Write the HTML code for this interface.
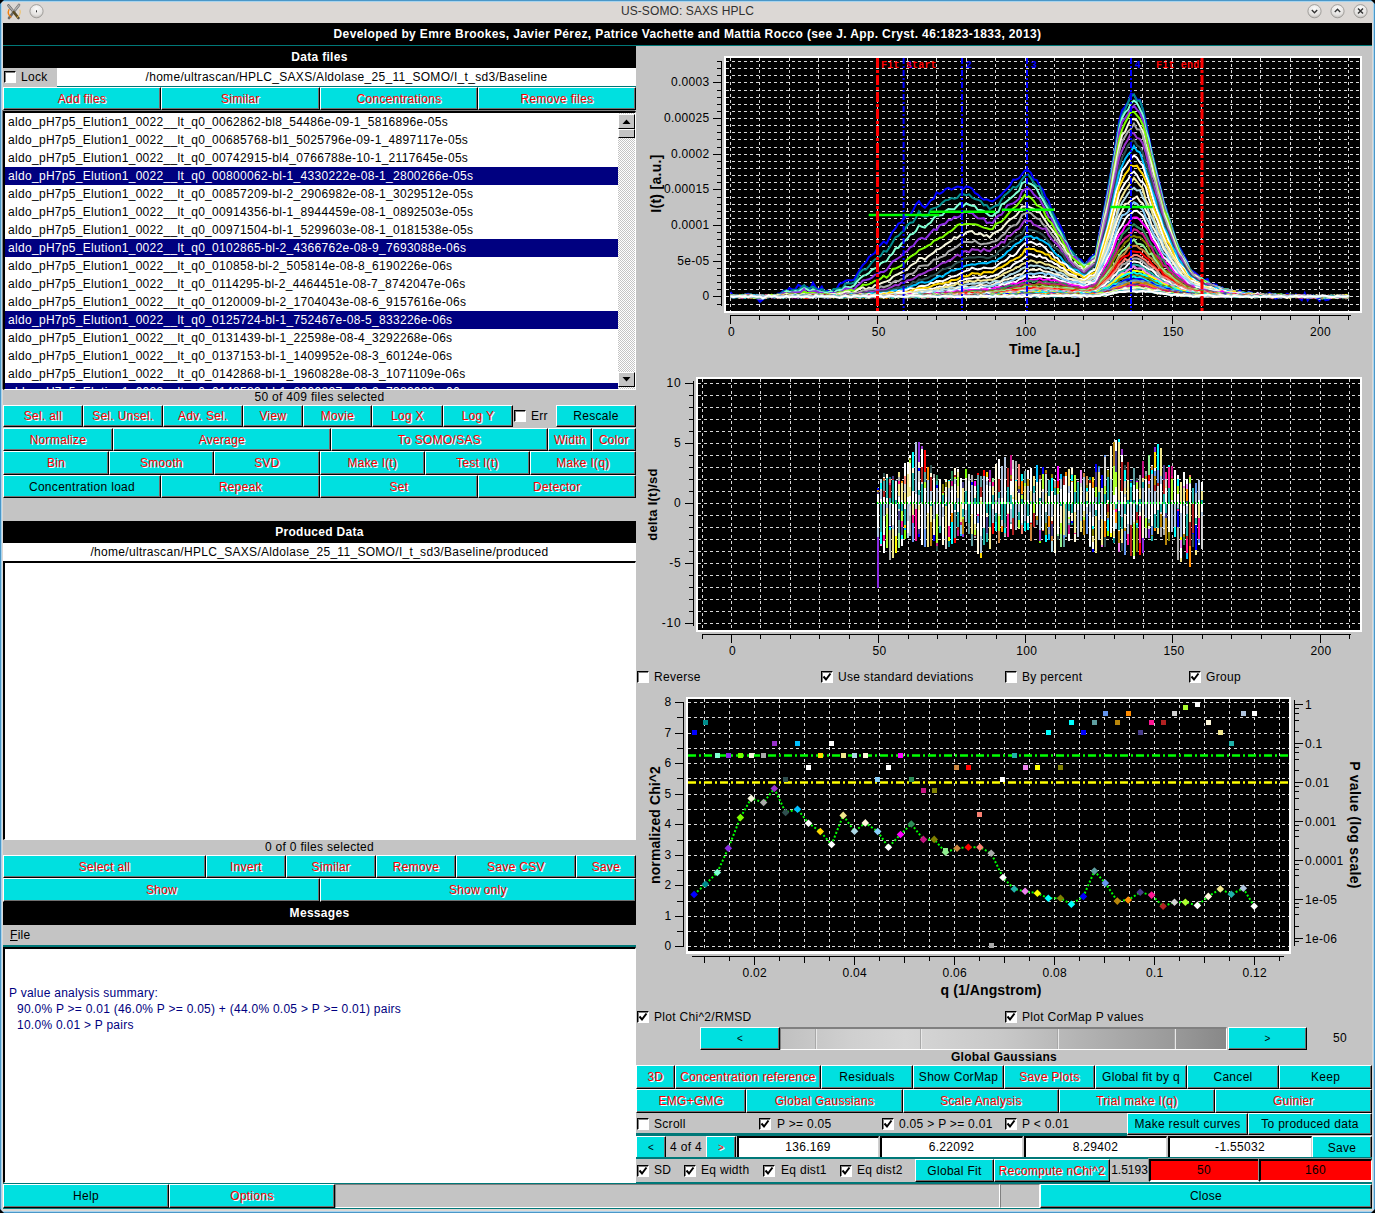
<!DOCTYPE html><html><head><meta charset="utf-8"><style>
html,body{margin:0;padding:0;width:1375px;height:1213px;overflow:hidden;background:#c4c4c4;font-family:"Liberation Sans", sans-serif;}
div{position:absolute;box-sizing:border-box;}
.t{white-space:nowrap;overflow:visible;}
.b{background:#00e0e0;border-top:1px solid #fff;border-left:1px solid #fff;border-right:1px solid #000;border-bottom:1px solid #000;box-shadow:inset -1px -1px 0 #707070;text-align:center;font-size:12px;letter-spacing:0.3px;color:#000;white-space:nowrap;overflow:hidden;}
.r{color:#f00;text-shadow:1px 1px 0 #fff;}
.cb{width:12px;height:12px;background:#fff;border-top:1px solid #000;border-left:1px solid #000;border-right:1px solid #fff;border-bottom:1px solid #fff;box-shadow:inset 1px 1px 0 #808080;}

</style></head><body>
<div style="left:0px;top:0px;width:1375px;height:1213px;background:#4a97c8;"></div>
<div style="left:1px;top:1px;width:1373px;height:1211px;background:#a8d4ee;"></div>
<div style="left:2px;top:2px;width:1371px;height:1209px;background:#dcd8d5;"></div>
<svg width="1375" height="1213" style="position:absolute;left:0;top:0"><path d="M0 0H4L0 4Z M1375 0H1371L1375 4Z M0 1213H4L0 1209Z M1375 1213H1371L1375 1209Z" fill="#000"/></svg>
<div style="left:3px;top:23px;width:1369px;height:1186px;background:#c4c4c4;"></div>
<div class="t" style="left:0px;top:1px;width:1375px;height:21px;line-height:21px;text-align:center;color:#303030;font-size:12px;font-weight:normal;letter-spacing:0.1px;">US-SOMO: SAXS HPLC</div>
<svg width="1375" height="23" style="position:absolute;left:0;top:0">
<defs><radialGradient id="gb" cx="50%" cy="30%" r="70%"><stop offset="0" stop-color="#fbfbfb"/><stop offset="0.7" stop-color="#e4e2e0"/><stop offset="1" stop-color="#bdbab7"/></radialGradient></defs>
<g stroke-linecap="round">
<path d="M8.5 5.5 L18.5 18" stroke="#555" stroke-width="2.6"/><path d="M19 5 L9 18" stroke="#6a6a6a" stroke-width="2.6"/>
<path d="M8.5 5.5 L13 11" stroke="#a8a8a8" stroke-width="1.6"/><path d="M19 5 L15 10" stroke="#b0b0b0" stroke-width="1.6"/>
<path d="M13.5 12 L18 17.5" stroke="#5a4a20" stroke-width="2.2"/>
<path d="M9 9.5 A6 6 0 0 0 11 17" stroke="#f08010" stroke-width="1.3" fill="none"/>
<path d="M20 10 A6 6 0 0 1 17 17.5" stroke="#f0c060" stroke-width="1" fill="none"/>
</g>
<circle cx="36.5" cy="11.2" r="6.6" fill="url(#gb)" stroke="#9a9794" stroke-width="0.9"/><rect x="36" y="10.3" width="1" height="2" fill="#333"/>
<circle cx="1314.5" cy="11.2" r="6.6" fill="url(#gb)" stroke="#9a9794" stroke-width="0.9"/><path d="M1311.8 10 L1314.5 12.7 L1317.2 10" stroke="#333" stroke-width="1.4" fill="none"/>
<circle cx="1337.5" cy="11.2" r="6.6" fill="url(#gb)" stroke="#9a9794" stroke-width="0.9"/><path d="M1334.8 12 L1337.5 9.3 L1340.2 12" stroke="#333" stroke-width="1.4" fill="none"/>
<circle cx="1360.5" cy="11.2" r="6.6" fill="url(#gb)" stroke="#9a9794" stroke-width="0.9"/><path d="M1358 8.4 L1363 13.6 M1363 8.4 L1358 13.6" stroke="#333" stroke-width="1.4" fill="none"/>
</svg>
<div style="left:3px;top:23px;width:1369px;height:22px;background:#000;"></div>
<div class="t" style="left:3px;top:23px;width:1369px;height:22px;line-height:22px;text-align:center;color:#fff;font-size:12px;font-weight:bold;letter-spacing:0.38px;">Developed by Emre Brookes, Javier Pérez, Patrice Vachette and Mattia Rocco (see J. App. Cryst. 46:1823-1833, 2013)</div>
<div style="left:3px;top:45px;width:1369px;height:1px;background:#007878;"></div>
<div style="left:3px;top:46px;width:633px;height:22px;background:#000;"></div>
<div class="t" style="left:3px;top:46px;width:633px;height:22px;line-height:22px;text-align:center;color:#fff;font-size:12px;font-weight:bold;letter-spacing:0.3px;">Data files</div>
<div style="left:57px;top:68px;width:579px;height:18px;background:#fff;"></div>
<div style="left:57px;top:86px;width:579px;height:1px;background:#007878;"></div>
<div class="cb" style="left:4px;top:71px"></div>
<div class="t" style="left:21px;top:68px;width:40px;height:18px;line-height:18px;text-align:left;color:#000;font-size:12px;font-weight:normal;letter-spacing:0.3px;">Lock</div>
<div class="t" style="left:57px;top:68px;width:579px;height:18px;line-height:18px;text-align:center;color:#000;font-size:12px;font-weight:normal;letter-spacing:0.3px;">/home/ultrascan/HPLC_SAXS/Aldolase_25_11_SOMO/I_t_sd3/Baseline</div>
<div class="b r" style="left:3px;top:87px;width:158px;height:23px;line-height:22px;">Add files</div>
<div class="b r" style="left:161px;top:87px;width:159px;height:23px;line-height:22px;">Similar</div>
<div class="b r" style="left:320px;top:87px;width:158px;height:23px;line-height:22px;">Concentrations</div>
<div class="b r" style="left:478px;top:87px;width:158px;height:23px;line-height:22px;">Remove files</div>
<div style="left:3px;top:111px;width:633px;height:279px;background:#fff;border-top:2px solid #000;border-left:2px solid #000;border-right:1px solid #fff;border-bottom:1px solid #fff;box-shadow:-1px -1px 0 #808080;overflow:hidden"></div>
<div style="left:5px;top:113px;width:613px;height:276px;overflow:hidden">
<div class="t" style="left:3px;top:0px;height:18px;line-height:18px;font-size:12px;letter-spacing:0.31px;color:#000">aldo_pH7p5_Elution1_0022__lt_q0_0062862-bl8_54486e-09-1_5816896e-05s</div>
<div class="t" style="left:3px;top:18px;height:18px;line-height:18px;font-size:12px;letter-spacing:0.31px;color:#000">aldo_pH7p5_Elution1_0022__lt_q0_00685768-bl1_5025796e-09-1_4897117e-05s</div>
<div class="t" style="left:3px;top:36px;height:18px;line-height:18px;font-size:12px;letter-spacing:0.31px;color:#000">aldo_pH7p5_Elution1_0022__lt_q0_00742915-bl4_0766788e-10-1_2117645e-05s</div>
<div style="left:0;top:54px;width:613px;height:18px;background:#000080"></div>
<div class="t" style="left:3px;top:54px;height:18px;line-height:18px;font-size:12px;letter-spacing:0.31px;color:#fff">aldo_pH7p5_Elution1_0022__lt_q0_00800062-bl-1_4330222e-08-1_2800266e-05s</div>
<div class="t" style="left:3px;top:72px;height:18px;line-height:18px;font-size:12px;letter-spacing:0.31px;color:#000">aldo_pH7p5_Elution1_0022__lt_q0_00857209-bl-2_2906982e-08-1_3029512e-05s</div>
<div class="t" style="left:3px;top:90px;height:18px;line-height:18px;font-size:12px;letter-spacing:0.31px;color:#000">aldo_pH7p5_Elution1_0022__lt_q0_00914356-bl-1_8944459e-08-1_0892503e-05s</div>
<div class="t" style="left:3px;top:108px;height:18px;line-height:18px;font-size:12px;letter-spacing:0.31px;color:#000">aldo_pH7p5_Elution1_0022__lt_q0_00971504-bl-1_5299603e-08-1_0181538e-05s</div>
<div style="left:0;top:126px;width:613px;height:18px;background:#000080"></div>
<div class="t" style="left:3px;top:126px;height:18px;line-height:18px;font-size:12px;letter-spacing:0.31px;color:#fff">aldo_pH7p5_Elution1_0022__lt_q0_0102865-bl-2_4366762e-08-9_7693088e-06s</div>
<div class="t" style="left:3px;top:144px;height:18px;line-height:18px;font-size:12px;letter-spacing:0.31px;color:#000">aldo_pH7p5_Elution1_0022__lt_q0_010858-bl-2_505814e-08-8_6190226e-06s</div>
<div class="t" style="left:3px;top:162px;height:18px;line-height:18px;font-size:12px;letter-spacing:0.31px;color:#000">aldo_pH7p5_Elution1_0022__lt_q0_0114295-bl-2_4464451e-08-7_8742047e-06s</div>
<div class="t" style="left:3px;top:180px;height:18px;line-height:18px;font-size:12px;letter-spacing:0.31px;color:#000">aldo_pH7p5_Elution1_0022__lt_q0_0120009-bl-2_1704043e-08-6_9157616e-06s</div>
<div style="left:0;top:198px;width:613px;height:18px;background:#000080"></div>
<div class="t" style="left:3px;top:198px;height:18px;line-height:18px;font-size:12px;letter-spacing:0.31px;color:#fff">aldo_pH7p5_Elution1_0022__lt_q0_0125724-bl-1_752467e-08-5_833226e-06s</div>
<div class="t" style="left:3px;top:216px;height:18px;line-height:18px;font-size:12px;letter-spacing:0.31px;color:#000">aldo_pH7p5_Elution1_0022__lt_q0_0131439-bl-1_22598e-08-4_3292268e-06s</div>
<div class="t" style="left:3px;top:234px;height:18px;line-height:18px;font-size:12px;letter-spacing:0.31px;color:#000">aldo_pH7p5_Elution1_0022__lt_q0_0137153-bl-1_1409952e-08-3_60124e-06s</div>
<div class="t" style="left:3px;top:252px;height:18px;line-height:18px;font-size:12px;letter-spacing:0.31px;color:#000">aldo_pH7p5_Elution1_0022__lt_q0_0142868-bl-1_1960828e-08-3_1071109e-06s</div>
<div style="left:0;top:270px;width:613px;height:18px;background:#000080"></div>
<div class="t" style="left:3px;top:270px;height:18px;line-height:18px;font-size:12px;letter-spacing:0.31px;color:#fff">aldo_pH7p5_Elution1_0022__lt_q0_0148582-bl-1_2000227e-08-2_7382088e-06s</div>
</div>
<div style="left:618px;top:113px;width:17px;height:276px;background:repeating-conic-gradient(#c4c4c4 0 25%, #fff 0 50%) 0 0/2px 2px;"></div>
<div style="left:618px;top:114px;width:17px;height:15px;background:#c4c4c4;border-top:1px solid #fff;border-left:1px solid #fff;border-right:1px solid #000;border-bottom:1px solid #000"><svg width="15" height="13" style="position:absolute;left:0;top:0"><path d="M3.5 9 L11.5 9 L7.5 4.5 Z" fill="#000"/></svg></div>
<div style="left:618px;top:129px;width:17px;height:9px;background:#c4c4c4;border-top:1px solid #fff;border-left:1px solid #fff;border-right:1px solid #000;border-bottom:1px solid #000"></div>
<div style="left:618px;top:372px;width:17px;height:15px;background:#c4c4c4;border-top:1px solid #fff;border-left:1px solid #fff;border-right:1px solid #000;border-bottom:1px solid #000"><svg width="15" height="13" style="position:absolute;left:0;top:0"><path d="M3.5 4 L11.5 4 L7.5 8.5 Z" fill="#000"/></svg></div>
<div class="t" style="left:3px;top:390px;width:633px;height:15px;line-height:15px;text-align:center;color:#000;font-size:12px;font-weight:normal;letter-spacing:0.3px;">50 of 409 files selected</div>
<div class="b r" style="left:3px;top:405px;width:80px;height:22px;line-height:21px;">Sel. all</div>
<div class="b r" style="left:83px;top:405px;width:80px;height:22px;line-height:21px;">Sel. Unsel.</div>
<div class="b r" style="left:163px;top:405px;width:80px;height:22px;line-height:21px;">Adv. Sel.</div>
<div class="b r" style="left:243px;top:405px;width:60px;height:22px;line-height:21px;">View</div>
<div class="b r" style="left:303px;top:405px;width:69px;height:22px;line-height:21px;">Movie</div>
<div class="b r" style="left:372px;top:405px;width:71px;height:22px;line-height:21px;">Log X</div>
<div class="b r" style="left:443px;top:405px;width:70px;height:22px;line-height:21px;">Log Y</div>
<div class="b" style="left:556px;top:405px;width:80px;height:22px;line-height:21px;">Rescale</div>
<div class="cb" style="left:514px;top:410px"></div>
<div class="t" style="left:531px;top:405px;width:25px;height:22px;line-height:22px;text-align:left;color:#000;font-size:12px;font-weight:normal;letter-spacing:0.3px;">Err</div>
<div class="b r" style="left:3px;top:428px;width:110px;height:23px;line-height:22px;">Normalize</div>
<div class="b r" style="left:113px;top:428px;width:218px;height:23px;line-height:22px;">Average</div>
<div class="b r" style="left:331px;top:428px;width:217px;height:23px;line-height:22px;">To SOMO/SAS</div>
<div class="b r" style="left:548px;top:428px;width:44px;height:23px;line-height:22px;">Width</div>
<div class="b r" style="left:592px;top:428px;width:44px;height:23px;line-height:22px;">Color</div>
<div class="b r" style="left:3px;top:451px;width:106px;height:24px;line-height:23px;">Bin</div>
<div class="b r" style="left:109px;top:451px;width:105px;height:24px;line-height:23px;">Smooth</div>
<div class="b r" style="left:214px;top:451px;width:106px;height:24px;line-height:23px;">SVD</div>
<div class="b r" style="left:320px;top:451px;width:105px;height:24px;line-height:23px;">Make I(t)</div>
<div class="b r" style="left:425px;top:451px;width:105px;height:24px;line-height:23px;">Test I(t)</div>
<div class="b r" style="left:530px;top:451px;width:106px;height:24px;line-height:23px;">Make I(q)</div>
<div class="b" style="left:3px;top:475px;width:158px;height:23px;line-height:22px;">Concentration load</div>
<div class="b r" style="left:161px;top:475px;width:159px;height:23px;line-height:22px;">Repeak</div>
<div class="b r" style="left:320px;top:475px;width:158px;height:23px;line-height:22px;">Set</div>
<div class="b r" style="left:478px;top:475px;width:158px;height:23px;line-height:22px;">Detector</div>
<div style="left:3px;top:521px;width:633px;height:22px;background:#000;"></div>
<div class="t" style="left:3px;top:521px;width:633px;height:22px;line-height:22px;text-align:center;color:#fff;font-size:12px;font-weight:bold;letter-spacing:0.3px;">Produced Data</div>
<div style="left:3px;top:543px;width:633px;height:18px;background:#fff;"></div>
<div class="t" style="left:3px;top:543px;width:633px;height:18px;line-height:18px;text-align:center;color:#000;font-size:12px;font-weight:normal;letter-spacing:0.3px;">/home/ultrascan/HPLC_SAXS/Aldolase_25_11_SOMO/I_t_sd3/Baseline/produced</div>
<div style="left:3px;top:561px;width:633px;height:279px;background:#fff;border-top:2px solid #000;border-left:2px solid #000;border-right:1px solid #fff;border-bottom:1px solid #fff"></div>
<div class="t" style="left:3px;top:840px;width:633px;height:15px;line-height:15px;text-align:center;color:#000;font-size:12px;font-weight:normal;letter-spacing:0.3px;">0 of 0 files selected</div>
<div class="b r" style="left:3px;top:855px;width:203px;height:23px;line-height:22px;">Select all</div>
<div class="b r" style="left:206px;top:855px;width:80px;height:23px;line-height:22px;">Invert</div>
<div class="b r" style="left:286px;top:855px;width:90px;height:23px;line-height:22px;">Similar</div>
<div class="b r" style="left:376px;top:855px;width:80px;height:23px;line-height:22px;">Remove</div>
<div class="b r" style="left:456px;top:855px;width:120px;height:23px;line-height:22px;">Save CSV</div>
<div class="b r" style="left:576px;top:855px;width:60px;height:23px;line-height:22px;">Save</div>
<div class="b r" style="left:3px;top:878px;width:317px;height:24px;line-height:23px;">Show</div>
<div class="b r" style="left:320px;top:878px;width:316px;height:24px;line-height:23px;">Show only</div>
<div style="left:3px;top:902px;width:633px;height:23px;background:#000;"></div>
<div class="t" style="left:3px;top:902px;width:633px;height:23px;line-height:23px;text-align:center;color:#fff;font-size:12px;font-weight:bold;letter-spacing:0.3px;">Messages</div>
<div class="t" style="left:10px;top:925px;width:40px;height:21px;line-height:21px;text-align:left;color:#000;font-size:12px;font-weight:normal;letter-spacing:0.3px;"><u>F</u>ile</div>
<div style="left:3px;top:945px;width:633px;height:2px;background:#007878;"></div>
<div style="left:3px;top:947px;width:633px;height:236px;background:#fff;border-top:2px solid #000;border-left:2px solid #000;border-right:1px solid #fff;border-bottom:1px solid #fff"></div>
<div class="t" style="left:9px;top:985px;width:400px;height:16px;line-height:16px;text-align:left;color:#000080;font-size:12px;font-weight:normal;letter-spacing:0.26px;">P value analysis summary:</div>
<div class="t" style="left:17px;top:1001px;width:600px;height:16px;line-height:16px;text-align:left;color:#000080;font-size:12px;font-weight:normal;letter-spacing:0.26px;">90.0% P &gt;= 0.01 (46.0% P &gt;= 0.05) + (44.0% 0.05 &gt; P &gt;= 0.01) pairs</div>
<div class="t" style="left:17px;top:1017px;width:600px;height:16px;line-height:16px;text-align:left;color:#000080;font-size:12px;font-weight:normal;letter-spacing:0.26px;">10.0% 0.01 &gt; P pairs</div>
<svg width="1375" height="1213" style="position:absolute;left:0;top:0" font-family="Liberation Sans, sans-serif"><rect x="724" y="56" width="638" height="257" fill="#fff"/>
<rect x="726" y="58" width="634" height="253" fill="#000"/>
<svg x="726" y="58" width="634" height="253" overflow="hidden"><g transform="translate(-726,-58)">
<path d="M726 304.5H1360M726 296.5H1360M726 289.5H1360M726 282.5H1360M726 275.5H1360M726 268.5H1360M726 261.5H1360M726 254.5H1360M726 246.5H1360M726 239.5H1360M726 232.5H1360M726 225.5H1360M726 218.5H1360M726 211.5H1360M726 204.5H1360M726 197.5H1360M726 189.5H1360M726 182.5H1360M726 175.5H1360M726 168.5H1360M726 161.5H1360M726 154.5H1360M726 147.5H1360M726 139.5H1360M726 132.5H1360M726 125.5H1360M726 118.5H1360M726 111.5H1360M726 104.5H1360M726 97.5H1360M726 90.5H1360M726 82.5H1360M726 75.5H1360M726 68.5H1360M726 61.5H1360" stroke="#d8d8d8" stroke-width="1" stroke-dasharray="3 3" fill="none" shape-rendering="crispEdges"/>
<path d="M730.5 58V311M759.5 58V311M789.5 58V311M818.5 58V311M848.5 58V311M877.5 58V311M907.5 58V311M936.5 58V311M966.5 58V311M995.5 58V311M1025.5 58V311M1054.5 58V311M1083.5 58V311M1113.5 58V311M1142.5 58V311M1172.5 58V311M1201.5 58V311M1231.5 58V311M1260.5 58V311M1290.5 58V311M1319.5 58V311M1348.5 58V311" stroke="#d8d8d8" stroke-width="1" stroke-dasharray="3 3" fill="none" shape-rendering="crispEdges"/>
<g transform="translate(730.5 296.4) scale(2.945 0.1)" fill="none" stroke-width="2" style="vector-effect:non-scaling-stroke">
<path d="M0 -44l1 40 1 -6 1 -4 1 14 1 -21 1 -4 1 28 1 -14 1 25 1 40 1 -22 1 -27 1 3 1 -11 1 16 1 -41 1 -3 1 -28 1 8 1 -33 1 14 1 -2 1 -43 1 15 1 -2 1 8 1 25 1 -68 1 51 1 21 1 -33 1 63 1 -24 1 31 1 -40 1 -5 1 -53 1 -10 1 -18 1 -10 1 5 1 -9 1 -53 1 -51 1 -45 1 -25 1 -52 1 -20 1 -20 1 -57 1 -26 1 -31 1 19 1 -57 1 -60 1 -33 1 -49 1 -12 1 -49 1 -16 1 -12 1 -45 1 -58 1 -33 1 44 1 21 1 -32 1 -41 1 -16 1 -64 1 15 1 -17 1 -30 1 -12 1 17 1 -16 1 -15 1 5 1 22 1 -28 1 5 1 15 1 46 1 15 1 32 1 21 1 -6 1 15 1 7 1 -21 1 -23 1 -25 1 -33 1 -26 1 -35 1 -55 1 1 1 -17 1 -40 1 -36 1 -2 1 26 1 65 1 7 1 62 1 30 1 79 1 37 1 92 1 57 1 54 1 51 1 69 1 89 1 41 1 56 1 37 1 33 1 8 1 52 1 -22 1 -42 1 -22 1 -25 1 -166 1 -149 1 -151 1 -163 1 -155 1 -172 1 -189 1 -183 1 -105 1 -37 1 -45 1 -85 1 12 1 46 1 2 1 93 1 119 1 152 1 146 1 130 1 113 1 121 1 133 1 86 1 114 1 71 1 122 1 56 1 47 1 57 1 55 1 87 1 14 1 21 1 25 1 34 1 10 1 -11 1 74 1 -21 1 4 1 43 1 -16 1 37 1 2 1 8 1 -13 1 10 1 -13 1 39 1 -10 1 -17 1 9 1 36 1 -33 1 23 1 -13 1 3 1 -14 1 22 1 36 1 -8 1 -37 1 18 1 -24 1 16 1 20 1 -30 1 36 1 24 1 -71 1 73 1 -44 1 -3 1 17 1 34 1 -49 1 42 1 -3 1 -19 1 -22 1 7 1 -10 1 21 1 -7 1 16" stroke="#0000ff" vector-effect="non-scaling-stroke"/>
<path d="M0 -10l1 -3 1 7 1 -3 1 1 1 -6 1 -7 1 -1 1 24 1 17 1 6 1 -1 1 -11 1 -4 1 -15 1 -8 1 4 1 -13 1 -25 1 -15 1 22 1 -20 1 -3 1 -2 1 -23 1 -23 1 32 1 -6 1 -12 1 23 1 23 1 -20 1 20 1 7 1 -1 1 -27 1 -1 1 -7 1 5 1 -53 1 0 1 0 1 -9 1 -46 1 -56 1 -28 1 0 1 -33 1 -39 1 -29 1 -17 1 -19 1 -48 1 5 1 -42 1 -49 1 -53 1 -12 1 -33 1 -21 1 -54 1 -24 1 -5 1 -47 1 -64 1 45 1 10 1 -8 1 -66 1 -12 1 -7 1 -17 1 -31 1 -24 1 -3 1 -18 1 7 1 -9 1 -37 1 0 1 10 1 -9 1 32 1 16 1 6 1 13 1 44 1 -4 1 41 1 -17 1 -17 1 -6 1 -55 1 -42 1 -21 1 -27 1 -37 1 9 1 -32 1 -52 1 -35 1 -15 1 37 1 47 1 32 1 3 1 96 1 59 1 44 1 53 1 62 1 72 1 62 1 41 1 66 1 76 1 24 1 34 1 40 1 31 1 27 1 -19 1 -21 1 -41 1 -11 1 -167 1 -130 1 -165 1 -150 1 -185 1 -150 1 -178 1 -190 1 -89 1 -61 1 -68 1 -60 1 -20 1 64 1 -3 1 83 1 160 1 158 1 109 1 124 1 149 1 96 1 125 1 99 1 77 1 89 1 109 1 72 1 67 1 59 1 50 1 55 1 38 1 36 1 2 1 39 1 9 1 3 1 27 1 22 1 16 1 -7 1 15 1 4 1 4 1 13 1 7 1 9 1 18 1 -4 1 -4 1 2 1 -1 1 6 1 0 1 -1 1 12 1 -1 1 10 1 -13 1 6 1 -2 1 -6 1 4 1 7 1 -5 1 15 1 -8 1 4 1 12 1 -15 1 14 1 -6 1 8 1 -6 1 1 1 10 1 3 1 -9 1 -7 1 5 1 0 1 -8 1 18 1 -14 1 3" stroke="#008b8b" vector-effect="non-scaling-stroke"/>
<path d="M0 -11l1 8 1 3 1 -2 1 1 1 -12 1 1 1 -4 1 25 1 2 1 17 1 -13 1 -9 1 1 1 -15 1 -2 1 -3 1 -3 1 -15 1 -23 1 6 1 10 1 -15 1 6 1 -21 1 -16 1 13 1 19 1 -19 1 18 1 4 1 4 1 8 1 1 1 -17 1 20 1 -25 1 -7 1 -1 1 -33 1 7 1 -3 1 -15 1 -40 1 -31 1 -24 1 -10 1 -18 1 -32 1 -15 1 -10 1 -41 1 -14 1 -7 1 -49 1 -25 1 -54 1 -6 1 -40 1 -26 1 -23 1 -45 1 -5 1 -29 1 -56 1 14 1 9 1 -33 1 -19 1 -45 1 -28 1 3 1 -4 1 -40 1 -20 1 2 1 -1 1 -32 1 -29 1 31 1 -27 1 12 1 10 1 4 1 39 1 1 1 8 1 25 1 24 1 2 1 -28 1 -15 1 -73 1 -12 1 -25 1 -23 1 -23 1 -30 1 -24 1 -75 1 -14 1 13 1 9 1 18 1 33 1 60 1 44 1 54 1 49 1 57 1 67 1 60 1 40 1 71 1 31 1 70 1 59 1 22 1 31 1 26 1 21 1 -6 1 -22 1 -45 1 -21 1 -150 1 -150 1 -139 1 -158 1 -140 1 -189 1 -168 1 -175 1 -112 1 -55 1 -26 1 -65 1 -27 1 26 1 55 1 69 1 145 1 87 1 155 1 118 1 122 1 116 1 124 1 101 1 79 1 98 1 79 1 97 1 55 1 46 1 52 1 67 1 36 1 18 1 25 1 6 1 28 1 12 1 20 1 20 1 3 1 7 1 14 1 11 1 0 1 15 1 -1 1 14 1 6 1 -4 1 6 1 -7 1 15 1 0 1 9 1 7 1 1 1 -10 1 11 1 -11 1 -1 1 11 1 -11 1 9 1 -5 1 8 1 -4 1 13 1 -7 1 8 1 0 1 -2 1 5 1 3 1 -3 1 2 1 11 1 -12 1 -2 1 7 1 -8 1 8 1 -17 1 8 1 -2 1 -9" stroke="#7fffd4" vector-effect="non-scaling-stroke"/>
<path d="M0 -6l1 -3 1 11 1 -2 1 1 1 -10 1 -9 1 3 1 13 1 20 1 7 1 -9 1 -13 1 -3 1 -3 1 -6 1 1 1 -6 1 -19 1 -1 1 7 1 -15 1 4 1 -3 1 -3 1 -29 1 39 1 -11 1 -5 1 -4 1 15 1 3 1 13 1 -3 1 -5 1 -3 1 -2 1 -5 1 -10 1 -27 1 2 1 1 1 8 1 -40 1 -21 1 -31 1 -5 1 -7 1 -16 1 -29 1 -7 1 -20 1 -2 1 -18 1 -42 1 -43 1 -18 1 -18 1 -20 1 -36 1 -13 1 -39 1 -12 1 -41 1 -31 1 -9 1 12 1 -29 1 -35 1 -34 1 7 1 -47 1 -11 1 -7 1 -35 1 -2 1 -29 1 6 1 -14 1 -35 1 -15 1 19 1 -2 1 31 1 24 1 3 1 -4 1 48 1 -6 1 7 1 -46 1 -30 1 -8 1 -42 1 -53 1 -10 1 -8 1 -21 1 -26 1 -73 1 -23 1 -11 1 21 1 45 1 26 1 21 1 56 1 47 1 71 1 21 1 70 1 67 1 34 1 43 1 37 1 78 1 55 1 -3 1 45 1 32 1 35 1 -26 1 -46 1 -10 1 -23 1 -142 1 -164 1 -118 1 -157 1 -151 1 -172 1 -161 1 -192 1 -101 1 -36 1 -45 1 -51 1 -29 1 40 1 32 1 71 1 145 1 102 1 135 1 123 1 113 1 108 1 126 1 99 1 66 1 106 1 91 1 83 1 41 1 64 1 51 1 47 1 32 1 15 1 28 1 27 1 20 1 14 1 6 1 18 1 16 1 3 1 11 1 10 1 13 1 -5 1 6 1 6 1 8 1 7 1 1 1 -1 1 5 1 2 1 4 1 -3 1 3 1 8 1 -7 1 2 1 1 1 6 1 1 1 6 1 -11 1 18 1 -8 1 1 1 -5 1 7 1 8 1 4 1 -1 1 -3 1 2 1 3 1 2 1 -4 1 -8 1 10 1 -8 1 -10 1 5 1 4 1 -7 1 6" stroke="#8a2be2" vector-effect="non-scaling-stroke"/>
<path d="M0 -5l1 -8 1 -1 1 21 1 -16 1 -10 1 14 1 -6 1 5 1 17 1 1 1 -2 1 6 1 -17 1 0 1 -9 1 -8 1 4 1 -2 1 -14 1 10 1 -9 1 11 1 -2 1 -2 1 -26 1 13 1 1 1 -2 1 7 1 8 1 -4 1 6 1 -6 1 1 1 1 1 -6 1 -12 1 2 1 -18 1 -2 1 -6 1 16 1 -24 1 -14 1 -31 1 4 1 -9 1 -13 1 -20 1 -3 1 -18 1 -30 1 20 1 -28 1 -60 1 -3 1 -15 1 -15 1 -26 1 -35 1 -26 1 -17 1 -19 1 -33 1 -11 1 -12 1 -20 1 -13 1 -35 1 -11 1 -20 1 -5 1 -27 1 -22 1 -14 1 -27 1 -31 1 -12 1 4 1 -3 1 -1 1 3 1 -1 1 8 1 14 1 12 1 7 1 10 1 -3 1 -50 1 -14 1 -9 1 -31 1 -36 1 -33 1 -35 1 -19 1 -35 1 -40 1 -40 1 12 1 18 1 31 1 43 1 13 1 22 1 71 1 46 1 26 1 57 1 54 1 28 1 59 1 49 1 63 1 34 1 26 1 24 1 24 1 27 1 -17 1 -28 1 -9 1 -40 1 -138 1 -126 1 -133 1 -146 1 -137 1 -185 1 -168 1 -155 1 -100 1 -66 1 -54 1 -55 1 1 1 35 1 34 1 59 1 104 1 135 1 122 1 119 1 147 1 96 1 116 1 66 1 81 1 112 1 79 1 68 1 63 1 55 1 54 1 41 1 42 1 6 1 29 1 17 1 14 1 28 1 14 1 6 1 22 1 8 1 3 1 4 1 15 1 2 1 -1 1 0 1 24 1 -14 1 6 1 14 1 4 1 -9 1 7 1 -1 1 -2 1 9 1 -1 1 1 1 -2 1 -5 1 1 1 9 1 3 1 -14 1 12 1 3 1 11 1 -9 1 11 1 0 1 7 1 -3 1 -1 1 10 1 -4 1 -6 1 5 1 -1 1 -4 1 2 1 -13 1 8 1 -11 1 -2" stroke="#7cfc00" vector-effect="non-scaling-stroke"/>
<path d="M0 3l1 -6 1 3 1 5 1 -7 1 -2 1 -6 1 -3 1 21 1 0 1 -1 1 -7 1 17 1 -23 1 5 1 -11 1 10 1 0 1 -11 1 -13 1 13 1 10 1 -20 1 13 1 -9 1 -5 1 10 1 -5 1 -4 1 4 1 0 1 2 1 10 1 -4 1 -10 1 -4 1 1 1 -4 1 -3 1 -16 1 -2 1 12 1 -2 1 -25 1 -15 1 -12 1 23 1 -21 1 10 1 -33 1 -2 1 -16 1 -11 1 -9 1 -11 1 -33 1 -18 1 -12 1 -15 1 -16 1 -13 1 -37 1 -17 1 -16 1 -45 1 -1 1 17 1 -31 1 -20 1 -19 1 -33 1 -5 1 -21 1 -24 1 -18 1 -18 1 -37 1 9 1 -27 1 0 1 -29 1 -10 1 -3 1 28 1 4 1 -8 1 24 1 -8 1 25 1 -36 1 -18 1 -15 1 -16 1 -37 1 -34 1 -26 1 -18 1 -20 1 -38 1 -52 1 -1 1 -2 1 15 1 10 1 33 1 2 1 44 1 44 1 45 1 31 1 41 1 43 1 56 1 31 1 67 1 22 1 78 1 2 1 30 1 9 1 43 1 -49 1 3 1 -53 1 -11 1 -127 1 -136 1 -152 1 -118 1 -109 1 -201 1 -152 1 -143 1 -113 1 -31 1 -70 1 -55 1 -3 1 17 1 51 1 54 1 128 1 116 1 96 1 132 1 123 1 98 1 116 1 74 1 81 1 84 1 83 1 76 1 43 1 47 1 66 1 47 1 26 1 12 1 22 1 34 1 13 1 23 1 9 1 7 1 9 1 7 1 14 1 13 1 -5 1 10 1 1 1 6 1 2 1 5 1 2 1 10 1 -6 1 10 1 -1 1 -8 1 11 1 10 1 -13 1 5 1 0 1 6 1 -1 1 4 1 3 1 -12 1 13 1 2 1 2 1 -11 1 7 1 9 1 0 1 -1 1 0 1 16 1 -16 1 5 1 2 1 -3 1 -8 1 -7 1 8 1 -4 1 7 1 -9" stroke="#f5f5dc" vector-effect="non-scaling-stroke"/>
<path d="M0 -7l1 13 1 -5 1 -7 1 14 1 -10 1 -6 1 13 1 -2 1 1 1 -2 1 10 1 -16 1 3 1 -7 1 -1 1 4 1 -3 1 9 1 -7 1 2 1 -6 1 -9 1 16 1 -12 1 1 1 6 1 -19 1 6 1 -5 1 6 1 12 1 8 1 -21 1 12 1 2 1 -13 1 2 1 4 1 -11 1 -3 1 0 1 -5 1 -4 1 -10 1 -14 1 1 1 -10 1 1 1 -6 1 2 1 -28 1 9 1 -10 1 -10 1 -26 1 -19 1 6 1 -22 1 -4 1 -41 1 -5 1 -6 1 -27 1 -47 1 -3 1 -2 1 -1 1 -25 1 -36 1 1 1 -19 1 -10 1 -15 1 -39 1 -12 1 -16 1 -20 1 -24 1 -22 1 3 1 -1 1 3 1 -16 1 21 1 16 1 -7 1 -1 1 -6 1 -13 1 -4 1 -19 1 -33 1 -19 1 -41 1 -30 1 -17 1 -3 1 -37 1 -65 1 -12 1 -17 1 11 1 28 1 25 1 10 1 47 1 26 1 33 1 45 1 32 1 41 1 49 1 31 1 47 1 53 1 24 1 21 1 26 1 35 1 2 1 -22 1 -23 1 -20 1 -9 1 -137 1 -114 1 -161 1 -97 1 -152 1 -130 1 -161 1 -166 1 -98 1 -51 1 -50 1 -29 1 -49 1 55 1 2 1 62 1 127 1 113 1 141 1 64 1 132 1 95 1 126 1 71 1 92 1 69 1 77 1 65 1 40 1 58 1 52 1 52 1 11 1 39 1 7 1 42 1 11 1 3 1 16 1 -8 1 15 1 35 1 4 1 0 1 -6 1 10 1 9 1 15 1 1 1 16 1 -3 1 -10 1 0 1 14 1 -6 1 -7 1 10 1 5 1 -4 1 3 1 3 1 4 1 0 1 -3 1 5 1 -11 1 5 1 0 1 -3 1 4 1 3 1 8 1 5 1 -13 1 19 1 2 1 0 1 -8 1 -2 1 -5 1 6 1 8 1 -13 1 -5 1 4 1 0" stroke="#a9a9a9" vector-effect="non-scaling-stroke"/>
<path d="M0 -5l1 -5 1 9 1 8 1 -6 1 -3 1 9 1 -15 1 13 1 -5 1 4 1 1 1 -13 1 12 1 -1 1 -6 1 -4 1 3 1 3 1 -13 1 4 1 -10 1 12 1 -3 1 2 1 2 1 -6 1 -5 1 10 1 1 1 4 1 -14 1 13 1 -5 1 6 1 -7 1 2 1 9 1 -14 1 -10 1 16 1 -11 1 0 1 -3 1 -12 1 4 1 -14 1 -9 1 10 1 -11 1 -12 1 -1 1 -3 1 2 1 -19 1 -11 1 -18 1 6 1 -27 1 -1 1 -22 1 -5 1 -9 1 -21 1 -23 1 -7 1 -12 1 -19 1 -10 1 -12 1 -17 1 -23 1 -19 1 -3 1 -18 1 -11 1 -25 1 -25 1 16 1 -46 1 -6 1 12 1 -30 1 6 1 -1 1 20 1 -30 1 19 1 5 1 -30 1 -12 1 -20 1 -30 1 6 1 -66 1 -2 1 -28 1 -28 1 -13 1 -47 1 -41 1 10 1 1 1 37 1 9 1 20 1 12 1 -6 1 69 1 37 1 32 1 25 1 39 1 55 1 19 1 49 1 26 1 43 1 18 1 5 1 40 1 -38 1 -21 1 -20 1 -24 1 -118 1 -121 1 -112 1 -125 1 -167 1 -128 1 -144 1 -149 1 -69 1 -63 1 -46 1 -67 1 6 1 46 1 9 1 48 1 90 1 127 1 133 1 94 1 109 1 91 1 109 1 84 1 53 1 79 1 80 1 60 1 33 1 65 1 51 1 39 1 43 1 1 1 30 1 19 1 12 1 1 1 28 1 0 1 16 1 20 1 -9 1 17 1 9 1 2 1 4 1 -4 1 12 1 -9 1 11 1 8 1 2 1 -4 1 15 1 3 1 -6 1 -7 1 4 1 3 1 2 1 12 1 -10 1 9 1 -15 1 5 1 2 1 -1 1 3 1 2 1 1 1 7 1 6 1 -8 1 -4 1 4 1 6 1 -6 1 5 1 -6 1 4 1 -5 1 -12 1 6 1 -5 1 11" stroke="#9932cc" vector-effect="non-scaling-stroke"/>
<path d="M0 3l1 -4 1 -3 1 5 1 -8 1 8 1 -11 1 2 1 15 1 -8 1 6 1 -8 1 7 1 -5 1 -3 1 19 1 -6 1 -12 1 -1 1 -9 1 7 1 7 1 -10 1 6 1 -4 1 -1 1 -3 1 10 1 -3 1 9 1 -24 1 18 1 0 1 3 1 -4 1 -2 1 -8 1 2 1 -1 1 0 1 -3 1 -7 1 7 1 -8 1 9 1 -19 1 1 1 -9 1 20 1 -19 1 -1 1 -8 1 0 1 -6 1 -12 1 -6 1 -7 1 -7 1 -6 1 -12 1 -6 1 -3 1 -33 1 8 1 -32 1 5 1 -11 1 -8 1 -20 1 -9 1 -11 1 -25 1 -21 1 -6 1 -13 1 -5 1 -24 1 -21 1 -9 1 -30 1 -5 1 -9 1 2 1 1 1 -5 1 0 1 2 1 10 1 -4 1 -17 1 -2 1 -45 1 -17 1 -22 1 -19 1 -37 1 -9 1 -43 1 -14 1 -13 1 -59 1 13 1 5 1 7 1 10 1 12 1 20 1 30 1 39 1 34 1 23 1 20 1 28 1 25 1 62 1 24 1 33 1 18 1 16 1 23 1 21 1 -17 1 -29 1 -26 1 -26 1 -93 1 -107 1 -122 1 -109 1 -147 1 -121 1 -153 1 -129 1 -90 1 -57 1 -66 1 -27 1 -29 1 57 1 18 1 55 1 101 1 95 1 103 1 124 1 71 1 114 1 62 1 90 1 74 1 76 1 72 1 61 1 51 1 34 1 49 1 42 1 30 1 13 1 28 1 -11 1 45 1 10 1 2 1 9 1 24 1 14 1 4 1 3 1 4 1 2 1 -4 1 4 1 14 1 -2 1 1 1 -1 1 11 1 5 1 -7 1 -3 1 14 1 -13 1 3 1 14 1 8 1 -5 1 -1 1 -5 1 13 1 -23 1 2 1 19 1 8 1 -8 1 -1 1 -4 1 5 1 7 1 12 1 -13 1 -3 1 6 1 -4 1 -1 1 1 1 4 1 -9 1 9 1 -17 1 12" stroke="#2f4f4f" vector-effect="non-scaling-stroke"/>
<path d="M0 -3l1 7 1 -6 1 3 1 -5 1 8 1 4 1 -8 1 3 1 8 1 -4 1 5 1 -11 1 2 1 -3 1 -15 1 13 1 -2 1 -3 1 3 1 4 1 -9 1 -2 1 23 1 -17 1 -1 1 3 1 -11 1 10 1 -7 1 9 1 0 1 -6 1 9 1 -4 1 5 1 -3 1 -9 1 0 1 7 1 0 1 -22 1 18 1 -2 1 -12 1 4 1 -2 1 -10 1 -3 1 5 1 -11 1 4 1 -3 1 -2 1 -5 1 -12 1 -6 1 2 1 -12 1 -2 1 -8 1 -12 1 -16 1 -6 1 -22 1 -6 1 8 1 -7 1 -10 1 -20 1 -16 1 -16 1 10 1 -29 1 -13 1 -24 1 3 1 -14 1 -4 1 -22 1 -10 1 -7 1 -6 1 5 1 -12 1 -4 1 -3 1 5 1 -12 1 -12 1 5 1 -27 1 -13 1 -25 1 -35 1 -17 1 -35 1 -25 1 -12 1 -25 1 -33 1 -4 1 -4 1 22 1 -6 1 22 1 8 1 20 1 19 1 42 1 37 1 30 1 15 1 39 1 33 1 21 1 32 1 2 1 9 1 35 1 15 1 -5 1 -33 1 -12 1 -17 1 -97 1 -138 1 -75 1 -113 1 -133 1 -138 1 -136 1 -136 1 -65 1 -68 1 -43 1 -32 1 -53 1 49 1 12 1 84 1 97 1 92 1 102 1 74 1 120 1 71 1 104 1 52 1 72 1 77 1 43 1 79 1 34 1 63 1 33 1 42 1 22 1 21 1 20 1 32 1 -1 1 13 1 6 1 4 1 2 1 18 1 3 1 7 1 5 1 6 1 9 1 4 1 0 1 -5 1 10 1 -4 1 19 1 -7 1 1 1 1 1 12 1 5 1 3 1 -8 1 -16 1 13 1 9 1 -9 1 4 1 -2 1 5 1 6 1 -2 1 -6 1 4 1 -4 1 15 1 -11 1 7 1 1 1 -7 1 7 1 -3 1 -3 1 -2 1 -2 1 -3 1 3 1 4 1 -17" stroke="#00bfff" vector-effect="non-scaling-stroke"/>
<path d="M0 -1l1 -2 1 7 1 8 1 -8 1 -6 1 -2 1 2 1 -2 1 -1 1 1 1 5 1 -1 1 1 1 3 1 -13 1 15 1 -7 1 -3 1 12 1 -15 1 5 1 -3 1 3 1 6 1 -12 1 2 1 -5 1 2 1 14 1 -15 1 1 1 1 1 3 1 6 1 -8 1 4 1 -19 1 18 1 2 1 -4 1 -10 1 11 1 8 1 -26 1 4 1 5 1 -9 1 8 1 0 1 -14 1 5 1 -9 1 3 1 -10 1 -1 1 7 1 -20 1 3 1 -14 1 -2 1 -15 1 4 1 3 1 -24 1 -8 1 3 1 -8 1 -22 1 1 1 -18 1 -3 1 2 1 -14 1 -15 1 -16 1 -4 1 -9 1 -18 1 -17 1 -10 1 -8 1 -25 1 12 1 7 1 -7 1 -13 1 4 1 3 1 0 1 -13 1 -26 1 -22 1 -8 1 -23 1 -31 1 2 1 -23 1 -41 1 -35 1 -28 1 -10 1 -5 1 12 1 18 1 -13 1 22 1 25 1 36 1 9 1 44 1 8 1 43 1 8 1 15 1 37 1 12 1 26 1 16 1 20 1 11 1 -14 1 -28 1 -21 1 -10 1 -85 1 -115 1 -110 1 -96 1 -109 1 -134 1 -133 1 -87 1 -120 1 -39 1 -46 1 -37 1 -28 1 21 1 50 1 27 1 102 1 79 1 103 1 98 1 84 1 79 1 91 1 61 1 78 1 70 1 59 1 63 1 35 1 31 1 56 1 38 1 7 1 25 1 13 1 24 1 14 1 5 1 -2 1 17 1 24 1 -6 1 2 1 6 1 17 1 -2 1 -10 1 22 1 -4 1 10 1 6 1 -3 1 -7 1 1 1 13 1 0 1 4 1 8 1 -14 1 -4 1 1 1 12 1 -10 1 2 1 8 1 -1 1 3 1 -2 1 -7 1 17 1 3 1 -10 1 6 1 12 1 -3 1 0 1 -2 1 -6 1 -5 1 5 1 -2 1 4 1 -11 1 -3 1 8 1 2" stroke="#ffffff" vector-effect="non-scaling-stroke"/>
<path d="M0 -13l1 7 1 10 1 5 1 -8 1 -9 1 10 1 -2 1 3 1 -6 1 -4 1 15 1 -6 1 -1 1 2 1 3 1 -12 1 4 1 -5 1 -5 1 12 1 -6 1 5 1 -2 1 -3 1 2 1 8 1 -17 1 7 1 9 1 6 1 -12 1 -4 1 -1 1 -1 1 8 1 -7 1 13 1 -10 1 -7 1 9 1 -3 1 -1 1 -3 1 -10 1 13 1 -14 1 14 1 -5 1 -1 1 -5 1 0 1 -8 1 3 1 -17 1 6 1 -1 1 -6 1 -5 1 1 1 0 1 -7 1 -11 1 -11 1 -8 1 1 1 -6 1 0 1 -12 1 -16 1 -6 1 -9 1 4 1 -13 1 -1 1 -23 1 -1 1 -5 1 -19 1 -17 1 6 1 -11 1 -23 1 5 1 0 1 10 1 -25 1 1 1 -1 1 4 1 -27 1 -18 1 -7 1 -19 1 -17 1 -27 1 -9 1 -17 1 -13 1 -24 1 -53 1 -10 1 6 1 -1 1 22 1 3 1 11 1 20 1 -1 1 44 1 11 1 19 1 24 1 10 1 46 1 1 1 23 1 16 1 7 1 9 1 31 1 -21 1 -14 1 -19 1 -10 1 -89 1 -104 1 -84 1 -112 1 -105 1 -105 1 -131 1 -121 1 -67 1 -61 1 -35 1 -51 1 6 1 -5 1 47 1 38 1 66 1 87 1 114 1 93 1 62 1 90 1 73 1 79 1 36 1 58 1 89 1 46 1 38 1 27 1 59 1 22 1 23 1 19 1 6 1 33 1 10 1 5 1 0 1 16 1 13 1 -1 1 10 1 6 1 2 1 1 1 -10 1 26 1 -5 1 6 1 3 1 -8 1 5 1 2 1 9 1 3 1 -5 1 5 1 3 1 -6 1 12 1 -3 1 -8 1 5 1 -4 1 10 1 -8 1 9 1 -10 1 5 1 3 1 -5 1 8 1 7 1 -11 1 8 1 -5 1 5 1 -7 1 11 1 1 1 0 1 -13 1 14 1 -2 1 -3" stroke="#ffd700" vector-effect="non-scaling-stroke"/>
<path d="M0 -3l1 -1 1 8 1 -10 1 3 1 -5 1 1 1 9 1 -4 1 3 1 -3 1 1 1 0 1 -4 1 4 1 -4 1 3 1 1 1 -7 1 -1 1 -1 1 3 1 5 1 -2 1 -1 1 10 1 -2 1 -16 1 9 1 17 1 -16 1 -1 1 8 1 -19 1 6 1 1 1 5 1 -4 1 -2 1 1 1 6 1 -5 1 0 1 -2 1 6 1 -9 1 1 1 -2 1 -1 1 9 1 -15 1 -1 1 10 1 -7 1 1 1 -6 1 -12 1 1 1 -12 1 8 1 3 1 -11 1 11 1 -31 1 2 1 -3 1 0 1 0 1 -10 1 -2 1 -9 1 -11 1 4 1 -26 1 10 1 -20 1 1 1 -6 1 -22 1 -9 1 -8 1 -5 1 -1 1 -9 1 5 1 -6 1 -9 1 14 1 -9 1 -8 1 -11 1 -8 1 -24 1 -20 1 -15 1 -4 1 -33 1 -17 1 -15 1 -16 1 -26 1 -30 1 0 1 14 1 14 1 -13 1 21 1 -1 1 33 1 5 1 21 1 9 1 30 1 7 1 31 1 25 1 8 1 12 1 31 1 -1 1 13 1 -16 1 -30 1 3 1 -21 1 -71 1 -87 1 -95 1 -95 1 -98 1 -121 1 -116 1 -119 1 -54 1 -52 1 -32 1 -59 1 -21 1 34 1 53 1 18 1 46 1 114 1 90 1 70 1 64 1 85 1 81 1 69 1 47 1 66 1 44 1 40 1 40 1 49 1 39 1 38 1 6 1 14 1 13 1 17 1 23 1 14 1 -11 1 22 1 -8 1 31 1 -2 1 3 1 -3 1 2 1 11 1 -4 1 15 1 -2 1 7 1 -2 1 1 1 -4 1 -16 1 29 1 -5 1 -4 1 5 1 -7 1 15 1 -10 1 9 1 -9 1 4 1 0 1 6 1 9 1 -3 1 -9 1 7 1 -5 1 13 1 -9 1 -1 1 19 1 -15 1 -10 1 15 1 -11 1 4 1 -5 1 6 1 1 1 -3 1 -1" stroke="#ffffff" vector-effect="non-scaling-stroke"/>
<path d="M0 3l1 2 1 -11 1 9 1 4 1 -2 1 -8 1 15 1 -15 1 0 1 -3 1 9 1 2 1 -6 1 0 1 -7 1 7 1 3 1 4 1 -7 1 -1 1 -6 1 6 1 -7 1 0 1 11 1 2 1 -3 1 -2 1 4 1 -9 1 0 1 -2 1 5 1 4 1 -5 1 7 1 -6 1 5 1 -12 1 22 1 -20 1 -1 1 4 1 -3 1 -1 1 -6 1 -3 1 9 1 -11 1 13 1 -8 1 -1 1 9 1 -12 1 3 1 -11 1 8 1 3 1 -5 1 -12 1 -5 1 -3 1 2 1 -16 1 7 1 -3 1 -12 1 2 1 5 1 -21 1 0 1 -3 1 -17 1 6 1 -15 1 -4 1 -24 1 20 1 -23 1 -10 1 -9 1 7 1 -1 1 -16 1 11 1 -6 1 -1 1 -7 1 5 1 -17 1 -14 1 -15 1 -22 1 -11 1 -15 1 -9 1 -24 1 -5 1 -26 1 -11 1 -9 1 -18 1 8 1 16 1 -11 1 11 1 17 1 -1 1 16 1 11 1 7 1 27 1 4 1 28 1 19 1 5 1 15 1 17 1 11 1 10 1 -3 1 -29 1 -11 1 -6 1 -80 1 -95 1 -62 1 -117 1 -60 1 -118 1 -75 1 -138 1 -58 1 -55 1 -41 1 -39 1 -48 1 36 1 39 1 31 1 115 1 52 1 57 1 94 1 63 1 85 1 50 1 61 1 55 1 46 1 48 1 53 1 54 1 17 1 35 1 44 1 20 1 6 1 12 1 12 1 17 1 2 1 8 1 12 1 4 1 12 1 10 1 -5 1 -2 1 -6 1 31 1 -6 1 5 1 -4 1 10 1 -5 1 -4 1 12 1 -3 1 -8 1 5 1 16 1 -20 1 17 1 -5 1 4 1 1 1 2 1 -8 1 9 1 4 1 -3 1 -2 1 13 1 -15 1 10 1 -7 1 -3 1 7 1 0 1 5 1 1 1 6 1 -11 1 1 1 10 1 -16 1 -8 1 6 1 -5" stroke="#f0e68c" vector-effect="non-scaling-stroke"/>
<path d="M0 2l1 4 1 -6 1 2 1 4 1 -12 1 5 1 4 1 -4 1 3 1 -5 1 -5 1 12 1 3 1 -15 1 -6 1 17 1 2 1 1 1 -7 1 0 1 2 1 -7 1 9 1 -1 1 3 1 -15 1 2 1 -1 1 12 1 -12 1 6 1 -2 1 1 1 5 1 -1 1 7 1 -5 1 -2 1 4 1 -7 1 -7 1 10 1 2 1 -2 1 -7 1 -9 1 9 1 0 1 7 1 -10 1 -3 1 5 1 -3 1 2 1 -11 1 -5 1 4 1 -3 1 1 1 1 1 -2 1 -5 1 -7 1 -4 1 -8 1 1 1 -8 1 0 1 2 1 -7 1 7 1 -25 1 10 1 -7 1 -19 1 12 1 -10 1 -11 1 -4 1 -12 1 -5 1 -6 1 3 1 -7 1 5 1 -8 1 -6 1 16 1 -17 1 -12 1 5 1 -4 1 -36 1 -7 1 -23 1 -6 1 -13 1 -15 1 -23 1 -13 1 -8 1 -13 1 8 1 -6 1 7 1 10 1 13 1 -6 1 23 1 0 1 27 1 -1 1 13 1 23 1 24 1 3 1 5 1 15 1 12 1 1 1 -6 1 -12 1 -23 1 -8 1 -67 1 -86 1 -65 1 -90 1 -70 1 -107 1 -111 1 -93 1 -61 1 -41 1 -47 1 -35 1 -24 1 27 1 -4 1 72 1 54 1 93 1 55 1 60 1 92 1 37 1 93 1 49 1 39 1 63 1 33 1 47 1 56 1 21 1 26 1 24 1 26 1 10 1 4 1 23 1 3 1 18 1 -7 1 5 1 24 1 13 1 -1 1 -11 1 12 1 -5 1 16 1 1 1 -2 1 -4 1 10 1 6 1 -7 1 3 1 -2 1 6 1 3 1 -2 1 15 1 -14 1 -5 1 4 1 9 1 3 1 -15 1 10 1 0 1 -2 1 6 1 -2 1 -7 1 12 1 -12 1 9 1 2 1 -3 1 0 1 -2 1 2 1 6 1 -13 1 9 1 3 1 -10 1 0 1 3" stroke="#add8e6" vector-effect="non-scaling-stroke"/>
<path d="M0 0l1 -3 1 -8 1 11 1 7 1 -4 1 -6 1 4 1 3 1 -8 1 1 1 5 1 -3 1 5 1 -1 1 -1 1 6 1 -10 1 2 1 2 1 -3 1 0 1 4 1 -1 1 1 1 -12 1 17 1 -9 1 -5 1 11 1 0 1 0 1 5 1 -17 1 8 1 5 1 -3 1 -5 1 3 1 3 1 -8 1 8 1 -3 1 -4 1 4 1 -5 1 4 1 -19 1 17 1 -7 1 9 1 0 1 -7 1 1 1 -1 1 -4 1 -7 1 -7 1 -2 1 9 1 -13 1 -1 1 11 1 -4 1 -6 1 -14 1 12 1 -3 1 -13 1 6 1 -3 1 -8 1 -1 1 12 1 -12 1 -16 1 8 1 -23 1 2 1 -8 1 -7 1 11 1 -10 1 0 1 -10 1 -10 1 10 1 -4 1 10 1 -16 1 -9 1 -9 1 -15 1 -17 1 -2 1 -14 1 3 1 -27 1 -11 1 -4 1 -34 1 2 1 -15 1 3 1 2 1 -10 1 20 1 7 1 4 1 7 1 16 1 -1 1 12 1 19 1 20 1 -6 1 12 1 8 1 9 1 5 1 20 1 -22 1 0 1 -8 1 -20 1 -63 1 -74 1 -81 1 -60 1 -86 1 -102 1 -91 1 -76 1 -48 1 -71 1 -5 1 -33 1 -18 1 -18 1 48 1 24 1 66 1 52 1 98 1 47 1 58 1 51 1 77 1 42 1 52 1 35 1 48 1 50 1 23 1 44 1 18 1 35 1 12 1 2 1 5 1 24 1 13 1 8 1 1 1 13 1 0 1 2 1 9 1 9 1 -3 1 12 1 9 1 -14 1 -2 1 6 1 12 1 19 1 -15 1 -6 1 7 1 -10 1 14 1 -6 1 3 1 1 1 9 1 -7 1 -2 1 5 1 5 1 -4 1 3 1 -6 1 -3 1 5 1 1 1 4 1 -1 1 13 1 -10 1 -4 1 8 1 -8 1 12 1 -10 1 1 1 -4 1 1 1 -13 1 30 1 -10" stroke="#fff8dc" vector-effect="non-scaling-stroke"/>
<path d="M0 4l1 -4 1 4 1 0 1 5 1 -1 1 -3 1 -14 1 14 1 -20 1 10 1 7 1 -6 1 -1 1 12 1 3 1 -18 1 14 1 -11 1 1 1 13 1 -13 1 0 1 -4 1 8 1 -4 1 1 1 4 1 -11 1 4 1 -3 1 7 1 -5 1 12 1 -2 1 -9 1 7 1 1 1 -4 1 10 1 -10 1 -2 1 5 1 4 1 -18 1 8 1 8 1 -3 1 6 1 0 1 1 1 -7 1 -8 1 -2 1 3 1 -8 1 1 1 9 1 -3 1 -8 1 -4 1 -5 1 13 1 1 1 -28 1 13 1 -9 1 4 1 5 1 -19 1 2 1 -9 1 2 1 7 1 -10 1 -10 1 6 1 -10 1 -11 1 9 1 -11 1 -6 1 -7 1 5 1 3 1 -10 1 6 1 -9 1 -2 1 -1 1 -14 1 -10 1 8 1 -22 1 -5 1 -9 1 -12 1 -18 1 -4 1 -14 1 -10 1 -13 1 -4 1 6 1 -6 1 -5 1 -2 1 17 1 -11 1 13 1 8 1 10 1 13 1 15 1 7 1 11 1 10 1 -5 1 5 1 19 1 6 1 0 1 -3 1 -25 1 -15 1 -68 1 -71 1 -47 1 -75 1 -73 1 -74 1 -93 1 -84 1 -67 1 -8 1 -24 1 -68 1 -29 1 15 1 35 1 23 1 76 1 47 1 79 1 62 1 35 1 79 1 58 1 23 1 49 1 63 1 15 1 56 1 21 1 24 1 13 1 41 1 8 1 17 1 7 1 23 1 1 1 10 1 9 1 -1 1 2 1 9 1 8 1 -3 1 14 1 -5 1 1 1 6 1 3 1 1 1 6 1 -1 1 -5 1 17 1 -18 1 6 1 2 1 8 1 -2 1 2 1 -7 1 1 1 -3 1 7 1 12 1 -6 1 -2 1 -3 1 11 1 -6 1 -1 1 5 1 -2 1 -13 1 14 1 -10 1 9 1 5 1 -8 1 5 1 -3 1 12 1 -15 1 4 1 -10 1 5" stroke="#87cefa" vector-effect="non-scaling-stroke"/>
<path d="M0 2l1 4 1 -6 1 2 1 2 1 -15 1 12 1 -6 1 -3 1 6 1 -1 1 0 1 -2 1 2 1 0 1 2 1 4 1 -1 1 1 1 -5 1 -6 1 13 1 -2 1 2 1 -5 1 -7 1 8 1 -4 1 15 1 -12 1 -3 1 6 1 6 1 -12 1 3 1 -11 1 14 1 -3 1 1 1 -3 1 11 1 -18 1 4 1 5 1 0 1 -5 1 0 1 5 1 -2 1 -3 1 4 1 -1 1 0 1 -1 1 4 1 -3 1 -9 1 -3 1 4 1 19 1 -14 1 -13 1 -9 1 1 1 5 1 0 1 -1 1 -14 1 6 1 4 1 -13 1 -2 1 14 1 -11 1 -13 1 -2 1 9 1 -12 1 -10 1 -1 1 4 1 -7 1 -8 1 0 1 8 1 -22 1 12 1 9 1 -10 1 11 1 -19 1 -10 1 -24 1 7 1 -10 1 -12 1 -4 1 -4 1 -25 1 -8 1 -21 1 -1 1 11 1 -5 1 -2 1 1 1 -3 1 8 1 9 1 -11 1 6 1 16 1 15 1 5 1 11 1 11 1 9 1 -4 1 7 1 7 1 16 1 -18 1 -22 1 1 1 -7 1 -77 1 -39 1 -51 1 -74 1 -53 1 -79 1 -94 1 -65 1 -40 1 -60 1 -38 1 -14 1 -31 1 -1 1 25 1 26 1 68 1 64 1 56 1 52 1 47 1 79 1 45 1 23 1 34 1 51 1 34 1 42 1 27 1 14 1 27 1 28 1 18 1 1 1 11 1 11 1 8 1 8 1 1 1 6 1 -2 1 7 1 12 1 10 1 -8 1 10 1 -10 1 20 1 -4 1 -9 1 10 1 -3 1 2 1 7 1 -6 1 10 1 -2 1 -13 1 14 1 -2 1 9 1 -14 1 13 1 -1 1 0 1 2 1 4 1 -6 1 2 1 -1 1 6 1 0 1 -2 1 -1 1 6 1 -4 1 1 1 -8 1 2 1 0 1 -4 1 9 1 -12 1 6 1 3 1 -5" stroke="#ffffff" vector-effect="non-scaling-stroke"/>
<path d="M0 6l1 -16 1 8 1 10 1 -2 1 -3 1 0 1 -6 1 -2 1 -1 1 3 1 8 1 -11 1 -1 1 18 1 -8 1 -1 1 2 1 -10 1 3 1 2 1 7 1 5 1 -6 1 -1 1 0 1 7 1 -3 1 -6 1 -4 1 5 1 -2 1 -1 1 0 1 -7 1 11 1 -6 1 9 1 -14 1 2 1 -1 1 5 1 1 1 6 1 -9 1 -6 1 23 1 -26 1 14 1 -7 1 7 1 -4 1 -6 1 5 1 -12 1 9 1 -4 1 6 1 -1 1 -2 1 -7 1 -8 1 8 1 6 1 -7 1 4 1 -12 1 1 1 5 1 -7 1 -10 1 1 1 4 1 -10 1 -1 1 3 1 -8 1 -13 1 14 1 -17 1 3 1 -7 1 0 1 0 1 1 1 -2 1 -5 1 0 1 10 1 -16 1 -11 1 -2 1 -2 1 5 1 -23 1 -7 1 -13 1 8 1 -15 1 -10 1 -14 1 6 1 -12 1 -1 1 -2 1 -13 1 17 1 2 1 -7 1 15 1 -7 1 10 1 14 1 7 1 2 1 11 1 6 1 7 1 -1 1 15 1 6 1 -11 1 -3 1 -16 1 -11 1 -41 1 -48 1 -76 1 -44 1 -62 1 -66 1 -95 1 -58 1 -29 1 -59 1 -18 1 -52 1 -13 1 -2 1 23 1 40 1 33 1 40 1 87 1 34 1 55 1 48 1 63 1 34 1 17 1 47 1 42 1 14 1 28 1 26 1 35 1 16 1 3 1 31 1 6 1 4 1 -2 1 10 1 4 1 8 1 6 1 -2 1 -12 1 22 1 -3 1 13 1 -9 1 10 1 2 1 6 1 3 1 0 1 3 1 3 1 -17 1 9 1 -3 1 4 1 12 1 -7 1 5 1 0 1 -4 1 -1 1 0 1 0 1 4 1 -1 1 -6 1 -5 1 7 1 8 1 -2 1 -3 1 1 1 0 1 -1 1 4 1 3 1 7 1 -15 1 2 1 7 1 -5 1 2 1 -1" stroke="#ff00ff" vector-effect="non-scaling-stroke"/>
<path d="M0 -10l1 12 1 -16 1 15 1 3 1 -5 1 -13 1 15 1 -4 1 16 1 -16 1 11 1 -7 1 -9 1 9 1 -5 1 5 1 1 1 -4 1 -4 1 5 1 1 1 5 1 4 1 -10 1 2 1 -3 1 -4 1 1 1 10 1 -7 1 0 1 3 1 12 1 -9 1 -4 1 -5 1 6 1 7 1 -16 1 8 1 2 1 -6 1 -1 1 4 1 3 1 0 1 -8 1 5 1 -4 1 14 1 -8 1 -1 1 0 1 8 1 -10 1 -12 1 7 1 4 1 0 1 3 1 -11 1 5 1 -4 1 -10 1 -1 1 1 1 12 1 -8 1 -12 1 12 1 -16 1 5 1 -8 1 6 1 2 1 -4 1 -18 1 8 1 2 1 -16 1 13 1 -10 1 -4 1 -1 1 -2 1 3 1 13 1 -18 1 -2 1 -4 1 -8 1 -8 1 -2 1 -15 1 -11 1 6 1 -3 1 -2 1 -23 1 5 1 -28 1 3 1 9 1 -10 1 11 1 3 1 -10 1 14 1 -5 1 6 1 -7 1 14 1 -3 1 12 1 18 1 9 1 8 1 -8 1 24 1 -6 1 1 1 -20 1 -18 1 1 1 -47 1 -47 1 -54 1 -36 1 -69 1 -63 1 -58 1 -69 1 -66 1 -27 1 -30 1 -20 1 -25 1 24 1 19 1 12 1 50 1 55 1 48 1 30 1 52 1 54 1 13 1 66 1 17 1 43 1 21 1 34 1 14 1 29 1 25 1 7 1 21 1 9 1 8 1 12 1 1 1 -3 1 7 1 12 1 3 1 3 1 11 1 -10 1 10 1 15 1 -13 1 11 1 -5 1 0 1 7 1 -3 1 -5 1 17 1 3 1 -9 1 2 1 -13 1 7 1 4 1 3 1 11 1 -3 1 -6 1 -2 1 3 1 -2 1 -3 1 9 1 -1 1 4 1 -11 1 19 1 -14 1 -1 1 17 1 -9 1 -10 1 11 1 -2 1 -4 1 -8 1 4 1 7 1 3 1 0" stroke="#2e8b57" vector-effect="non-scaling-stroke"/>
<path d="M0 -1l1 14 1 -9 1 -7 1 10 1 -5 1 -1 1 -5 1 12 1 -8 1 1 1 -1 1 10 1 -12 1 7 1 -4 1 4 1 -15 1 10 1 -12 1 16 1 -2 1 -10 1 11 1 -5 1 -4 1 8 1 2 1 -2 1 -7 1 3 1 -5 1 9 1 1 1 4 1 -5 1 2 1 -3 1 5 1 -2 1 -2 1 -7 1 7 1 1 1 -9 1 -2 1 9 1 0 1 9 1 -2 1 -8 1 -9 1 -3 1 6 1 7 1 -7 1 11 1 -8 1 5 1 -7 1 -9 1 -6 1 11 1 -3 1 10 1 -6 1 -14 1 1 1 1 1 0 1 -9 1 10 1 -2 1 -20 1 20 1 -10 1 2 1 -14 1 8 1 -3 1 -3 1 -8 1 10 1 2 1 -9 1 0 1 -6 1 4 1 0 1 -8 1 -5 1 -7 1 1 1 6 1 -17 1 -5 1 -5 1 -10 1 -3 1 -18 1 0 1 -15 1 15 1 7 1 -11 1 -26 1 23 1 0 1 0 1 7 1 -2 1 5 1 -8 1 10 1 12 1 4 1 6 1 12 1 -9 1 17 1 -4 1 -4 1 -13 1 -11 1 -4 1 -33 1 -43 1 -51 1 -38 1 -51 1 -61 1 -60 1 -72 1 -30 1 -36 1 -22 1 -21 1 -46 1 10 1 28 1 11 1 50 1 59 1 22 1 72 1 22 1 34 1 56 1 9 1 48 1 17 1 42 1 20 1 24 1 3 1 33 1 15 1 12 1 11 1 11 1 3 1 4 1 5 1 7 1 9 1 -1 1 14 1 -3 1 14 1 -6 1 -1 1 9 1 1 1 -11 1 4 1 -2 1 1 1 4 1 -1 1 4 1 -5 1 17 1 -7 1 -6 1 2 1 4 1 3 1 -7 1 6 1 6 1 -13 1 9 1 -2 1 11 1 6 1 -17 1 -6 1 23 1 -9 1 -5 1 2 1 1 1 0 1 5 1 -13 1 1 1 3 1 14 1 -23 1 10 1 -4" stroke="#c71585" vector-effect="non-scaling-stroke"/>
<path d="M0 -11l1 3 1 8 1 -6 1 2 1 7 1 -4 1 11 1 -1 1 -10 1 -7 1 14 1 -13 1 6 1 -9 1 12 1 -19 1 14 1 4 1 -3 1 12 1 -12 1 3 1 -4 1 4 1 14 1 0 1 -12 1 4 1 -12 1 11 1 -9 1 4 1 -10 1 8 1 0 1 7 1 -8 1 -2 1 4 1 -4 1 10 1 -5 1 -4 1 4 1 -9 1 4 1 7 1 1 1 -5 1 4 1 -2 1 4 1 -11 1 3 1 -1 1 -4 1 18 1 -14 1 1 1 -6 1 0 1 -1 1 -5 1 16 1 -5 1 -14 1 -2 1 11 1 -12 1 0 1 11 1 -6 1 -7 1 1 1 -13 1 5 1 -5 1 7 1 1 1 -7 1 -13 1 -4 1 15 1 -4 1 13 1 -23 1 14 1 -14 1 -5 1 12 1 -6 1 -14 1 -9 1 7 1 -1 1 -14 1 -11 1 9 1 -10 1 -22 1 4 1 4 1 -6 1 -5 1 -4 1 7 1 3 1 13 1 -13 1 3 1 5 1 5 1 3 1 0 1 14 1 10 1 -12 1 12 1 4 1 0 1 -2 1 -9 1 0 1 -24 1 -19 1 -56 1 -22 1 -45 1 -49 1 -65 1 -50 1 -53 1 -29 1 -50 1 -19 1 -35 1 -11 1 14 1 -1 1 27 1 32 1 50 1 56 1 19 1 43 1 39 1 61 1 10 1 20 1 34 1 22 1 21 1 22 1 24 1 9 1 18 1 13 1 17 1 3 1 -5 1 12 1 14 1 -5 1 3 1 1 1 4 1 2 1 9 1 8 1 -4 1 -10 1 18 1 -12 1 15 1 0 1 -7 1 6 1 -3 1 6 1 -7 1 -3 1 14 1 -11 1 2 1 -2 1 17 1 -18 1 12 1 -5 1 2 1 4 1 -1 1 0 1 -4 1 -3 1 7 1 -6 1 4 1 -5 1 15 1 -9 1 1 1 -2 1 -1 1 -3 1 3 1 -2 1 4 1 -1 1 2" stroke="#808000" vector-effect="non-scaling-stroke"/>
<path d="M0 -6l1 2 1 -3 1 10 1 -2 1 -15 1 8 1 14 1 -12 1 2 1 4 1 0 1 3 1 -2 1 2 1 2 1 -5 1 3 1 -9 1 -2 1 7 1 1 1 -5 1 4 1 -12 1 26 1 -2 1 -7 1 -9 1 -1 1 7 1 -3 1 2 1 -5 1 -8 1 24 1 -26 1 7 1 8 1 -5 1 3 1 -3 1 0 1 -2 1 11 1 -10 1 7 1 -2 1 -6 1 7 1 -4 1 -1 1 2 1 7 1 -10 1 1 1 -12 1 19 1 -13 1 8 1 -1 1 -12 1 10 1 -7 1 3 1 5 1 -4 1 0 1 -2 1 -14 1 7 1 12 1 -23 1 7 1 -4 1 -6 1 12 1 -9 1 1 1 -2 1 -2 1 -4 1 -7 1 1 1 3 1 -7 1 21 1 -15 1 -3 1 -2 1 -10 1 5 1 -11 1 5 1 -10 1 0 1 -2 1 -10 1 -6 1 3 1 -20 1 5 1 -4 1 17 1 -18 1 12 1 -17 1 12 1 -1 1 0 1 9 1 -6 1 11 1 -3 1 -2 1 2 1 3 1 11 1 9 1 -5 1 -3 1 9 1 -20 1 2 1 9 1 -50 1 -47 1 -28 1 -41 1 -38 1 -32 1 -44 1 -65 1 -40 1 -20 1 -29 1 -44 1 -24 1 42 1 4 1 11 1 38 1 57 1 -11 1 55 1 37 1 53 1 16 1 37 1 13 1 27 1 28 1 19 1 23 1 11 1 33 1 -4 1 14 1 -11 1 22 1 21 1 -17 1 17 1 7 1 -3 1 -4 1 -1 1 16 1 -2 1 2 1 7 1 1 1 -1 1 1 1 -5 1 19 1 -14 1 2 1 -6 1 11 1 1 1 -2 1 4 1 1 1 1 1 0 1 2 1 -2 1 1 1 0 1 4 1 -13 1 5 1 2 1 7 1 -10 1 6 1 0 1 -1 1 2 1 -6 1 10 1 -1 1 -5 1 2 1 -5 1 -3 1 -3 1 2 1 7 1 -1" stroke="#90ee90" vector-effect="non-scaling-stroke"/>
<path d="M0 2l1 -9 1 8 1 4 1 1 1 -10 1 9 1 10 1 -19 1 2 1 -2 1 -2 1 3 1 1 1 2 1 4 1 8 1 -1 1 -13 1 -3 1 5 1 4 1 -8 1 4 1 0 1 2 1 5 1 -1 1 -8 1 -7 1 -1 1 11 1 -4 1 3 1 -1 1 -2 1 -2 1 11 1 -16 1 10 1 5 1 -18 1 18 1 -5 1 4 1 -11 1 22 1 -17 1 11 1 -18 1 -4 1 7 1 10 1 -11 1 -7 1 11 1 4 1 -11 1 15 1 -6 1 -2 1 -1 1 -6 1 6 1 4 1 2 1 -8 1 -5 1 -3 1 1 1 10 1 -12 1 6 1 -13 1 8 1 -2 1 0 1 -11 1 4 1 -19 1 7 1 13 1 -8 1 -7 1 1 1 1 1 1 1 10 1 -1 1 -16 1 6 1 -7 1 -7 1 12 1 -4 1 -18 1 3 1 -5 1 -15 1 3 1 -8 1 -4 1 11 1 -23 1 7 1 6 1 -10 1 14 1 0 1 5 1 -5 1 6 1 -4 1 9 1 -2 1 3 1 3 1 1 1 5 1 9 1 11 1 -20 1 5 1 -17 1 -4 1 -29 1 -32 1 -36 1 -23 1 -49 1 -50 1 -45 1 -52 1 -19 1 -26 1 -44 1 -13 1 -14 1 2 1 27 1 12 1 28 1 39 1 20 1 41 1 28 1 44 1 25 1 23 1 20 1 23 1 27 1 16 1 5 1 29 1 19 1 3 1 5 1 14 1 1 1 25 1 -10 1 7 1 -10 1 15 1 -6 1 15 1 2 1 3 1 6 1 -2 1 -8 1 16 1 -8 1 -4 1 6 1 -1 1 1 1 0 1 14 1 -19 1 7 1 6 1 -1 1 0 1 -5 1 11 1 1 1 0 1 -12 1 10 1 -5 1 8 1 -6 1 3 1 2 1 -10 1 6 1 7 1 -19 1 20 1 1 1 2 1 -19 1 8 1 -1 1 -5 1 5 1 -4 1 -5 1 7" stroke="#cd853f" vector-effect="non-scaling-stroke"/>
<path d="M0 -5l1 4 1 0 1 -7 1 4 1 2 1 12 1 -5 1 -1 1 -4 1 -2 1 1 1 2 1 -3 1 0 1 -3 1 15 1 -16 1 -5 1 4 1 9 1 3 1 -5 1 -8 1 6 1 13 1 7 1 -19 1 -13 1 23 1 -6 1 -3 1 -2 1 -3 1 14 1 -10 1 5 1 -9 1 3 1 -4 1 13 1 -1 1 -2 1 -1 1 1 1 3 1 -4 1 6 1 -15 1 9 1 4 1 -8 1 10 1 -12 1 4 1 -12 1 7 1 7 1 -9 1 4 1 -4 1 21 1 -15 1 -1 1 -11 1 13 1 -8 1 2 1 6 1 -5 1 -8 1 4 1 -2 1 -1 1 -3 1 -2 1 0 1 7 1 -9 1 -4 1 -11 1 14 1 -16 1 12 1 -13 1 21 1 -11 1 11 1 -6 1 -8 1 -8 1 6 1 -9 1 3 1 -18 1 10 1 -19 1 -3 1 12 1 -14 1 1 1 -15 1 6 1 -10 1 11 1 1 1 4 1 -5 1 -1 1 4 1 0 1 -1 1 7 1 6 1 6 1 0 1 2 1 -8 1 4 1 13 1 -5 1 4 1 -16 1 10 1 -22 1 -20 1 -30 1 -27 1 -25 1 -43 1 -39 1 -49 1 -44 1 -34 1 -17 1 -8 1 -42 1 3 1 4 1 1 1 25 1 27 1 19 1 45 1 31 1 31 1 -4 1 53 1 18 1 21 1 14 1 33 1 20 1 10 1 16 1 17 1 16 1 -5 1 8 1 -5 1 16 1 4 1 -6 1 21 1 -12 1 13 1 4 1 -7 1 3 1 9 1 -6 1 -7 1 6 1 5 1 5 1 -1 1 -3 1 4 1 -3 1 -2 1 14 1 -9 1 -1 1 5 1 2 1 -12 1 9 1 1 1 2 1 -1 1 0 1 0 1 8 1 1 1 -5 1 -1 1 2 1 -7 1 5 1 -4 1 3 1 14 1 -16 1 -6 1 7 1 1 1 6 1 -8 1 7 1 3 1 -11" stroke="#ff0000" vector-effect="non-scaling-stroke"/>
<path d="M0 -5l1 7 1 -1 1 3 1 -13 1 7 1 4 1 0 1 -3 1 -5 1 9 1 2 1 -7 1 3 1 7 1 -7 1 1 1 0 1 -3 1 0 1 -8 1 6 1 -2 1 8 1 -3 1 4 1 0 1 -9 1 -7 1 8 1 2 1 -1 1 -1 1 5 1 -1 1 -3 1 -6 1 9 1 10 1 -14 1 3 1 6 1 0 1 13 1 -14 1 -3 1 -4 1 3 1 6 1 -4 1 -2 1 -3 1 1 1 -3 1 16 1 -13 1 0 1 7 1 -7 1 4 1 3 1 1 1 -11 1 -1 1 -4 1 2 1 1 1 8 1 -5 1 -1 1 -14 1 16 1 2 1 -3 1 -13 1 8 1 -9 1 6 1 -11 1 13 1 -8 1 -7 1 4 1 4 1 -15 1 16 1 -3 1 -13 1 -4 1 8 1 6 1 -2 1 -5 1 -8 1 -11 1 -1 1 -3 1 6 1 -12 1 -5 1 -6 1 4 1 1 1 -10 1 -4 1 11 1 -3 1 -4 1 -2 1 0 1 12 1 -6 1 17 1 9 1 -9 1 -1 1 14 1 -8 1 1 1 4 1 1 1 -10 1 3 1 -3 1 -12 1 -27 1 -16 1 -38 1 -24 1 -24 1 -39 1 -33 1 -52 1 -22 1 -36 1 17 1 -34 1 -21 1 -2 1 16 1 18 1 19 1 35 1 23 1 21 1 25 1 44 1 20 1 11 1 23 1 24 1 10 1 20 1 10 1 9 1 20 1 4 1 11 1 4 1 1 1 20 1 5 1 0 1 -9 1 7 1 7 1 5 1 6 1 -10 1 3 1 -1 1 -2 1 5 1 -5 1 11 1 -10 1 7 1 5 1 -3 1 -11 1 20 1 -3 1 -1 1 -3 1 1 1 -10 1 12 1 -5 1 7 1 4 1 -6 1 1 1 -4 1 -3 1 10 1 -8 1 12 1 -15 1 18 1 -5 1 -3 1 3 1 4 1 -11 1 9 1 -11 1 13 1 -14 1 1 1 1 1 -3" stroke="#fa8072" vector-effect="non-scaling-stroke"/>
<path d="M0 1l1 -1 1 -6 1 12 1 -4 1 -1 1 0 1 1 1 12 1 -14 1 -1 1 -6 1 3 1 7 1 -1 1 3 1 -3 1 2 1 -10 1 4 1 -1 1 5 1 -1 1 -4 1 8 1 -8 1 -2 1 8 1 -3 1 5 1 -14 1 7 1 -4 1 7 1 4 1 -4 1 -9 1 -1 1 5 1 4 1 -2 1 -4 1 12 1 -11 1 9 1 -6 1 -2 1 2 1 1 1 -6 1 9 1 0 1 3 1 -6 1 -4 1 5 1 10 1 -13 1 -1 1 8 1 -4 1 -2 1 4 1 -6 1 1 1 6 1 9 1 -11 1 -13 1 0 1 8 1 4 1 -15 1 3 1 -4 1 -5 1 7 1 1 1 3 1 -7 1 5 1 -12 1 6 1 -11 1 11 1 -5 1 6 1 -10 1 9 1 -14 1 3 1 12 1 -5 1 -12 1 -1 1 -15 1 14 1 -7 1 -4 1 -6 1 -14 1 10 1 7 1 -19 1 6 1 11 1 -4 1 -2 1 -2 1 -3 1 8 1 3 1 4 1 -3 1 1 1 1 1 18 1 -8 1 -5 1 -5 1 7 1 15 1 -6 1 -20 1 -2 1 -21 1 -35 1 -5 1 -40 1 -21 1 -28 1 -24 1 -43 1 -46 1 -8 1 -25 1 -20 1 -7 1 -2 1 11 1 19 1 27 1 28 1 18 1 27 1 14 1 34 1 27 1 24 1 0 1 6 1 34 1 29 1 -9 1 21 1 3 1 13 1 4 1 8 1 6 1 -3 1 12 1 -6 1 13 1 -2 1 8 1 -7 1 10 1 2 1 -8 1 4 1 4 1 6 1 -4 1 -2 1 -1 1 9 1 -7 1 14 1 -10 1 5 1 -8 1 7 1 -15 1 12 1 -1 1 15 1 -5 1 -13 1 9 1 -9 1 10 1 -7 1 8 1 -6 1 -1 1 -1 1 10 1 3 1 -10 1 2 1 -2 1 10 1 -11 1 5 1 4 1 -3 1 -8 1 4 1 0 1 0" stroke="#a9a9a9" vector-effect="non-scaling-stroke"/>
<path d="M0 2l1 -9 1 7 1 8 1 0 1 -5 1 -1 1 -6 1 19 1 -19 1 -3 1 10 1 -10 1 11 1 -3 1 2 1 -12 1 3 1 0 1 12 1 -7 1 7 1 -7 1 -2 1 -5 1 9 1 -2 1 2 1 5 1 -15 1 7 1 -6 1 3 1 12 1 -4 1 -7 1 -1 1 1 1 4 1 -5 1 11 1 -5 1 5 1 -12 1 4 1 -2 1 5 1 13 1 -10 1 -5 1 1 1 -5 1 -2 1 10 1 -8 1 15 1 -14 1 16 1 -15 1 15 1 -16 1 -6 1 10 1 -6 1 -2 1 21 1 -5 1 -11 1 6 1 -5 1 -18 1 4 1 6 1 7 1 -8 1 1 1 1 1 -11 1 19 1 -22 1 10 1 -10 1 7 1 2 1 0 1 -6 1 -1 1 -16 1 7 1 9 1 5 1 -9 1 -5 1 11 1 -13 1 -10 1 8 1 5 1 -18 1 -9 1 7 1 -4 1 -7 1 3 1 7 1 -3 1 -1 1 0 1 -6 1 14 1 -8 1 5 1 14 1 -16 1 6 1 11 1 5 1 -16 1 -3 1 12 1 4 1 -9 1 4 1 -5 1 -13 1 -6 1 -35 1 -17 1 -30 1 -3 1 -53 1 -21 1 -40 1 -10 1 -16 1 -37 1 -14 1 -13 1 5 1 7 1 32 1 12 1 23 1 5 1 27 1 38 1 26 1 5 1 17 1 10 1 34 1 -3 1 23 1 3 1 17 1 14 1 12 1 -8 1 33 1 -23 1 7 1 12 1 -7 1 8 1 10 1 -4 1 -3 1 4 1 6 1 -7 1 1 1 -2 1 7 1 -7 1 14 1 -1 1 6 1 -7 1 -1 1 1 1 8 1 -13 1 16 1 -4 1 13 1 -24 1 2 1 6 1 -3 1 9 1 -1 1 0 1 -7 1 4 1 -3 1 8 1 2 1 -10 1 1 1 -1 1 7 1 -5 1 10 1 -3 1 -8 1 7 1 1 1 -2 1 -15 1 12 1 -5" stroke="#ffffff" vector-effect="non-scaling-stroke"/>
<path d="M0 1l1 -15 1 15 1 -7 1 0 1 3 1 3 1 9 1 -13 1 -9 1 10 1 -9 1 7 1 -1 1 8 1 -2 1 -3 1 -4 1 13 1 2 1 -8 1 0 1 -3 1 -7 1 13 1 -14 1 7 1 4 1 10 1 -19 1 -2 1 8 1 0 1 5 1 9 1 -7 1 4 1 0 1 -3 1 -2 1 -6 1 -5 1 9 1 -6 1 7 1 0 1 -4 1 6 1 -6 1 5 1 2 1 -1 1 -13 1 7 1 4 1 -3 1 5 1 -2 1 0 1 7 1 -9 1 -3 1 1 1 2 1 -8 1 11 1 -11 1 0 1 4 1 -8 1 13 1 -6 1 1 1 3 1 -3 1 -5 1 -1 1 -2 1 6 1 -5 1 -1 1 3 1 -5 1 12 1 -6 1 -4 1 -2 1 -6 1 6 1 -14 1 17 1 -21 1 14 1 -1 1 -4 1 -3 1 -4 1 -2 1 -8 1 -6 1 8 1 -15 1 5 1 0 1 -5 1 5 1 -9 1 17 1 -14 1 11 1 -7 1 9 1 -12 1 9 1 0 1 13 1 4 1 -10 1 -5 1 10 1 11 1 -22 1 10 1 -12 1 6 1 -18 1 -25 1 0 1 -31 1 -28 1 -27 1 -19 1 -51 1 -10 1 -17 1 -3 1 -32 1 -18 1 4 1 8 1 17 1 22 1 18 1 18 1 26 1 19 1 15 1 23 1 12 1 15 1 21 1 -1 1 18 1 19 1 9 1 7 1 9 1 7 1 -3 1 7 1 7 1 -11 1 13 1 -2 1 12 1 1 1 1 1 -10 1 3 1 6 1 2 1 -3 1 7 1 -2 1 -6 1 11 1 -8 1 4 1 -1 1 2 1 -5 1 0 1 2 1 13 1 -10 1 -6 1 13 1 3 1 -7 1 -6 1 12 1 -9 1 4 1 -1 1 -2 1 3 1 3 1 -4 1 -7 1 5 1 0 1 9 1 -3 1 5 1 -13 1 -1 1 3 1 -2 1 6 1 0 1 -9" stroke="#20b2aa" vector-effect="non-scaling-stroke"/>
<path d="M0 3l1 -8 1 -4 1 16 1 -1 1 -15 1 4 1 -3 1 -1 1 11 1 -13 1 4 1 2 1 4 1 3 1 3 1 4 1 -4 1 0 1 -6 1 5 1 6 1 -11 1 13 1 -10 1 -5 1 12 1 -2 1 -6 1 -8 1 8 1 2 1 -4 1 11 1 -1 1 -12 1 -1 1 1 1 3 1 -2 1 12 1 -3 1 -4 1 -8 1 4 1 1 1 7 1 -7 1 -2 1 -1 1 4 1 -12 1 18 1 -12 1 13 1 -1 1 -11 1 6 1 2 1 -4 1 -15 1 18 1 -2 1 -9 1 10 1 -17 1 21 1 -6 1 -7 1 6 1 1 1 5 1 -8 1 -6 1 6 1 3 1 -14 1 2 1 0 1 4 1 2 1 -12 1 6 1 2 1 -2 1 -3 1 -3 1 4 1 1 1 4 1 -7 1 -1 1 -5 1 0 1 1 1 -5 1 -6 1 2 1 -2 1 -3 1 -3 1 -5 1 -3 1 5 1 -1 1 -4 1 -2 1 -3 1 17 1 -13 1 9 1 -5 1 -1 1 -4 1 16 1 -7 1 22 1 -15 1 15 1 -7 1 4 1 -1 1 -11 1 3 1 -4 1 -17 1 -19 1 -24 1 -12 1 -18 1 -19 1 -42 1 -26 1 -21 1 -5 1 -30 1 -12 1 -24 1 26 1 -5 1 5 1 33 1 18 1 23 1 16 1 10 1 21 1 26 1 -10 1 34 1 1 1 21 1 7 1 9 1 7 1 8 1 3 1 19 1 7 1 5 1 5 1 -11 1 15 1 1 1 -9 1 5 1 0 1 17 1 -7 1 2 1 -8 1 1 1 -1 1 -4 1 -12 1 23 1 -7 1 -1 1 6 1 6 1 -10 1 0 1 2 1 8 1 8 1 -6 1 -13 1 0 1 13 1 -7 1 -6 1 0 1 13 1 -4 1 0 1 6 1 -16 1 20 1 -12 1 -3 1 4 1 -2 1 17 1 -14 1 -1 1 0 1 8 1 -6 1 3 1 -13 1 12" stroke="#ee82ee" vector-effect="non-scaling-stroke"/>
<path d="M0 1l1 0 1 0 1 -11 1 2 1 6 1 4 1 1 1 8 1 -11 1 -2 1 3 1 4 1 -12 1 3 1 3 1 -8 1 8 1 -9 1 11 1 -2 1 4 1 -8 1 8 1 -5 1 1 1 5 1 -17 1 7 1 7 1 -6 1 3 1 4 1 -12 1 5 1 1 1 1 1 -1 1 0 1 2 1 1 1 0 1 9 1 -7 1 -8 1 -2 1 8 1 5 1 -10 1 10 1 2 1 2 1 3 1 -22 1 11 1 16 1 -12 1 5 1 -14 1 8 1 1 1 -8 1 -6 1 14 1 -4 1 5 1 -11 1 3 1 1 1 5 1 -14 1 10 1 -8 1 -1 1 13 1 -6 1 -4 1 7 1 -6 1 -4 1 11 1 -9 1 -4 1 4 1 1 1 4 1 -9 1 -2 1 2 1 -10 1 7 1 1 1 -14 1 4 1 -4 1 -3 1 9 1 1 1 -18 1 18 1 -11 1 -14 1 12 1 -9 1 9 1 -19 1 15 1 -5 1 13 1 -12 1 1 1 8 1 -6 1 7 1 -2 1 7 1 1 1 5 1 -9 1 6 1 4 1 -16 1 6 1 -2 1 0 1 -24 1 -10 1 -10 1 -21 1 -25 1 -19 1 -31 1 -25 1 -25 1 7 1 -19 1 -13 1 -10 1 2 1 8 1 0 1 33 1 8 1 14 1 13 1 23 1 14 1 18 1 9 1 16 1 6 1 9 1 5 1 23 1 0 1 11 1 7 1 9 1 0 1 0 1 6 1 5 1 -7 1 8 1 4 1 0 1 3 1 4 1 -6 1 5 1 7 1 -13 1 9 1 7 1 -7 1 4 1 -5 1 8 1 -4 1 7 1 -1 1 -8 1 4 1 -11 1 13 1 -5 1 8 1 -15 1 8 1 9 1 -10 1 4 1 -14 1 6 1 11 1 -9 1 2 1 5 1 0 1 0 1 4 1 -7 1 4 1 -2 1 1 1 2 1 -15 1 9 1 -2 1 -12 1 15" stroke="#ffff00" vector-effect="non-scaling-stroke"/>
<path d="M0 4l1 6 1 -2 1 -12 1 12 1 4 1 -12 1 0 1 -10 1 18 1 -14 1 19 1 -20 1 5 1 7 1 -12 1 6 1 -2 1 3 1 -6 1 2 1 9 1 0 1 0 1 -9 1 1 1 1 1 3 1 2 1 -5 1 -3 1 1 1 -5 1 -1 1 12 1 -16 1 5 1 7 1 0 1 -1 1 6 1 1 1 -4 1 2 1 14 1 -20 1 15 1 -13 1 4 1 1 1 -7 1 9 1 0 1 -7 1 1 1 5 1 0 1 0 1 -6 1 -1 1 -2 1 5 1 5 1 -10 1 -11 1 6 1 15 1 -10 1 4 1 0 1 1 1 3 1 3 1 -11 1 8 1 -4 1 -1 1 -3 1 2 1 -3 1 1 1 -5 1 -1 1 -6 1 4 1 6 1 -6 1 -3 1 8 1 -1 1 8 1 -22 1 6 1 -8 1 15 1 3 1 -17 1 5 1 -8 1 2 1 -12 1 6 1 -2 1 -4 1 5 1 -1 1 -10 1 9 1 -2 1 -1 1 3 1 -2 1 -7 1 6 1 16 1 6 1 -6 1 9 1 3 1 -8 1 1 1 -9 1 -5 1 -13 1 14 1 -13 1 -19 1 -20 1 -7 1 -13 1 -8 1 -46 1 -15 1 -28 1 -15 1 -14 1 -3 1 -13 1 21 1 -9 1 15 1 6 1 27 1 13 1 19 1 -3 1 26 1 22 1 6 1 17 1 -5 1 11 1 16 1 6 1 18 1 -11 1 16 1 -9 1 18 1 -3 1 0 1 3 1 7 1 -5 1 6 1 4 1 7 1 -13 1 8 1 -1 1 4 1 -2 1 5 1 -16 1 4 1 7 1 3 1 -2 1 9 1 -8 1 4 1 2 1 2 1 0 1 -6 1 3 1 4 1 -6 1 1 1 2 1 -9 1 10 1 6 1 -8 1 7 1 -10 1 1 1 6 1 -5 1 6 1 0 1 7 1 2 1 -10 1 -12 1 17 1 -7 1 3 1 -7 1 8 1 -4" stroke="#00ffff" vector-effect="non-scaling-stroke"/>
<path d="M0 -2l1 5 1 -2 1 0 1 -4 1 0 1 -1 1 2 1 8 1 -4 1 -5 1 3 1 -5 1 12 1 -2 1 0 1 -7 1 6 1 1 1 -7 1 4 1 4 1 -8 1 3 1 -4 1 0 1 6 1 -1 1 -1 1 -5 1 4 1 -6 1 9 1 -3 1 -7 1 15 1 -1 1 -11 1 0 1 -1 1 0 1 -1 1 9 1 -3 1 -3 1 10 1 0 1 -4 1 -8 1 1 1 11 1 -4 1 0 1 -3 1 -1 1 1 1 5 1 -11 1 0 1 12 1 -5 1 -7 1 4 1 -1 1 5 1 -10 1 13 1 -11 1 -4 1 13 1 -12 1 3 1 8 1 -5 1 -7 1 10 1 -1 1 13 1 -8 1 -7 1 -2 1 -5 1 -2 1 -6 1 6 1 -12 1 11 1 -4 1 12 1 -8 1 -4 1 -1 1 7 1 -4 1 5 1 -10 1 6 1 -13 1 2 1 -5 1 -2 1 0 1 -3 1 4 1 9 1 -17 1 12 1 -10 1 3 1 1 1 2 1 0 1 1 1 2 1 2 1 -1 1 0 1 6 1 -3 1 10 1 -1 1 3 1 -11 1 -6 1 -5 1 0 1 -25 1 -2 1 -18 1 -15 1 -32 1 -10 1 -34 1 -7 1 -3 1 -17 1 -19 1 7 1 1 1 1 1 10 1 14 1 1 1 25 1 17 1 13 1 19 1 0 1 19 1 -16 1 29 1 16 1 13 1 1 1 2 1 12 1 -1 1 3 1 3 1 3 1 5 1 6 1 5 1 4 1 -5 1 -5 1 5 1 6 1 -10 1 12 1 1 1 0 1 -1 1 -3 1 7 1 2 1 -10 1 1 1 -1 1 -1 1 4 1 -9 1 11 1 -1 1 -7 1 5 1 3 1 -1 1 6 1 -9 1 4 1 -3 1 -4 1 3 1 3 1 -1 1 2 1 -8 1 19 1 -7 1 2 1 -7 1 3 1 -1 1 -10 1 8 1 -3 1 7 1 1 1 2 1 -14" stroke="#808000" vector-effect="non-scaling-stroke"/>
<path d="M0 6l1 -3 1 -15 1 10 1 2 1 1 1 5 1 -8 1 -4 1 11 1 -2 1 -12 1 11 1 -6 1 -8 1 17 1 -5 1 5 1 7 1 -19 1 4 1 4 1 -4 1 6 1 5 1 -5 1 1 1 1 1 -11 1 11 1 1 1 -7 1 -1 1 -7 1 8 1 8 1 -2 1 -10 1 9 1 -7 1 -7 1 18 1 0 1 -7 1 -1 1 -5 1 14 1 -12 1 4 1 8 1 -8 1 -4 1 -7 1 13 1 -7 1 11 1 -13 1 6 1 -9 1 16 1 -1 1 3 1 -19 1 12 1 8 1 -6 1 -9 1 1 1 1 1 10 1 -7 1 10 1 -3 1 -12 1 -2 1 6 1 8 1 -5 1 -4 1 -11 1 11 1 5 1 -2 1 -2 1 -3 1 -1 1 -13 1 14 1 8 1 -19 1 9 1 -1 1 -2 1 -6 1 0 1 -3 1 3 1 -4 1 5 1 -3 1 -5 1 -2 1 7 1 -4 1 -14 1 0 1 -3 1 3 1 2 1 -4 1 6 1 6 1 1 1 -3 1 1 1 4 1 2 1 -1 1 5 1 -16 1 11 1 12 1 -18 1 7 1 -6 1 -12 1 -16 1 -7 1 -15 1 -12 1 -32 1 -3 1 -14 1 -10 1 -19 1 -8 1 -16 1 -10 1 15 1 -5 1 13 1 13 1 15 1 8 1 16 1 11 1 10 1 18 1 -7 1 13 1 16 1 5 1 15 1 -1 1 16 1 -3 1 4 1 6 1 -4 1 11 1 -3 1 0 1 2 1 4 1 -8 1 6 1 2 1 8 1 -3 1 4 1 -14 1 10 1 7 1 -9 1 -1 1 10 1 -4 1 -12 1 13 1 -1 1 -15 1 17 1 7 1 -1 1 -6 1 -3 1 9 1 6 1 -14 1 4 1 2 1 2 1 -10 1 7 1 6 1 -1 1 -3 1 6 1 -5 1 -9 1 2 1 -1 1 0 1 4 1 -1 1 11 1 -14 1 1 1 2 1 0 1 7" stroke="#00ffff" vector-effect="non-scaling-stroke"/>
<path d="M0 3l1 6 1 -6 1 -2 1 3 1 -10 1 11 1 -7 1 1 1 2 1 -4 1 1 1 4 1 -9 1 8 1 -4 1 9 1 -1 1 -6 1 -12 1 20 1 0 1 -3 1 -2 1 -2 1 -6 1 7 1 -4 1 3 1 3 1 0 1 -6 1 2 1 -6 1 6 1 2 1 5 1 -2 1 -6 1 0 1 -7 1 12 1 -7 1 4 1 11 1 -5 1 -8 1 4 1 2 1 -10 1 7 1 -3 1 -2 1 6 1 -6 1 9 1 2 1 -13 1 -1 1 3 1 8 1 -2 1 3 1 0 1 -6 1 3 1 -9 1 15 1 -6 1 4 1 0 1 -17 1 1 1 6 1 0 1 -1 1 3 1 17 1 -6 1 -16 1 17 1 -22 1 2 1 3 1 -1 1 -2 1 7 1 -14 1 11 1 3 1 -16 1 9 1 -2 1 -6 1 -7 1 11 1 -2 1 7 1 -9 1 -12 1 12 1 0 1 4 1 -3 1 -1 1 -8 1 -1 1 13 1 -14 1 -4 1 2 1 10 1 -8 1 8 1 5 1 3 1 1 1 -7 1 -4 1 15 1 2 1 -20 1 10 1 -20 1 8 1 1 1 -24 1 -12 1 5 1 -22 1 -26 1 2 1 -30 1 -11 1 -21 1 -6 1 1 1 0 1 -4 1 0 1 8 1 15 1 15 1 -3 1 23 1 13 1 5 1 11 1 10 1 0 1 22 1 1 1 3 1 14 1 1 1 2 1 6 1 6 1 9 1 1 1 -4 1 4 1 1 1 3 1 8 1 -12 1 10 1 -14 1 -6 1 12 1 2 1 7 1 2 1 -2 1 -8 1 6 1 10 1 -14 1 8 1 -8 1 5 1 5 1 -2 1 -6 1 7 1 -10 1 12 1 -13 1 16 1 -2 1 -9 1 -5 1 10 1 -6 1 10 1 1 1 -6 1 -11 1 13 1 8 1 5 1 -13 1 -4 1 5 1 -3 1 5 1 -11 1 4 1 10 1 -4 1 -11" stroke="#0000ff" vector-effect="non-scaling-stroke"/>
<path d="M0 0l1 13 1 -11 1 1 1 13 1 -18 1 -6 1 11 1 2 1 -3 1 1 1 -2 1 -4 1 12 1 -7 1 -12 1 11 1 -1 1 -1 1 6 1 3 1 -20 1 12 1 6 1 -10 1 7 1 3 1 -3 1 5 1 -2 1 -11 1 5 1 2 1 -9 1 4 1 6 1 6 1 -5 1 -11 1 13 1 -18 1 14 1 6 1 -5 1 -11 1 12 1 -6 1 -2 1 8 1 -9 1 -2 1 3 1 15 1 -12 1 -3 1 -1 1 -5 1 9 1 1 1 12 1 -5 1 -13 1 13 1 -5 1 8 1 -8 1 5 1 -9 1 3 1 -3 1 11 1 -8 1 -6 1 23 1 -15 1 -3 1 -6 1 1 1 0 1 1 1 -3 1 5 1 -1 1 6 1 -6 1 0 1 -11 1 15 1 -8 1 3 1 -3 1 -7 1 6 1 4 1 -7 1 -6 1 2 1 -3 1 10 1 -15 1 6 1 4 1 -10 1 10 1 -11 1 -8 1 13 1 2 1 -12 1 3 1 -1 1 17 1 -6 1 -15 1 16 1 -1 1 -2 1 -1 1 3 1 15 1 -17 1 8 1 -14 1 -3 1 11 1 -16 1 -18 1 -11 1 -6 1 -4 1 -20 1 -6 1 -32 1 -3 1 -16 1 17 1 -23 1 -7 1 2 1 9 1 -6 1 21 1 -8 1 26 1 11 1 12 1 2 1 11 1 16 1 20 1 -8 1 10 1 2 1 10 1 -3 1 14 1 -4 1 6 1 -5 1 8 1 -3 1 7 1 1 1 4 1 5 1 -8 1 2 1 -8 1 7 1 -8 1 0 1 10 1 8 1 -4 1 -7 1 7 1 -7 1 9 1 -2 1 -5 1 2 1 2 1 0 1 -1 1 4 1 -7 1 10 1 -21 1 16 1 6 1 5 1 -4 1 -7 1 5 1 -9 1 8 1 4 1 -4 1 2 1 -2 1 6 1 -6 1 10 1 -12 1 2 1 0 1 3 1 -4 1 -2 1 11 1 -16" stroke="#5f9ea0" vector-effect="non-scaling-stroke"/>
<path d="M0 1l1 -4 1 -6 1 16 1 -1 1 0 1 -6 1 6 1 -1 1 -15 1 11 1 -3 1 -4 1 -2 1 16 1 -10 1 -2 1 -2 1 10 1 -2 1 -3 1 1 1 2 1 1 1 -2 1 1 1 -3 1 5 1 2 1 -3 1 -2 1 -7 1 8 1 10 1 -25 1 6 1 4 1 0 1 3 1 -10 1 17 1 -11 1 0 1 -10 1 14 1 -9 1 6 1 9 1 0 1 -13 1 14 1 -5 1 -12 1 15 1 -8 1 -8 1 2 1 4 1 9 1 -15 1 8 1 2 1 7 1 6 1 -15 1 5 1 7 1 -15 1 4 1 5 1 -1 1 -6 1 0 1 8 1 -10 1 6 1 4 1 -5 1 -1 1 -7 1 2 1 17 1 -7 1 -11 1 2 1 7 1 -3 1 -12 1 22 1 -21 1 0 1 9 1 -2 1 -5 1 1 1 -3 1 -6 1 10 1 -5 1 -5 1 4 1 -3 1 -10 1 20 1 -14 1 4 1 4 1 -6 1 -3 1 -3 1 10 1 -8 1 -4 1 8 1 -3 1 3 1 -1 1 10 1 -12 1 5 1 -7 1 5 1 8 1 -14 1 -3 1 -6 1 -1 1 -9 1 -20 1 2 1 -24 1 -9 1 -9 1 -12 1 -7 1 -16 1 -1 1 -10 1 4 1 -2 1 2 1 27 1 -3 1 18 1 6 1 9 1 -2 1 10 1 18 1 7 1 -3 1 12 1 -2 1 20 1 -7 1 15 1 18 1 -19 1 12 1 -8 1 7 1 -7 1 16 1 2 1 -16 1 3 1 7 1 10 1 -14 1 -8 1 17 1 0 1 3 1 -7 1 4 1 8 1 -4 1 -10 1 12 1 -7 1 -5 1 2 1 15 1 -13 1 9 1 6 1 -13 1 11 1 -8 1 -9 1 4 1 4 1 -6 1 6 1 -4 1 -2 1 12 1 -15 1 11 1 -1 1 -1 1 3 1 0 1 -5 1 6 1 -6 1 -2 1 8 1 -2 1 -5 1 3" stroke="#6495ed" vector-effect="non-scaling-stroke"/>
<path d="M0 -4l1 4 1 2 1 -1 1 -3 1 -5 1 17 1 -7 1 -1 1 3 1 -2 1 -10 1 1 1 10 1 4 1 -10 1 -1 1 10 1 -8 1 -1 1 -2 1 7 1 -6 1 4 1 -6 1 4 1 -2 1 3 1 2 1 -3 1 -4 1 7 1 -4 1 -12 1 18 1 4 1 -3 1 -3 1 -2 1 13 1 -2 1 -15 1 12 1 -12 1 -3 1 24 1 -20 1 3 1 2 1 -4 1 2 1 -3 1 -7 1 8 1 9 1 -15 1 2 1 -2 1 6 1 -3 1 -6 1 11 1 3 1 -11 1 10 1 -9 1 10 1 -1 1 -4 1 0 1 6 1 -14 1 12 1 -7 1 9 1 -2 1 0 1 -4 1 -1 1 0 1 0 1 -5 1 0 1 7 1 -3 1 -2 1 -2 1 1 1 4 1 0 1 -3 1 -3 1 8 1 -1 1 -4 1 -4 1 3 1 -2 1 1 1 -9 1 13 1 -12 1 3 1 -5 1 -1 1 18 1 -24 1 2 1 -5 1 5 1 -1 1 3 1 -6 1 17 1 -6 1 5 1 -9 1 3 1 -7 1 10 1 2 1 -1 1 2 1 5 1 -13 1 -5 1 -8 1 -4 1 -17 1 -3 1 -20 1 -10 1 -13 1 -1 1 -19 1 -12 1 -2 1 -2 1 -6 1 2 1 13 1 -12 1 20 1 7 1 16 1 9 1 17 1 4 1 4 1 3 1 14 1 8 1 -6 1 10 1 -1 1 9 1 8 1 -1 1 16 1 -18 1 4 1 -2 1 9 1 -12 1 5 1 18 1 1 1 -11 1 10 1 -7 1 1 1 1 1 -10 1 6 1 0 1 2 1 -15 1 10 1 11 1 -7 1 8 1 -3 1 -1 1 8 1 3 1 -4 1 -10 1 19 1 -19 1 15 1 -7 1 -1 1 -7 1 4 1 6 1 -2 1 -5 1 -5 1 5 1 2 1 1 1 -10 1 13 1 -2 1 -4 1 -6 1 17 1 -15 1 -1 1 5 1 12" stroke="#b8860b" vector-effect="non-scaling-stroke"/>
<path d="M0 4l1 -3 1 -3 1 9 1 -6 1 -5 1 7 1 -1 1 1 1 5 1 -6 1 -1 1 -5 1 9 1 2 1 -4 1 2 1 -8 1 6 1 6 1 -12 1 3 1 -1 1 -1 1 -4 1 11 1 -9 1 4 1 0 1 1 1 2 1 -4 1 1 1 -4 1 -4 1 14 1 -17 1 5 1 13 1 -6 1 -1 1 -7 1 13 1 -16 1 16 1 -4 1 2 1 3 1 -1 1 -3 1 -1 1 2 1 1 1 10 1 -13 1 -13 1 2 1 2 1 9 1 -5 1 6 1 0 1 -4 1 -5 1 9 1 1 1 -4 1 8 1 -13 1 -1 1 -1 1 2 1 8 1 -2 1 4 1 -7 1 -11 1 18 1 -10 1 -4 1 13 1 -18 1 16 1 -4 1 -3 1 -3 1 0 1 6 1 2 1 9 1 -11 1 -10 1 11 1 -9 1 -1 1 2 1 3 1 -1 1 -4 1 9 1 -20 1 14 1 -3 1 -1 1 -2 1 -5 1 -5 1 6 1 -8 1 11 1 -6 1 0 1 4 1 -3 1 11 1 -13 1 3 1 4 1 4 1 -6 1 12 1 -12 1 -3 1 -10 1 13 1 -15 1 -4 1 6 1 -10 1 -14 1 -22 1 -13 1 -2 1 -13 1 -5 1 10 1 -31 1 -8 1 27 1 -6 1 -1 1 8 1 2 1 7 1 20 1 0 1 16 1 5 1 3 1 4 1 13 1 -9 1 15 1 5 1 -1 1 12 1 -1 1 18 1 -3 1 -7 1 3 1 0 1 3 1 -6 1 -3 1 11 1 -8 1 4 1 9 1 2 1 -8 1 -6 1 12 1 7 1 -17 1 -1 1 8 1 -7 1 -5 1 16 1 -2 1 0 1 -8 1 11 1 -3 1 -9 1 1 1 0 1 12 1 -8 1 6 1 -9 1 3 1 -1 1 5 1 -2 1 -1 1 3 1 -2 1 7 1 1 1 3 1 -9 1 -5 1 2 1 13 1 -13 1 2 1 1 1 -2 1 -2" stroke="#ff8c00" vector-effect="non-scaling-stroke"/>
<path d="M0 -8l1 1 1 -4 1 7 1 7 1 -11 1 15 1 -12 1 10 1 -2 1 -10 1 10 1 -9 1 2 1 4 1 -5 1 1 1 3 1 4 1 -8 1 7 1 -2 1 -3 1 3 1 -2 1 0 1 0 1 1 1 -7 1 10 1 0 1 5 1 6 1 -17 1 1 1 -5 1 16 1 -4 1 -1 1 -14 1 6 1 6 1 -1 1 -2 1 8 1 -8 1 8 1 -7 1 -3 1 2 1 6 1 -3 1 -6 1 8 1 4 1 -6 1 2 1 -2 1 -1 1 2 1 0 1 -7 1 2 1 -2 1 4 1 3 1 -4 1 10 1 -2 1 -11 1 8 1 0 1 3 1 -9 1 9 1 -13 1 5 1 11 1 -7 1 2 1 -9 1 0 1 6 1 1 1 -7 1 6 1 -11 1 11 1 -6 1 13 1 -14 1 5 1 -5 1 -6 1 7 1 12 1 -3 1 -13 1 5 1 0 1 -14 1 7 1 -7 1 -1 1 7 1 -3 1 7 1 -9 1 2 1 -9 1 5 1 5 1 4 1 -3 1 0 1 -4 1 -1 1 13 1 -1 1 -7 1 10 1 -8 1 8 1 -9 1 -1 1 -7 1 -5 1 -14 1 -10 1 -8 1 -4 1 -11 1 -9 1 -7 1 -10 1 -7 1 -7 1 -7 1 -2 1 11 1 2 1 3 1 10 1 15 1 9 1 -4 1 18 1 -2 1 14 1 -11 1 22 1 -11 1 11 1 0 1 4 1 8 1 8 1 -14 1 17 1 -2 1 10 1 -6 1 -2 1 8 1 -4 1 3 1 1 1 -5 1 -1 1 9 1 6 1 -12 1 9 1 -3 1 3 1 -10 1 -7 1 16 1 -15 1 11 1 3 1 -8 1 -4 1 12 1 0 1 -12 1 6 1 20 1 -14 1 3 1 -1 1 -4 1 4 1 -1 1 -13 1 20 1 -9 1 -3 1 12 1 -2 1 0 1 -11 1 11 1 -9 1 9 1 1 1 -10 1 -2 1 12 1 -2 1 -7" stroke="#483d8b" vector-effect="non-scaling-stroke"/>
<path d="M0 6l1 1 1 -1 1 -7 1 16 1 -25 1 1 1 2 1 8 1 3 1 -7 1 9 1 -18 1 16 1 -10 1 2 1 7 1 -1 1 3 1 -5 1 -3 1 3 1 2 1 -2 1 -7 1 2 1 2 1 7 1 -1 1 -5 1 4 1 2 1 -11 1 7 1 -1 1 5 1 -5 1 -3 1 3 1 10 1 -6 1 -6 1 2 1 -4 1 7 1 -1 1 -6 1 6 1 -5 1 14 1 -4 1 -11 1 1 1 0 1 -1 1 0 1 12 1 -16 1 5 1 11 1 1 1 -10 1 6 1 -6 1 4 1 7 1 -4 1 -2 1 -3 1 -4 1 8 1 -6 1 4 1 -1 1 12 1 -10 1 5 1 -12 1 -2 1 3 1 -9 1 10 1 -4 1 7 1 -4 1 7 1 -4 1 -8 1 6 1 2 1 -2 1 -4 1 -5 1 15 1 -9 1 0 1 0 1 -2 1 -4 1 -4 1 15 1 -4 1 -8 1 9 1 -12 1 7 1 -4 1 6 1 -2 1 -21 1 18 1 -10 1 9 1 -4 1 9 1 -7 1 6 1 13 1 0 1 -14 1 -4 1 7 1 1 1 -4 1 -14 1 14 1 -21 1 -10 1 8 1 -10 1 -13 1 -8 1 -21 1 -2 1 -2 1 -12 1 -12 1 6 1 5 1 -10 1 -1 1 9 1 12 1 13 1 1 1 8 1 7 1 10 1 -1 1 6 1 18 1 -7 1 14 1 -3 1 5 1 -1 1 9 1 1 1 2 1 1 1 7 1 -10 1 7 1 -5 1 3 1 -1 1 -1 1 11 1 -6 1 -1 1 5 1 0 1 -5 1 -5 1 4 1 -1 1 3 1 -9 1 11 1 -5 1 -14 1 17 1 2 1 9 1 1 1 -22 1 12 1 6 1 -3 1 4 1 -6 1 3 1 -6 1 -5 1 5 1 3 1 0 1 -7 1 15 1 -2 1 -2 1 3 1 -9 1 5 1 3 1 -9 1 4 1 -3 1 2 1 3 1 3" stroke="#ff1493" vector-effect="non-scaling-stroke"/>
<path d="M0 -3l1 8 1 -11 1 5 1 1 1 5 1 -14 1 11 1 -5 1 7 1 -11 1 5 1 -4 1 1 1 6 1 4 1 -5 1 4 1 -2 1 -12 1 5 1 3 1 -2 1 -1 1 3 1 2 1 -1 1 -2 1 -9 1 18 1 -7 1 4 1 -17 1 16 1 -10 1 4 1 1 1 -4 1 4 1 4 1 -12 1 17 1 4 1 -6 1 -9 1 8 1 -4 1 -5 1 2 1 1 1 -4 1 6 1 -6 1 5 1 -7 1 2 1 6 1 -6 1 1 1 0 1 3 1 8 1 -3 1 -8 1 -2 1 16 1 -4 1 6 1 -4 1 -10 1 6 1 -6 1 -5 1 18 1 -11 1 -1 1 -1 1 -3 1 -1 1 3 1 8 1 -12 1 -5 1 18 1 -6 1 -3 1 4 1 -3 1 -1 1 -5 1 8 1 -1 1 -13 1 5 1 8 1 4 1 -8 1 -4 1 4 1 6 1 -2 1 -4 1 -4 1 -2 1 -6 1 11 1 0 1 5 1 -4 1 -4 1 0 1 -1 1 -2 1 4 1 6 1 -9 1 0 1 7 1 -23 1 33 1 -5 1 -6 1 -1 1 1 1 -8 1 -11 1 -2 1 -5 1 -14 1 11 1 -17 1 -11 1 -7 1 -8 1 -5 1 -3 1 -3 1 -5 1 -3 1 -3 1 4 1 5 1 27 1 -3 1 8 1 -1 1 6 1 9 1 -4 1 14 1 1 1 2 1 5 1 7 1 -7 1 7 1 2 1 5 1 2 1 6 1 8 1 -3 1 3 1 -8 1 9 1 -5 1 3 1 -5 1 2 1 -9 1 3 1 -3 1 8 1 11 1 -15 1 -6 1 14 1 -11 1 10 1 -2 1 2 1 2 1 0 1 7 1 -11 1 1 1 -4 1 5 1 -3 1 -10 1 7 1 6 1 -2 1 2 1 -7 1 10 1 -9 1 4 1 17 1 -17 1 6 1 2 1 -5 1 -2 1 -13 1 14 1 5 1 -4 1 -4 1 8 1 -4" stroke="#b22222" vector-effect="non-scaling-stroke"/>
<path d="M0 9l1 -2 1 -5 1 -6 1 9 1 0 1 -5 1 6 1 -3 1 2 1 -15 1 13 1 -11 1 7 1 -9 1 16 1 -7 1 15 1 -21 1 3 1 6 1 -14 1 -4 1 7 1 0 1 9 1 5 1 4 1 -15 1 17 1 -10 1 -11 1 8 1 9 1 -2 1 -12 1 13 1 -3 1 5 1 -8 1 3 1 -9 1 12 1 -4 1 11 1 -21 1 1 1 9 1 -3 1 -2 1 -3 1 15 1 -4 1 -18 1 6 1 4 1 3 1 -5 1 0 1 0 1 11 1 -6 1 -2 1 0 1 8 1 -5 1 4 1 -3 1 -3 1 -2 1 -1 1 -2 1 5 1 8 1 -8 1 3 1 7 1 -6 1 -6 1 -4 1 7 1 7 1 -8 1 4 1 -11 1 14 1 -12 1 6 1 -4 1 6 1 -7 1 2 1 1 1 5 1 -4 1 8 1 -15 1 4 1 -11 1 17 1 -19 1 6 1 5 1 -6 1 9 1 1 1 -16 1 19 1 -12 1 -8 1 7 1 -7 1 9 1 3 1 -10 1 2 1 6 1 -9 1 15 1 -12 1 9 1 -5 1 0 1 -2 1 -3 1 -10 1 -5 1 2 1 -6 1 -1 1 -24 1 -4 1 0 1 -11 1 -14 1 9 1 -12 1 -2 1 3 1 0 1 17 1 -13 1 15 1 3 1 15 1 -17 1 17 1 21 1 -4 1 3 1 8 1 6 1 4 1 0 1 -3 1 2 1 -3 1 9 1 14 1 -11 1 -7 1 15 1 -8 1 0 1 9 1 -4 1 5 1 -14 1 5 1 4 1 -4 1 1 1 9 1 3 1 1 1 -1 1 -12 1 -2 1 -2 1 17 1 -8 1 -7 1 -3 1 12 1 1 1 0 1 -5 1 -2 1 -1 1 8 1 -11 1 14 1 -9 1 -4 1 2 1 4 1 4 1 -1 1 3 1 0 1 2 1 -12 1 13 1 -3 1 -11 1 5 1 -8 1 1 1 6 1 -4 1 13" stroke="#d3d3d3" vector-effect="non-scaling-stroke"/>
<path d="M0 -2l1 -8 1 7 1 1 1 -14 1 11 1 13 1 -15 1 21 1 -17 1 0 1 5 1 2 1 -2 1 -18 1 22 1 -2 1 -3 1 1 1 -12 1 8 1 2 1 -5 1 3 1 3 1 0 1 -1 1 0 1 2 1 -2 1 -8 1 15 1 -10 1 -2 1 5 1 0 1 -7 1 9 1 -6 1 0 1 2 1 0 1 -3 1 -4 1 15 1 -12 1 9 1 2 1 -7 1 0 1 11 1 -19 1 12 1 -6 1 1 1 -1 1 3 1 -1 1 1 1 2 1 -8 1 6 1 -2 1 6 1 0 1 -5 1 10 1 -17 1 11 1 -1 1 1 1 -3 1 -3 1 -1 1 8 1 3 1 -6 1 0 1 3 1 -11 1 13 1 -1 1 -11 1 8 1 -1 1 3 1 3 1 -3 1 5 1 -14 1 2 1 -9 1 11 1 2 1 -9 1 8 1 -9 1 8 1 7 1 -9 1 -1 1 -6 1 5 1 -4 1 0 1 6 1 1 1 -2 1 4 1 -9 1 -4 1 6 1 2 1 3 1 -10 1 -2 1 18 1 -24 1 4 1 12 1 -3 1 -2 1 -2 1 3 1 -5 1 -6 1 -15 1 9 1 -2 1 -17 1 -1 1 -9 1 -8 1 -3 1 -5 1 -4 1 -4 1 -6 1 -12 1 13 1 8 1 7 1 -7 1 16 1 1 1 17 1 7 1 -8 1 15 1 -7 1 0 1 14 1 2 1 2 1 4 1 1 1 2 1 1 1 -1 1 -1 1 1 1 3 1 5 1 -6 1 -1 1 4 1 3 1 -13 1 24 1 -15 1 2 1 -7 1 -1 1 7 1 6 1 -6 1 10 1 -7 1 5 1 -7 1 13 1 -8 1 -3 1 3 1 0 1 3 1 -3 1 -10 1 12 1 4 1 -2 1 -3 1 -6 1 5 1 -5 1 -4 1 13 1 -6 1 3 1 -7 1 1 1 2 1 8 1 -4 1 -1 1 0 1 3 1 -5 1 -1 1 0 1 6" stroke="#adff2f" vector-effect="non-scaling-stroke"/>
<path d="M0 2l1 4 1 -2 1 -7 1 4 1 0 1 -7 1 9 1 -3 1 8 1 -13 1 6 1 -5 1 0 1 4 1 -3 1 11 1 -5 1 7 1 -15 1 2 1 -5 1 1 1 -2 1 10 1 7 1 -6 1 -14 1 9 1 -4 1 3 1 1 1 5 1 4 1 -11 1 10 1 -14 1 6 1 -1 1 4 1 9 1 -4 1 -10 1 12 1 -1 1 -14 1 19 1 -11 1 -2 1 -9 1 5 1 3 1 13 1 -9 1 8 1 -11 1 10 1 -14 1 2 1 7 1 -5 1 1 1 0 1 1 1 -4 1 3 1 3 1 -4 1 6 1 -11 1 2 1 16 1 -10 1 -1 1 0 1 -3 1 -5 1 -1 1 19 1 -15 1 15 1 -16 1 3 1 7 1 -2 1 0 1 -10 1 10 1 -1 1 -5 1 -7 1 12 1 -5 1 6 1 -10 1 11 1 -9 1 0 1 4 1 -10 1 -5 1 10 1 -2 1 1 1 -6 1 1 1 4 1 1 1 4 1 -3 1 -2 1 -9 1 4 1 17 1 -9 1 -9 1 1 1 16 1 -9 1 -9 1 13 1 -3 1 -3 1 5 1 -13 1 1 1 -5 1 0 1 -15 1 2 1 -4 1 -11 1 -1 1 -10 1 -22 1 14 1 -4 1 -9 1 -1 1 1 1 4 1 18 1 -2 1 16 1 -13 1 7 1 2 1 19 1 7 1 -9 1 10 1 5 1 1 1 7 1 4 1 -10 1 2 1 -1 1 3 1 3 1 -1 1 5 1 -2 1 2 1 12 1 -14 1 -7 1 1 1 11 1 -3 1 1 1 -9 1 1 1 14 1 0 1 -2 1 1 1 -12 1 20 1 -5 1 2 1 -4 1 -7 1 10 1 -11 1 -5 1 9 1 -6 1 8 1 -3 1 3 1 -7 1 4 1 -2 1 -1 1 -1 1 12 1 -7 1 5 1 -1 1 -2 1 -4 1 4 1 1 1 -9 1 5 1 14 1 -14 1 5 1 -7 1 0" stroke="#ffffff" vector-effect="non-scaling-stroke"/>
<path d="M0 -9l1 11 1 -7 1 6 1 3 1 5 1 -11 1 -6 1 9 1 -7 1 5 1 -4 1 6 1 -4 1 9 1 -10 1 -7 1 5 1 9 1 7 1 -11 1 7 1 -5 1 -7 1 19 1 -12 1 0 1 -5 1 2 1 -8 1 7 1 -1 1 15 1 -11 1 2 1 -2 1 -6 1 13 1 7 1 -24 1 11 1 1 1 -10 1 3 1 4 1 -1 1 -2 1 9 1 -6 1 -11 1 9 1 1 1 -10 1 10 1 -8 1 8 1 3 1 -4 1 1 1 9 1 -19 1 9 1 -10 1 17 1 -2 1 5 1 -6 1 -5 1 -8 1 14 1 -1 1 -7 1 3 1 6 1 -1 1 1 1 -10 1 10 1 -2 1 -8 1 10 1 -10 1 14 1 -4 1 -12 1 5 1 8 1 1 1 3 1 -11 1 3 1 -3 1 2 1 -17 1 8 1 16 1 -11 1 8 1 -8 1 2 1 -4 1 3 1 10 1 -16 1 14 1 -6 1 -1 1 -6 1 8 1 -6 1 -1 1 -11 1 15 1 -6 1 -2 1 5 1 -2 1 -4 1 9 1 13 1 -14 1 -4 1 -2 1 -1 1 -5 1 3 1 -1 1 -1 1 -4 1 -19 1 3 1 -6 1 -21 1 12 1 -17 1 7 1 -8 1 -3 1 -4 1 6 1 -6 1 15 1 -10 1 19 1 13 1 0 1 4 1 -3 1 14 1 -12 1 16 1 1 1 -6 1 21 1 -23 1 20 1 8 1 -19 1 11 1 10 1 -13 1 -5 1 0 1 7 1 10 1 -2 1 -8 1 2 1 5 1 -10 1 16 1 -16 1 16 1 -4 1 -2 1 -5 1 -2 1 16 1 -4 1 -1 1 -3 1 4 1 2 1 -15 1 4 1 4 1 -5 1 7 1 8 1 2 1 -15 1 4 1 0 1 6 1 -7 1 0 1 -7 1 1 1 11 1 -14 1 5 1 -4 1 10 1 -7 1 15 1 -16 1 11 1 -7 1 7 1 -4 1 -1" stroke="#fff8dc" vector-effect="non-scaling-stroke"/>
<path d="M0 7l1 -8 1 -5 1 5 1 -6 1 -7 1 13 1 -7 1 7 1 7 1 -11 1 12 1 -8 1 -13 1 18 1 2 1 -4 1 -5 1 -2 1 8 1 0 1 -7 1 4 1 -6 1 11 1 -14 1 7 1 2 1 9 1 -7 1 -2 1 -7 1 6 1 7 1 2 1 -13 1 12 1 -17 1 8 1 5 1 2 1 -13 1 9 1 -2 1 13 1 -13 1 7 1 7 1 -12 1 0 1 6 1 -24 1 24 1 -2 1 -7 1 0 1 0 1 3 1 -10 1 14 1 6 1 -5 1 -5 1 -2 1 -11 1 12 1 3 1 0 1 2 1 -9 1 11 1 -15 1 13 1 -1 1 -4 1 10 1 -11 1 1 1 -8 1 3 1 19 1 -17 1 8 1 0 1 -1 1 -16 1 14 1 -3 1 -5 1 -6 1 13 1 -3 1 -1 1 1 1 1 1 6 1 -4 1 1 1 1 1 -4 1 -3 1 3 1 -2 1 -8 1 1 1 10 1 4 1 -26 1 16 1 -11 1 10 1 -11 1 8 1 3 1 3 1 -2 1 5 1 -8 1 3 1 -3 1 0 1 9 1 -9 1 1 1 -7 1 -7 1 8 1 6 1 -17 1 -5 1 0 1 -15 1 -3 1 -11 1 9 1 -14 1 -2 1 -3 1 -6 1 11 1 2 1 -3 1 19 1 -9 1 13 1 14 1 -18 1 3 1 12 1 10 1 8 1 -9 1 -5 1 21 1 -7 1 -8 1 7 1 7 1 -13 1 21 1 -10 1 -2 1 14 1 -4 1 0 1 -18 1 17 1 0 1 3 1 -18 1 3 1 18 1 -1 1 -8 1 3 1 -1 1 6 1 7 1 -12 1 7 1 -21 1 14 1 0 1 -1 1 6 1 -5 1 8 1 -6 1 -3 1 3 1 16 1 -20 1 8 1 -10 1 6 1 0 1 -3 1 7 1 -4 1 3 1 -6 1 -2 1 10 1 -2 1 2 1 -15 1 15 1 -4 1 0 1 4 1 -8" stroke="#f0e68c" vector-effect="non-scaling-stroke"/>
<path d="M0 2l1 -8 1 11 1 -7 1 -11 1 8 1 5 1 -5 1 12 1 -10 1 1 1 -1 1 0 1 -1 1 7 1 0 1 3 1 -9 1 13 1 -9 1 4 1 -6 1 -12 1 16 1 -9 1 -2 1 15 1 -6 1 -2 1 6 1 -3 1 -1 1 -2 1 4 1 -10 1 4 1 3 1 -2 1 12 1 -1 1 -1 1 -9 1 -8 1 12 1 4 1 -2 1 -6 1 8 1 -2 1 -9 1 -3 1 6 1 1 1 2 1 -5 1 20 1 -18 1 0 1 3 1 0 1 -4 1 5 1 -7 1 9 1 -7 1 -3 1 11 1 -12 1 4 1 0 1 -5 1 4 1 8 1 -9 1 -3 1 9 1 -1 1 0 1 2 1 1 1 -9 1 -1 1 13 1 -7 1 1 1 -6 1 -2 1 4 1 -4 1 1 1 1 1 1 1 -3 1 9 1 3 1 -12 1 -1 1 -4 1 10 1 5 1 -9 1 -7 1 12 1 -3 1 2 1 5 1 -16 1 10 1 -12 1 11 1 8 1 -5 1 0 1 -1 1 -3 1 1 1 -11 1 22 1 -7 1 -6 1 -4 1 3 1 1 1 -5 1 4 1 -3 1 -7 1 6 1 -12 1 0 1 -12 1 -3 1 -16 1 0 1 -2 1 3 1 -13 1 14 1 -17 1 1 1 6 1 2 1 17 1 -1 1 6 1 -5 1 4 1 -1 1 18 1 2 1 -5 1 10 1 2 1 -5 1 5 1 6 1 -8 1 8 1 8 1 -6 1 -1 1 5 1 -9 1 4 1 -2 1 0 1 7 1 0 1 -2 1 3 1 -10 1 13 1 3 1 -11 1 5 1 7 1 -12 1 0 1 9 1 2 1 -11 1 0 1 0 1 6 1 -7 1 -4 1 5 1 0 1 -2 1 3 1 3 1 -2 1 -3 1 4 1 -2 1 6 1 -2 1 8 1 -13 1 3 1 8 1 -9 1 7 1 -7 1 -8 1 10 1 5 1 -2 1 -4 1 4 1 -6" stroke="#20b2aa" vector-effect="non-scaling-stroke"/>
<path d="M0 10l1 -18 1 8 1 0 1 -8 1 2 1 16 1 -3 1 -12 1 7 1 3 1 -10 1 6 1 -3 1 6 1 -2 1 -1 1 -3 1 -4 1 15 1 -5 1 0 1 -5 1 5 1 -4 1 -6 1 5 1 -6 1 7 1 10 1 -10 1 -2 1 6 1 -3 1 -8 1 4 1 9 1 1 1 -11 1 1 1 10 1 -6 1 -1 1 -5 1 0 1 -8 1 17 1 6 1 -9 1 -7 1 12 1 0 1 -7 1 1 1 -7 1 10 1 -18 1 10 1 0 1 12 1 -10 1 -7 1 11 1 -11 1 5 1 -2 1 4 1 -3 1 16 1 -9 1 2 1 -4 1 3 1 5 1 -9 1 0 1 2 1 -5 1 7 1 -7 1 0 1 10 1 -10 1 6 1 -3 1 4 1 -10 1 5 1 17 1 -9 1 1 1 -5 1 -6 1 3 1 11 1 2 1 -13 1 2 1 -7 1 1 1 1 1 -6 1 5 1 -2 1 6 1 -5 1 -8 1 16 1 1 1 -5 1 -9 1 6 1 5 1 -8 1 4 1 0 1 7 1 3 1 -13 1 6 1 -7 1 -8 1 6 1 11 1 -9 1 2 1 -9 1 -7 1 3 1 -9 1 -3 1 -8 1 -8 1 1 1 -10 1 -5 1 9 1 -7 1 1 1 12 1 -4 1 -9 1 8 1 8 1 3 1 -1 1 16 1 -12 1 15 1 2 1 6 1 -5 1 10 1 -3 1 6 1 -10 1 1 1 13 1 4 1 0 1 -11 1 13 1 -2 1 -4 1 -9 1 9 1 2 1 -5 1 14 1 -4 1 -11 1 -1 1 4 1 1 1 4 1 -1 1 -11 1 16 1 -13 1 8 1 8 1 -12 1 8 1 -7 1 1 1 -11 1 16 1 8 1 -14 1 -1 1 5 1 3 1 -7 1 -1 1 6 1 -7 1 5 1 1 1 6 1 -3 1 -7 1 -4 1 1 1 7 1 0 1 4 1 0 1 -3 1 -7 1 -2 1 5" stroke="#b0c4de" vector-effect="non-scaling-stroke"/>
<path d="M0 -3l1 8 1 -4 1 -5 1 4 1 -3 1 10 1 -16 1 11 1 2 1 -5 1 22 1 -19 1 -13 1 14 1 -8 1 15 1 -2 1 1 1 -17 1 19 1 -13 1 7 1 -9 1 10 1 -2 1 -6 1 12 1 2 1 -23 1 11 1 -3 1 3 1 -2 1 2 1 -2 1 9 1 8 1 -11 1 -13 1 13 1 6 1 -19 1 3 1 9 1 -7 1 1 1 10 1 -14 1 3 1 1 1 -3 1 17 1 -10 1 -10 1 2 1 15 1 -12 1 8 1 -6 1 6 1 -12 1 -4 1 6 1 0 1 5 1 2 1 -10 1 4 1 3 1 5 1 3 1 -11 1 0 1 4 1 0 1 9 1 -4 1 1 1 -9 1 5 1 -2 1 5 1 -5 1 10 1 -20 1 10 1 -3 1 1 1 7 1 -13 1 7 1 2 1 -7 1 11 1 -10 1 -6 1 13 1 -6 1 10 1 -10 1 0 1 10 1 -18 1 -3 1 22 1 -13 1 4 1 -1 1 -4 1 2 1 2 1 -3 1 4 1 -4 1 5 1 -9 1 -6 1 11 1 3 1 -10 1 19 1 -11 1 5 1 -4 1 0 1 -8 1 -12 1 9 1 -8 1 -13 1 -1 1 -7 1 1 1 -1 1 -4 1 -4 1 3 1 8 1 -10 1 -3 1 9 1 -7 1 4 1 10 1 6 1 -1 1 9 1 1 1 6 1 2 1 -5 1 8 1 -4 1 5 1 1 1 0 1 16 1 -10 1 -3 1 -6 1 5 1 -11 1 8 1 7 1 8 1 -5 1 0 1 -2 1 -1 1 10 1 -11 1 5 1 2 1 4 1 -8 1 4 1 10 1 -13 1 1 1 9 1 -13 1 5 1 -4 1 10 1 -4 1 -5 1 -2 1 8 1 11 1 -17 1 3 1 -9 1 14 1 -9 1 11 1 -10 1 4 1 -3 1 2 1 0 1 -10 1 3 1 6 1 5 1 0 1 -11 1 6 1 4 1 0 1 -12" stroke="#ffffff" vector-effect="non-scaling-stroke"/>
</g>
<path d="M868.7 214.9H939.3" stroke="#00ff00" stroke-width="2.5" fill="none"/>
<path d="M929.8 211.7H995.3" stroke="#00ff00" stroke-width="2.5" fill="none"/>
<path d="M1001.8 209.8H1054.2" stroke="#00ff00" stroke-width="2.5" fill="none"/>
<path d="M1110.4 206.9H1152.7" stroke="#00ff00" stroke-width="2.5" fill="none"/>
<path d="M877.5 58V311" stroke="#ff0000" stroke-width="3" stroke-dasharray="10 2 3 2" fill="none"/>
<path d="M1202 58V311" stroke="#ff0000" stroke-width="3" stroke-dasharray="10 2 3 2" fill="none"/>
<path d="M903.6 58V311" stroke="#0000ff" stroke-width="2" stroke-dasharray="6 2 2 2" fill="none"/>
<path d="M962 58V311" stroke="#0000ff" stroke-width="2" stroke-dasharray="6 2 2 2" fill="none"/>
<path d="M1027 58V311" stroke="#0000ff" stroke-width="2" stroke-dasharray="6 2 2 2" fill="none"/>
<path d="M1131 58V311" stroke="#0000ff" stroke-width="2" stroke-dasharray="6 2 2 2" fill="none"/>
</g></svg>
<text x="907" y="65" text-anchor="start" dominant-baseline="central" font-size="10" font-weight="bold" fill="#0000ff" letter-spacing="0.2" font-family="Liberation Mono" >1</text>
<text x="881" y="65" text-anchor="start" dominant-baseline="central" font-size="10" font-weight="bold" fill="#ff0000" letter-spacing="0.2" font-family="Liberation Mono" >Fit start</text>
<text x="966" y="65" text-anchor="start" dominant-baseline="central" font-size="10" font-weight="bold" fill="#0000ff" letter-spacing="0.2" font-family="Liberation Mono" >2</text>
<text x="1031" y="65" text-anchor="start" dominant-baseline="central" font-size="10" font-weight="bold" fill="#0000ff" letter-spacing="0.2" font-family="Liberation Mono" >3</text>
<text x="1135" y="65" text-anchor="start" dominant-baseline="central" font-size="10" font-weight="bold" fill="#0000ff" letter-spacing="0.2" font-family="Liberation Mono" >4</text>
<text x="1156" y="65" text-anchor="start" dominant-baseline="central" font-size="10" font-weight="bold" fill="#ff0000" letter-spacing="0.2" font-family="Liberation Mono" >Fit end</text>
<path d="M721.5 61L721.5 306M717 304.5L721.5 304.5M713 296.5L721.5 296.5M717 289.5L721.5 289.5M717 282.5L721.5 282.5M717 275.5L721.5 275.5M717 268.5L721.5 268.5M713 261.5L721.5 261.5M717 254.5L721.5 254.5M717 246.5L721.5 246.5M717 239.5L721.5 239.5M717 232.5L721.5 232.5M713 225.5L721.5 225.5M717 218.5L721.5 218.5M717 211.5L721.5 211.5M717 204.5L721.5 204.5M717 197.5L721.5 197.5M713 189.5L721.5 189.5M717 182.5L721.5 182.5M717 175.5L721.5 175.5M717 168.5L721.5 168.5M717 161.5L721.5 161.5M713 154.5L721.5 154.5M717 147.5L721.5 147.5M717 139.5L721.5 139.5M717 132.5L721.5 132.5M717 125.5L721.5 125.5M713 118.5L721.5 118.5M717 111.5L721.5 111.5M717 104.5L721.5 104.5M717 97.5L721.5 97.5M717 90.5L721.5 90.5M713 82.5L721.5 82.5M717 75.5L721.5 75.5M717 68.5L721.5 68.5M717 61.5L721.5 61.5" stroke="#000" stroke-width="1" fill="none" shape-rendering="crispEdges"/>
<text x="709.5" y="296.4" text-anchor="end" dominant-baseline="central" font-size="12" font-weight="normal" fill="#000" letter-spacing="0.3" >0</text>
<text x="709.5" y="260.7" text-anchor="end" dominant-baseline="central" font-size="12" font-weight="normal" fill="#000" letter-spacing="0.3" >5e-05</text>
<text x="709.5" y="225.1" text-anchor="end" dominant-baseline="central" font-size="12" font-weight="normal" fill="#000" letter-spacing="0.3" >0.0001</text>
<text x="709.5" y="189.4" text-anchor="end" dominant-baseline="central" font-size="12" font-weight="normal" fill="#000" letter-spacing="0.3" >0.00015</text>
<text x="709.5" y="153.7" text-anchor="end" dominant-baseline="central" font-size="12" font-weight="normal" fill="#000" letter-spacing="0.3" >0.0002</text>
<text x="709.5" y="118.1" text-anchor="end" dominant-baseline="central" font-size="12" font-weight="normal" fill="#000" letter-spacing="0.3" >0.00025</text>
<text x="709.5" y="82.4" text-anchor="end" dominant-baseline="central" font-size="12" font-weight="normal" fill="#000" letter-spacing="0.3" >0.0003</text>
<path d="M730 315.5L1350.5 315.5M730.5 315.5L730.5 323.5M759.5 315.5L759.5 319.5M789.5 315.5L789.5 319.5M818.5 315.5L818.5 319.5M848.5 315.5L848.5 319.5M877.5 315.5L877.5 323.5M907.5 315.5L907.5 319.5M936.5 315.5L936.5 319.5M966.5 315.5L966.5 319.5M995.5 315.5L995.5 319.5M1025.5 315.5L1025.5 323.5M1054.5 315.5L1054.5 319.5M1083.5 315.5L1083.5 319.5M1113.5 315.5L1113.5 319.5M1142.5 315.5L1142.5 319.5M1172.5 315.5L1172.5 323.5M1201.5 315.5L1201.5 319.5M1231.5 315.5L1231.5 319.5M1260.5 315.5L1260.5 319.5M1290.5 315.5L1290.5 319.5M1319.5 315.5L1319.5 323.5M1348.5 315.5L1348.5 319.5" stroke="#000" stroke-width="1" fill="none" shape-rendering="crispEdges"/>
<text x="731.5" y="331.5" text-anchor="middle" dominant-baseline="central" font-size="12" font-weight="normal" fill="#000" letter-spacing="0.3" >0</text>
<text x="878.8" y="331.5" text-anchor="middle" dominant-baseline="central" font-size="12" font-weight="normal" fill="#000" letter-spacing="0.3" >50</text>
<text x="1026" y="331.5" text-anchor="middle" dominant-baseline="central" font-size="12" font-weight="normal" fill="#000" letter-spacing="0.3" >100</text>
<text x="1173.2" y="331.5" text-anchor="middle" dominant-baseline="central" font-size="12" font-weight="normal" fill="#000" letter-spacing="0.3" >150</text>
<text x="1320.5" y="331.5" text-anchor="middle" dominant-baseline="central" font-size="12" font-weight="normal" fill="#000" letter-spacing="0.3" >200</text>
<text x="655.5" y="183.5" text-anchor="middle" dominant-baseline="central" font-size="14" font-weight="bold" fill="#000" letter-spacing="0.3" transform="rotate(-90 655.5 183.5)">I(t) [a.u.]</text>
<text x="1044.5" y="349" text-anchor="middle" dominant-baseline="central" font-size="14" font-weight="bold" fill="#000" letter-spacing="0.1" >Time [a.u.]</text><rect x="696" y="377" width="666" height="255" fill="#fff"/>
<rect x="698" y="379" width="662" height="251" fill="#000"/>
<svg x="698" y="379" width="662" height="251" overflow="hidden"><g transform="translate(-698,-379)">
<path d="M698 623.5H1360M698 611.5H1360M698 599.5H1360M698 587.5H1360M698 575.5H1360M698 563.5H1360M698 551.5H1360M698 539.5H1360M698 527.5H1360M698 515.5H1360M698 503.5H1360M698 491.5H1360M698 479.5H1360M698 467.5H1360M698 455.5H1360M698 443.5H1360M698 431.5H1360M698 419.5H1360M698 407.5H1360M698 395.5H1360M698 383.5H1360" stroke="#d8d8d8" stroke-width="1" stroke-dasharray="3 3" fill="none" shape-rendering="crispEdges"/>
<path d="M702.5 379V630M731.5 379V630M760.5 379V630M790.5 379V630M819.5 379V630M849.5 379V630M878.5 379V630M908.5 379V630M937.5 379V630M966.5 379V630M996.5 379V630M1025.5 379V630M1055.5 379V630M1084.5 379V630M1114.5 379V630M1143.5 379V630M1172.5 379V630M1202.5 379V630M1231.5 379V630M1261.5 379V630M1290.5 379V630M1320.5 379V630M1349.5 379V630" stroke="#d8d8d8" stroke-width="1" stroke-dasharray="3 3" fill="none" shape-rendering="crispEdges"/>
<path d="M878 504V503M881 504V532M884 482V481M887 498V478M890 503V498M893 504V480M896 504V500M899 504V509M902 504V511M905 509V521M905 521V525M913 491V473M919 495V490M922 502V484M931 504V506M937 485V481M940 526V533M943 504V495M946 504V506M955 504V510M958 512V527M963 509V517M966 504V491M969 504V523M975 504V498M978 504V485M984 528V545M987 504V513M987 534V542M990 504V527M993 504V495M996 513V522M999 498V492M1002 504V520M1005 504V523M1008 502V487M1011 504V495M1013 504V518M1019 512V520M1022 504V499M1025 521V523M1028 504V516M1034 493V486M1040 501V498M1049 496V480M1055 495V488M1061 504V506M1066 504V509M1069 504V511M1072 504V513M1075 504V492M1078 504V482M1087 504V501M1096 510V516M1099 504V492M1102 503V502M1105 504V494M1108 500V477M1116 504V509M1119 511V530M1122 517V529M1125 504V514M1128 504V500M1131 502V487M1134 503V500M1137 505V512M1137 525V528M1140 504V499M1143 488V482M1152 536V541M1155 514V528M1158 510V528M1161 504V512M1164 504V494M1166 504V513M1169 504V488M1178 508V509M1187 514V536M1193 503V488M1196 518V524M1202 504V500" stroke="#20b2aa" stroke-width="2" fill="none"/>
<path d="M878 503V502M887 508V514M893 529V558M899 496V484M899 477V472M902 500V483M905 504V493M908 497V474M910 496V487M913 504V515M919 505V510M928 513V547M931 506V522M946 506V536M949 488V481M958 498V486M958 477V472M961 504V522M963 503V488M972 514V534M975 524V530M981 504V501M990 527V549M993 495V487M999 514V515M1008 513V514M1013 499V497M1016 500V481M1019 528V529M1025 500V486M1031 501V491M1034 486V476M1046 504V493M1064 504V535M1069 486V469M1075 512V533M1081 521V532M1084 511V517M1087 501V492M1093 537V542M1096 516V553M1099 492V472M1102 519V545M1114 504V510M1114 531V537M1119 500V442M1122 529V543M1125 494V488M1128 500V481M1134 522V524M1140 499V488M1143 482V478M1158 528V534M1161 476V448M1166 488V486M1181 504V482M1181 558V562M1184 501V488M1190 504V522M1196 550V555M1199 504V518M1202 500V491" stroke="#f0e68c" stroke-width="2" fill="none"/>
<path d="M878 502V494M878 504V528M881 504V499M884 504V497M884 478V477M884 521V535M884 541V553M887 504V498M887 478V477M890 504V503M890 525V526M893 504V525M896 500V481M896 504V530M899 504V497M902 504V500M902 539V546M905 476V463M905 504V509M908 504V497M908 474V462M908 521V533M910 504V496M910 458V455M913 504V491M916 504V494M919 490V482M919 504V505M922 467V449M922 504V538M922 538V545M925 504V490M925 490V488M928 504V513M931 504V501M934 504V490M934 490V478M937 504V513M937 513V514M940 504V503M940 500V479M943 504V507M943 517V530M943 530V539M946 504V497M949 504V520M952 504V490M952 510V513M955 504V484M955 510V512M958 472V469M958 504V512M961 504V478M963 504V509M966 504V510M969 504V481M972 504V514M975 495V486M975 504V524M978 504V514M978 523V531M981 504V536M984 504V528M987 504V485M987 481V477M990 504V486M993 504V509M996 504V513M999 479V459M999 504V514M1002 504V498M1005 504V479M1008 504V513M1011 495V481M1011 504V509M1011 524V526M1011 526V528M1011 528V529M1013 504V499M1013 492V469M1016 504V500M1019 504V503M1019 494V493M1022 504V523M1025 504V500M1028 504V500M1028 479V470M1028 516V523M1031 491V468M1031 504V520M1031 521V522M1034 504V503M1037 485V482M1037 504V516M1040 504V501M1043 504V513M1043 513V530M1046 504V512M1049 504V496M1052 504V491M1055 504V495M1055 481V480M1058 504V534M1061 504V489M1064 504V485M1066 504V476M1069 504V493M1069 534V541M1072 504V482M1075 504V512M1078 504V510M1081 504V495M1084 504V511M1087 504V507M1090 504V487M1090 512V546M1093 504V488M1093 517V526M1093 536V537M1093 542V549M1096 504V510M1099 504V520M1102 504V503M1105 504V521M1108 504V500M1108 470V469M1111 504V533M1114 504V495M1114 510V531M1114 537V538M1116 504V489M1116 451V440M1119 504V511M1122 504V491M1122 462V455M1125 504V497M1128 504V524M1131 504V502M1134 500V485M1134 504V522M1134 556V559M1137 504V489M1140 504V506M1143 504V510M1146 504V483M1146 483V479M1149 504V519M1152 466V465M1152 504V526M1155 471V468M1155 504V514M1158 504V510M1161 504V484M1164 504V516M1166 504V488M1169 504V521M1175 504V492M1175 492V470M1178 504V496M1178 496V494M1178 479V475M1181 504V513M1181 548V558M1184 504V501M1184 486V472M1184 506V534M1187 484V479M1187 504V506M1190 504V484M1196 504V518M1196 524V525M1199 504V500M1199 543V545M1202 490V482M1202 504V512" stroke="#ffffff" stroke-width="2" fill="none"/>
<path d="M878 494V492M893 479V476M896 481V480M899 511V520M902 527V535M919 529V534M963 488V482M987 517V533M1019 493V489M1022 495V494M1052 524V536M1096 487V472M1116 472V451M1164 480V465M1166 513V518M1187 504V501" stroke="#483d8b" stroke-width="2" fill="none"/>
<path d="M878 492V491M931 522V546M963 519V534M1011 479V476M1019 489V486M1028 486V479M1037 516V520M1046 473V470M1084 521V535M1108 512V518M1114 466V442M1119 531V543M1125 528V531M1137 520V523M1146 479V476M1149 488V484M1155 485V476M1161 514V527M1166 518V545M1184 534V537" stroke="#b8860b" stroke-width="2" fill="none"/>
<path d="M878 491V490M884 481V478M999 531V543M1031 524V541M1052 536V541M1084 477V473M1087 485V476M1152 470V466" stroke="#cd853f" stroke-width="2" fill="none"/>
<path d="M878 490V488M890 526V527M919 471V468M919 534V537M934 535V541M937 488V485M972 485V482M1043 474V467M1072 521V523M1093 549V552M1096 472V464M1102 488V475M1131 481V480M1178 511V527M1193 533V534M1196 525V550" stroke="#0000ff" stroke-width="2" fill="none"/>
<path d="M878 528V537M881 499V491M884 504V516M887 504V508M890 504V525M893 525V529M899 497V496M908 504V521M910 504V506M916 494V442M919 504V495M922 504V502M925 504V529M928 504V480M931 501V491M934 504V519M937 504V488M940 504V526M943 507V517M949 504V488M955 484V479M958 504V498M963 504V503M966 510V522M972 504V485M981 536V553M984 504V476M987 485V481M990 486V482M993 509V523M996 504V500M999 504V498M1002 498V466M1005 479V457M1008 504V502M1011 509V522M1016 504V529M1019 504V512M1022 523V525M1025 504V521M1028 500V486M1031 504V501M1034 503V493M1040 504V530M1043 504V492M1049 504V516M1052 504V517M1058 504V494M1061 489V479M1069 493V486M1078 510V537M1081 504V521M1084 504V477M1087 507V514M1090 504V512M1093 504V517M1096 504V497M1099 520V540M1102 504V519M1111 504V479M1119 504V500M1122 504V517M1125 497V494M1128 524V534M1131 504V525M1134 504V503M1137 504V505M1140 506V512M1143 504V488M1146 504V518M1149 504V490M1152 504V474M1155 504V491M1161 484V476M1164 516V528M1172 504V532M1175 504V527M1178 504V508M1181 513V537M1184 504V506M1187 506V514M1190 484V483M1193 504V503M1196 504V493M1199 500V480M1202 512V516" stroke="#b0c4de" stroke-width="2" fill="none"/>
<path d="M878 537V588M919 462V442M1143 538V553M1149 529V538M1155 452V447" stroke="#8a2be2" stroke-width="2" fill="none"/>
<path d="M881 491V489M899 509V511M905 493V484M910 506V516M916 504V509M919 482V471M922 484V482M946 536V549M952 490V487M966 491V480M969 481V474M993 487V486M1002 520V526M1013 469V460M1016 529V530M1040 482V479M1046 493V474M1069 519V523M1081 487V483M1102 502V488M1105 486V457M1125 488V481M1146 528V538M1149 490V488M1158 504V486M1161 512V514M1166 486V479M1202 516V549" stroke="#d3d3d3" stroke-width="2" fill="none"/>
<path d="M881 489V483M881 532V544M890 527V530M902 535V539M913 468V452M949 481V480M952 522V544M996 522V531M1005 528V533M1016 481V480M1022 481V474M1025 523V531M1028 523V530M1046 535V542M1052 491V486M1052 486V478M1072 481V475M1087 491V488M1093 526V529M1108 520V531M1119 442V439M1125 481V470M1131 487V483M1137 523V525M1152 474V470M1158 470V444M1169 467V465M1175 527V537M1178 486V479" stroke="#00ffff" stroke-width="2" fill="none"/>
<path d="M881 483V479M908 533V538M1005 536V537M1052 541V552M1090 546V547M1116 523V529M1202 491V490" stroke="#add8e6" stroke-width="2" fill="none"/>
<path d="M881 544V546M1078 482V481M1081 483V470M1102 545V547M1119 543V552M1149 484V481M1181 540V548M1184 488V486M1187 489V484" stroke="#ee82ee" stroke-width="2" fill="none"/>
<path d="M884 497V491M890 498V485M893 480V479M922 482V467M931 491V477M943 493V492M955 477V475M958 527V530M975 535V536M981 497V487M999 492V479M1008 487V468M1011 481V479M1013 518V535M1034 513V527M1040 479V475M1046 474V473M1052 521V524M1064 485V477M1090 483V480M1108 504V512M1122 491V462M1128 480V462M1131 525V556M1137 512V520M1155 491V485M1158 486V483M1164 494V480M1172 479V478M1187 536V539M1190 522V546M1193 504V533" stroke="#b22222" stroke-width="2" fill="none"/>
<path d="M884 491V482M899 520V533M925 482V472M955 512V538M969 523V534M972 534V546M978 485V475M981 487V476M1005 523V528M1011 522V524M1025 483V471M1037 520V525M1046 512V523M1064 538V547M1066 509V537M1069 523V525M1087 492V491M1134 485V468M1146 476V474M1149 519V523" stroke="#5f9ea0" stroke-width="2" fill="none"/>
<path d="M884 477V473M931 473V465M937 546V551M1058 536V540M1064 477V476M1105 537V547M1122 543V551M1125 470V465M1131 483V481M1137 481V478M1193 534V547" stroke="#2f4f4f" stroke-width="2" fill="none"/>
<path d="M884 516V521M887 477V474M896 530V536M910 487V463M913 473V468M919 468V462M919 510V529M931 477V473M934 519V535M940 503V500M943 539V545M946 497V487M946 482V479M949 520V526M952 504V510M955 475V468M966 480V478M975 498V495M978 531V554M981 501V497M987 513V517M996 500V464M999 515V516M1013 497V492M1019 503V494M1031 520V521M1037 504V485M1040 498V482M1043 492V489M1052 517V521M1055 504V553M1061 506V523M1069 511V517M1072 474V468M1072 513V521M1075 534V542M1081 495V487M1090 487V483M1111 479V446M1116 489V487M1119 530V531M1125 514V528M1128 481V480M1140 512V516M1143 510V538M1164 528V529M1169 521V532M1172 504V500" stroke="#fff8dc" stroke-width="2" fill="none"/>
<path d="M884 535V541M890 485V483M899 484V481M902 521V527M913 515V523M916 509V541M949 526V537M978 514V516M990 482V478M993 486V482M1008 514V537M1075 533V534M1116 509V512M1128 534V545M1140 516V543M1166 479V472M1169 488V467M1172 478V476M1178 509V511M1187 539V553M1199 518V539" stroke="#ff1493" stroke-width="2" fill="none"/>
<path d="M887 514V548M902 511V521M910 463V460M925 488V482M937 514V543M943 495V493M955 479V477M958 486V477M963 517V519M975 530V535M999 516V531M1019 520V528M1022 499V495M1025 486V483M1034 504V513M1043 489V474M1058 494V488M1061 523V534M1069 517V519M1075 492V475M1084 517V520M1096 497V487M1105 494V486M1114 495V466M1116 487V472M1134 524V556M1137 489V482M1146 518V528M1172 500V479M1178 494V486M1190 483V477" stroke="#adff2f" stroke-width="2" fill="none"/>
<path d="M890 483V479M905 484V476M1019 486V464M1022 525V534M1043 530V531M1190 477V475" stroke="#fa8072" stroke-width="2" fill="none"/>
<path d="M890 479V477M949 541V547M1072 523V525M1090 480V477M1099 467V466M1114 538V543" stroke="#008b8b" stroke-width="2" fill="none"/>
<path d="M890 530V560M899 481V477M910 516V536M934 478V474M972 482V475M975 536V538M1005 533V536M1016 480V461M1031 522V523M1049 530V534M1055 487V481M1072 475V474M1140 488V475M1146 474V471M1161 527V537M1164 529V535M1178 527V560" stroke="#a9a9a9" stroke-width="2" fill="none"/>
<path d="M896 536V553M949 537V541M1111 533V537M1181 537V540" stroke="#ffff00" stroke-width="2" fill="none"/>
<path d="M899 533V548M952 487V486M993 482V478M1058 534V536M1061 534V547M1149 475V455" stroke="#90ee90" stroke-width="2" fill="none"/>
<path d="M902 483V481M928 480V467M952 513V522M1002 526V532M1022 494V481M1049 516V527M1055 488V487M1066 476V472M1072 482V481M1084 520V521M1093 488V482M1105 521V537M1116 512V523M1155 528V531M1187 501V489M1190 546V567" stroke="#ff8c00" stroke-width="2" fill="none"/>
<path d="M905 525V528M981 553V558M987 477V472M1093 482V477M1155 468V452" stroke="#ffd700" stroke-width="2" fill="none"/>
<path d="M905 528V530M961 534V536M1037 482V465M1049 534V540M1061 479V474M1187 553V559" stroke="#00bfff" stroke-width="2" fill="none"/>
<path d="M905 530V539M966 478V469M1040 541V543M1108 531V536" stroke="#7cfc00" stroke-width="2" fill="none"/>
<path d="M910 460V458M943 492V484M946 487V482M1011 476V475M1046 523V535M1052 478V474M1087 488V485M1093 529V536M1108 477V470M1137 528V552M1149 523V526M1152 535V536M1169 532V541" stroke="#808000" stroke-width="2" fill="none"/>
<path d="M913 523V542M925 529V547M978 516V523M987 533V534M1049 527V530M1064 535V538M1087 514V534M1099 472V467M1105 457V455M1108 518V520M1125 531V555M1152 526V535M1155 476V471M1158 483V470M1196 493V483M1199 539V543" stroke="#6495ed" stroke-width="2" fill="none"/>
<path d="M922 449V446M963 534V537M990 478V470M1040 530V541M1122 455V449" stroke="#9932cc" stroke-width="2" fill="none"/>
<path d="M925 472V450M955 538V543M978 475V473M984 476V470M993 523V534M1031 523V524M1058 488V481M1140 543V555M1149 481V475" stroke="#ff0000" stroke-width="2" fill="none"/>
<path d="M937 481V475M952 481V471M1184 537V545" stroke="#2e8b57" stroke-width="2" fill="none"/>
<path d="M937 543V546M952 486V481M958 530V536M961 522V525M1011 475V455M1069 525V534M1143 478V461M1172 476V466" stroke="#c71585" stroke-width="2" fill="none"/>
<path d="M961 525V534" stroke="#87cefa" stroke-width="2" fill="none"/>
<path d="M975 486V481M1058 481V466M1137 482V481" stroke="#ff00ff" stroke-width="2" fill="none"/>
<path d="M1149 526V529" stroke="#f5f5dc" stroke-width="2" fill="none"/>
<path d="M877 503H1203" stroke="#00ff00" stroke-width="2" stroke-dasharray="1 2" fill="none"/>
</g></svg>
<path d="M693.5 381L693.5 626M685 623.5L693.5 623.5M689 611.5L693.5 611.5M689 599.5L693.5 599.5M689 587.5L693.5 587.5M689 575.5L693.5 575.5M685 563.5L693.5 563.5M689 551.5L693.5 551.5M689 539.5L693.5 539.5M689 527.5L693.5 527.5M689 515.5L693.5 515.5M685 503.5L693.5 503.5M689 491.5L693.5 491.5M689 479.5L693.5 479.5M689 467.5L693.5 467.5M689 455.5L693.5 455.5M685 443.5L693.5 443.5M689 431.5L693.5 431.5M689 419.5L693.5 419.5M689 407.5L693.5 407.5M689 395.5L693.5 395.5M685 383.5L693.5 383.5" stroke="#000" stroke-width="1" fill="none" shape-rendering="crispEdges"/>
<text x="681.5" y="383.1" text-anchor="end" dominant-baseline="central" font-size="12" font-weight="normal" fill="#000" letter-spacing="0.8" >10</text>
<text x="681.5" y="443.1" text-anchor="end" dominant-baseline="central" font-size="12" font-weight="normal" fill="#000" letter-spacing="0.8" >5</text>
<text x="681.5" y="503.1" text-anchor="end" dominant-baseline="central" font-size="12" font-weight="normal" fill="#000" letter-spacing="0.8" >0</text>
<text x="681.5" y="563.1" text-anchor="end" dominant-baseline="central" font-size="12" font-weight="normal" fill="#000" letter-spacing="0.8" >-5</text>
<text x="681.5" y="623.1" text-anchor="end" dominant-baseline="central" font-size="12" font-weight="normal" fill="#000" letter-spacing="0.8" >-10</text>
<path d="M702 634.5L1350.5 634.5M702.5 634.5L702.5 638.5M731.5 634.5L731.5 642.5M760.5 634.5L760.5 638.5M790.5 634.5L790.5 638.5M819.5 634.5L819.5 638.5M849.5 634.5L849.5 638.5M878.5 634.5L878.5 642.5M908.5 634.5L908.5 638.5M937.5 634.5L937.5 638.5M966.5 634.5L966.5 638.5M996.5 634.5L996.5 638.5M1025.5 634.5L1025.5 642.5M1055.5 634.5L1055.5 638.5M1084.5 634.5L1084.5 638.5M1114.5 634.5L1114.5 638.5M1143.5 634.5L1143.5 638.5M1172.5 634.5L1172.5 642.5M1202.5 634.5L1202.5 638.5M1231.5 634.5L1231.5 638.5M1261.5 634.5L1261.5 638.5M1290.5 634.5L1290.5 638.5M1320.5 634.5L1320.5 642.5M1349.5 634.5L1349.5 638.5" stroke="#000" stroke-width="1" fill="none" shape-rendering="crispEdges"/>
<text x="732.5" y="650.5" text-anchor="middle" dominant-baseline="central" font-size="12" font-weight="normal" fill="#000" letter-spacing="0.3" >0</text>
<text x="879.6" y="650.5" text-anchor="middle" dominant-baseline="central" font-size="12" font-weight="normal" fill="#000" letter-spacing="0.3" >50</text>
<text x="1026.8" y="650.5" text-anchor="middle" dominant-baseline="central" font-size="12" font-weight="normal" fill="#000" letter-spacing="0.3" >100</text>
<text x="1173.9" y="650.5" text-anchor="middle" dominant-baseline="central" font-size="12" font-weight="normal" fill="#000" letter-spacing="0.3" >150</text>
<text x="1321" y="650.5" text-anchor="middle" dominant-baseline="central" font-size="12" font-weight="normal" fill="#000" letter-spacing="0.3" >200</text>
<text x="652.5" y="504.5" text-anchor="middle" dominant-baseline="central" font-size="13" font-weight="bold" fill="#000" letter-spacing="0.25" transform="rotate(-90 652.5 504.5)">delta I(t)/sd</text><rect x="686" y="697" width="605" height="257" fill="#fff"/>
<rect x="688" y="699" width="601" height="252" fill="#000"/>
<svg x="688" y="699" width="601" height="252" overflow="hidden"><g transform="translate(-688,-699)">
<path d="M688 946.5H1289M688 931.5H1289M688 916.5H1289M688 901.5H1289M688 885.5H1289M688 870.5H1289M688 855.5H1289M688 840.5H1289M688 824.5H1289M688 809.5H1289M688 794.5H1289M688 778.5H1289M688 763.5H1289M688 748.5H1289M688 733.5H1289M688 717.5H1289M688 702.5H1289" stroke="#d8d8d8" stroke-width="1" stroke-dasharray="3 3" fill="none" shape-rendering="crispEdges"/>
<path d="M679.5 699V951M704.5 699V951M729.5 699V951M754.5 699V951M779.5 699V951M804.5 699V951M829.5 699V951M854.5 699V951M879.5 699V951M904.5 699V951M929.5 699V951M954.5 699V951M979.5 699V951M1004.5 699V951M1029.5 699V951M1054.5 699V951M1079.5 699V951M1104.5 699V951M1129.5 699V951M1154.5 699V951M1179.5 699V951M1204.5 699V951M1229.5 699V951M1254.5 699V951M1279.5 699V951" stroke="#d8d8d8" stroke-width="1" stroke-dasharray="3 3" fill="none" shape-rendering="crispEdges"/>
<path d="M688 755.4H1289" stroke="#00ff00" stroke-width="2.5" stroke-dasharray="8 3 2 3" fill="none"/>
<path d="M688 782.6H1289" stroke="#ffff00" stroke-width="2.5" stroke-dasharray="8 3 2 3" fill="none"/>
<polyline points="694.1 894.5 705.4 884.3 717.3 872.5 728.3 848.2 740.4 817.6 751.2 798.4 763.6 802.5 774.3 788.5 785.6 812.4 797.5 809.2 808.5 823.2 820.3 831.5 831.6 844.5 843.2 815.4 854.5 831.3 865.3 822.9 877.7 831.5 888.4 847.2 900.5 834.5 911.3 824 923.4 839.4 934.2 839.4 945.5 852.3 957 848.2 968.3 847.2 979.9 847.2 991.2 853.3 1003 877.5 1014.2 889 1025.1 891.3 1037.4 893.2 1048.3 898.3 1060.5 898.3 1071.4 904.3 1083.4 896.4 1094.4 871.1 1105.3 883.1 1117.3 901.1 1128.2 900 1140.2 892.3 1151.6 895.1 1163.1 906.3 1174.5 902.2 1185.4 902.2 1197.4 905.4 1208.3 896.4 1220.3 889 1231.3 894.3 1243.3 888.3 1254.2 906.3" stroke="#00ff00" stroke-width="2" stroke-dasharray="2 2" fill="none"/>
<path d="M694.1 890.7L697.9 894.5L694.1 898.3L690.3 894.5Z" fill="#0000ff"/>
<rect x="692" y="730" width="5" height="5" fill="#0000ff"/>
<path d="M705.4 880.5L709.2 884.3L705.4 888.1L701.6 884.3Z" fill="#008b8b"/>
<rect x="703" y="720" width="5" height="5" fill="#008b8b"/>
<path d="M717.3 868.7L721.1 872.5L717.3 876.3L713.5 872.5Z" fill="#7fffd4"/>
<rect x="715" y="753" width="5" height="5" fill="#7fffd4"/>
<path d="M728.3 844.4L732.1 848.2L728.3 852L724.5 848.2Z" fill="#8a2be2"/>
<rect x="726" y="753" width="5" height="5" fill="#8a2be2"/>
<path d="M740.4 813.8L744.2 817.6L740.4 821.4L736.6 817.6Z" fill="#7cfc00"/>
<rect x="738" y="753" width="5" height="5" fill="#7cfc00"/>
<path d="M751.2 794.6L755 798.4L751.2 802.2L747.4 798.4Z" fill="#f5f5dc"/>
<rect x="749" y="753" width="5" height="5" fill="#f5f5dc"/>
<path d="M763.6 798.7L767.4 802.5L763.6 806.3L759.8 802.5Z" fill="#a9a9a9"/>
<rect x="761" y="753" width="5" height="5" fill="#a9a9a9"/>
<path d="M774.3 784.7L778.1 788.5L774.3 792.3L770.5 788.5Z" fill="#9932cc"/>
<rect x="772" y="741" width="5" height="5" fill="#9932cc"/>
<path d="M785.6 808.6L789.4 812.4L785.6 816.2L781.8 812.4Z" fill="#2f4f4f"/>
<rect x="783" y="777" width="5" height="5" fill="#2f4f4f"/>
<path d="M797.5 805.4L801.3 809.2L797.5 813L793.7 809.2Z" fill="#00bfff"/>
<rect x="795" y="741" width="5" height="5" fill="#00bfff"/>
<path d="M808.5 819.4L812.3 823.2L808.5 827L804.7 823.2Z" fill="#ffffff"/>
<rect x="806" y="765" width="5" height="5" fill="#ffffff"/>
<path d="M820.3 827.7L824.1 831.5L820.3 835.3L816.5 831.5Z" fill="#ffd700"/>
<rect x="818" y="753" width="5" height="5" fill="#ffd700"/>
<path d="M831.6 840.7L835.4 844.5L831.6 848.3L827.8 844.5Z" fill="#ffffff"/>
<rect x="829" y="741" width="5" height="5" fill="#ffffff"/>
<path d="M843.2 811.6L847 815.4L843.2 819.2L839.4 815.4Z" fill="#f0e68c"/>
<rect x="841" y="753" width="5" height="5" fill="#f0e68c"/>
<path d="M854.5 827.5L858.3 831.3L854.5 835.1L850.7 831.3Z" fill="#add8e6"/>
<rect x="852" y="753" width="5" height="5" fill="#add8e6"/>
<path d="M865.3 819.1L869.1 822.9L865.3 826.7L861.5 822.9Z" fill="#fff8dc"/>
<rect x="863" y="753" width="5" height="5" fill="#fff8dc"/>
<path d="M877.7 827.7L881.5 831.5L877.7 835.3L873.9 831.5Z" fill="#87cefa"/>
<rect x="875" y="777" width="5" height="5" fill="#87cefa"/>
<path d="M888.4 843.4L892.2 847.2L888.4 851L884.6 847.2Z" fill="#ffffff"/>
<rect x="886" y="765" width="5" height="5" fill="#ffffff"/>
<path d="M900.5 830.7L904.3 834.5L900.5 838.3L896.7 834.5Z" fill="#ff00ff"/>
<rect x="898" y="753" width="5" height="5" fill="#ff00ff"/>
<path d="M911.3 820.2L915.1 824L911.3 827.8L907.5 824Z" fill="#2e8b57"/>
<rect x="909" y="777" width="5" height="5" fill="#2e8b57"/>
<path d="M923.4 835.6L927.2 839.4L923.4 843.2L919.6 839.4Z" fill="#c71585"/>
<rect x="921" y="788" width="5" height="5" fill="#c71585"/>
<path d="M934.2 835.6L938 839.4L934.2 843.2L930.4 839.4Z" fill="#808000"/>
<rect x="932" y="788" width="5" height="5" fill="#808000"/>
<path d="M945.5 848.5L949.3 852.3L945.5 856.1L941.7 852.3Z" fill="#90ee90"/>
<rect x="943" y="848" width="5" height="5" fill="#90ee90"/>
<path d="M957 844.4L960.8 848.2L957 852L953.2 848.2Z" fill="#cd853f"/>
<rect x="954" y="765" width="5" height="5" fill="#cd853f"/>
<path d="M968.3 843.4L972.1 847.2L968.3 851L964.5 847.2Z" fill="#ff0000"/>
<rect x="966" y="765" width="5" height="5" fill="#ff0000"/>
<path d="M979.9 843.4L983.7 847.2L979.9 851L976.1 847.2Z" fill="#fa8072"/>
<rect x="977" y="812" width="5" height="5" fill="#fa8072"/>
<path d="M991.2 849.5L995 853.3L991.2 857.1L987.4 853.3Z" fill="#a9a9a9"/>
<rect x="989" y="943" width="5" height="5" fill="#a9a9a9"/>
<path d="M1003 873.7L1006.8 877.5L1003 881.3L999.2 877.5Z" fill="#ffffff"/>
<rect x="1000" y="777" width="5" height="5" fill="#ffffff"/>
<path d="M1014.2 885.2L1018 889L1014.2 892.8L1010.4 889Z" fill="#20b2aa"/>
<rect x="1012" y="753" width="5" height="5" fill="#20b2aa"/>
<path d="M1025.1 887.5L1028.9 891.3L1025.1 895.1L1021.3 891.3Z" fill="#ee82ee"/>
<rect x="1023" y="765" width="5" height="5" fill="#ee82ee"/>
<path d="M1037.4 889.4L1041.2 893.2L1037.4 897L1033.6 893.2Z" fill="#ffff00"/>
<rect x="1035" y="765" width="5" height="5" fill="#ffff00"/>
<path d="M1048.3 894.5L1052.1 898.3L1048.3 902.1L1044.5 898.3Z" fill="#00ffff"/>
<rect x="1046" y="730" width="5" height="5" fill="#00ffff"/>
<path d="M1060.5 894.5L1064.3 898.3L1060.5 902.1L1056.7 898.3Z" fill="#808000"/>
<rect x="1058" y="765" width="5" height="5" fill="#808000"/>
<path d="M1071.4 900.5L1075.2 904.3L1071.4 908.1L1067.6 904.3Z" fill="#00ffff"/>
<rect x="1069" y="720" width="5" height="5" fill="#00ffff"/>
<path d="M1083.4 892.6L1087.2 896.4L1083.4 900.2L1079.6 896.4Z" fill="#0000ff"/>
<rect x="1081" y="730" width="5" height="5" fill="#0000ff"/>
<path d="M1094.4 867.3L1098.2 871.1L1094.4 874.9L1090.6 871.1Z" fill="#5f9ea0"/>
<rect x="1092" y="720" width="5" height="5" fill="#5f9ea0"/>
<path d="M1105.3 879.3L1109.1 883.1L1105.3 886.9L1101.5 883.1Z" fill="#6495ed"/>
<rect x="1103" y="711" width="5" height="5" fill="#6495ed"/>
<path d="M1117.3 897.3L1121.1 901.1L1117.3 904.9L1113.5 901.1Z" fill="#b8860b"/>
<rect x="1115" y="720" width="5" height="5" fill="#b8860b"/>
<path d="M1128.2 896.2L1132 900L1128.2 903.8L1124.4 900Z" fill="#ff8c00"/>
<rect x="1126" y="711" width="5" height="5" fill="#ff8c00"/>
<path d="M1140.2 888.5L1144 892.3L1140.2 896.1L1136.4 892.3Z" fill="#483d8b"/>
<rect x="1138" y="730" width="5" height="5" fill="#483d8b"/>
<path d="M1151.6 891.3L1155.4 895.1L1151.6 898.9L1147.8 895.1Z" fill="#ff1493"/>
<rect x="1149" y="720" width="5" height="5" fill="#ff1493"/>
<path d="M1163.1 902.5L1166.9 906.3L1163.1 910.1L1159.3 906.3Z" fill="#b22222"/>
<rect x="1161" y="720" width="5" height="5" fill="#b22222"/>
<path d="M1174.5 898.4L1178.3 902.2L1174.5 906L1170.7 902.2Z" fill="#d3d3d3"/>
<rect x="1172" y="711" width="5" height="5" fill="#d3d3d3"/>
<path d="M1185.4 898.4L1189.2 902.2L1185.4 906L1181.6 902.2Z" fill="#adff2f"/>
<rect x="1183" y="705" width="5" height="5" fill="#adff2f"/>
<path d="M1197.4 901.6L1201.2 905.4L1197.4 909.2L1193.6 905.4Z" fill="#ffffff"/>
<rect x="1195" y="702" width="5" height="5" fill="#ffffff"/>
<path d="M1208.3 892.6L1212.1 896.4L1208.3 900.2L1204.5 896.4Z" fill="#fff8dc"/>
<rect x="1206" y="720" width="5" height="5" fill="#fff8dc"/>
<path d="M1220.3 885.2L1224.1 889L1220.3 892.8L1216.5 889Z" fill="#f0e68c"/>
<rect x="1218" y="730" width="5" height="5" fill="#f0e68c"/>
<path d="M1231.3 890.5L1235.1 894.3L1231.3 898.1L1227.5 894.3Z" fill="#20b2aa"/>
<rect x="1229" y="741" width="5" height="5" fill="#20b2aa"/>
<path d="M1243.3 884.5L1247.1 888.3L1243.3 892.1L1239.5 888.3Z" fill="#b0c4de"/>
<rect x="1241" y="711" width="5" height="5" fill="#b0c4de"/>
<path d="M1254.2 902.5L1258 906.3L1254.2 910.1L1250.4 906.3Z" fill="#ffffff"/>
<rect x="1252" y="711" width="5" height="5" fill="#ffffff"/>
</g></svg>
<path d="M683.5 702L683.5 947M675 946.5L683.5 946.5M677 931.5L683.5 931.5M675 916.5L683.5 916.5M677 901.5L683.5 901.5M675 885.5L683.5 885.5M677 870.5L683.5 870.5M675 855.5L683.5 855.5M677 840.5L683.5 840.5M675 824.5L683.5 824.5M677 809.5L683.5 809.5M675 794.5L683.5 794.5M677 778.5L683.5 778.5M675 763.5L683.5 763.5M677 748.5L683.5 748.5M675 733.5L683.5 733.5M677 717.5L683.5 717.5M675 702.5L683.5 702.5" stroke="#000" stroke-width="1" fill="none" shape-rendering="crispEdges"/>
<text x="671.5" y="946.2" text-anchor="end" dominant-baseline="central" font-size="12" font-weight="normal" fill="#000" letter-spacing="0.3" >0</text>
<text x="671.5" y="915.7" text-anchor="end" dominant-baseline="central" font-size="12" font-weight="normal" fill="#000" letter-spacing="0.3" >1</text>
<text x="671.5" y="885.1" text-anchor="end" dominant-baseline="central" font-size="12" font-weight="normal" fill="#000" letter-spacing="0.3" >2</text>
<text x="671.5" y="854.6" text-anchor="end" dominant-baseline="central" font-size="12" font-weight="normal" fill="#000" letter-spacing="0.3" >3</text>
<text x="671.5" y="824.1" text-anchor="end" dominant-baseline="central" font-size="12" font-weight="normal" fill="#000" letter-spacing="0.3" >4</text>
<text x="671.5" y="793.5" text-anchor="end" dominant-baseline="central" font-size="12" font-weight="normal" fill="#000" letter-spacing="0.3" >5</text>
<text x="671.5" y="763" text-anchor="end" dominant-baseline="central" font-size="12" font-weight="normal" fill="#000" letter-spacing="0.3" >6</text>
<text x="671.5" y="732.5" text-anchor="end" dominant-baseline="central" font-size="12" font-weight="normal" fill="#000" letter-spacing="0.3" >7</text>
<text x="671.5" y="702" text-anchor="end" dominant-baseline="central" font-size="12" font-weight="normal" fill="#000" letter-spacing="0.3" >8</text>
<path d="M1294.5 700L1294.5 946M1294.5 941.5L1298.5 941.5M1294.5 938.5L1302.5 938.5M1294.5 926.5L1298.5 926.5M1294.5 914.5L1298.5 914.5M1294.5 907.5L1298.5 907.5M1294.5 903.5L1298.5 903.5M1294.5 899.5L1302.5 899.5M1294.5 887.5L1298.5 887.5M1294.5 875.5L1298.5 875.5M1294.5 869.5L1298.5 869.5M1294.5 864.5L1298.5 864.5M1294.5 860.5L1302.5 860.5M1294.5 848.5L1298.5 848.5M1294.5 836.5L1298.5 836.5M1294.5 830.5L1298.5 830.5M1294.5 825.5L1298.5 825.5M1294.5 821.5L1302.5 821.5M1294.5 809.5L1298.5 809.5M1294.5 798.5L1298.5 798.5M1294.5 791.5L1298.5 791.5M1294.5 786.5L1298.5 786.5M1294.5 782.5L1302.5 782.5M1294.5 770.5L1298.5 770.5M1294.5 759.5L1298.5 759.5M1294.5 752.5L1298.5 752.5M1294.5 747.5L1298.5 747.5M1294.5 743.5L1302.5 743.5M1294.5 731.5L1298.5 731.5M1294.5 720.5L1298.5 720.5M1294.5 713.5L1298.5 713.5M1294.5 708.5L1298.5 708.5M1294.5 704.5L1302.5 704.5" stroke="#000" stroke-width="1" fill="none" shape-rendering="crispEdges"/>
<text x="1305" y="705.3" text-anchor="start" dominant-baseline="central" font-size="12" font-weight="normal" fill="#000" letter-spacing="0.3" >1</text>
<text x="1305" y="744.2" text-anchor="start" dominant-baseline="central" font-size="12" font-weight="normal" fill="#000" letter-spacing="0.3" >0.1</text>
<text x="1305" y="783.1" text-anchor="start" dominant-baseline="central" font-size="12" font-weight="normal" fill="#000" letter-spacing="0.3" >0.01</text>
<text x="1305" y="822" text-anchor="start" dominant-baseline="central" font-size="12" font-weight="normal" fill="#000" letter-spacing="0.3" >0.001</text>
<text x="1305" y="860.9" text-anchor="start" dominant-baseline="central" font-size="12" font-weight="normal" fill="#000" letter-spacing="0.3" >0.0001</text>
<text x="1305" y="899.8" text-anchor="start" dominant-baseline="central" font-size="12" font-weight="normal" fill="#000" letter-spacing="0.3" >1e-05</text>
<text x="1305" y="938.7" text-anchor="start" dominant-baseline="central" font-size="12" font-weight="normal" fill="#000" letter-spacing="0.3" >1e-06</text>
<path d="M692 956.5L1284 956.5M704.5 956.5L704.5 962.5M729.5 956.5L729.5 960.5M754.5 956.5L754.5 964.5M779.5 956.5L779.5 960.5M804.5 956.5L804.5 962.5M829.5 956.5L829.5 960.5M854.5 956.5L854.5 964.5M879.5 956.5L879.5 960.5M904.5 956.5L904.5 962.5M929.5 956.5L929.5 960.5M954.5 956.5L954.5 964.5M979.5 956.5L979.5 960.5M1004.5 956.5L1004.5 962.5M1029.5 956.5L1029.5 960.5M1054.5 956.5L1054.5 964.5M1079.5 956.5L1079.5 960.5M1104.5 956.5L1104.5 962.5M1129.5 956.5L1129.5 960.5M1154.5 956.5L1154.5 964.5M1179.5 956.5L1179.5 960.5M1204.5 956.5L1204.5 962.5M1229.5 956.5L1229.5 960.5M1254.5 956.5L1254.5 964.5M1279.5 956.5L1279.5 960.5" stroke="#000" stroke-width="1" fill="none" shape-rendering="crispEdges"/>
<text x="754.8" y="972.5" text-anchor="middle" dominant-baseline="central" font-size="12" font-weight="normal" fill="#000" letter-spacing="0.3" >0.02</text>
<text x="854.8" y="972.5" text-anchor="middle" dominant-baseline="central" font-size="12" font-weight="normal" fill="#000" letter-spacing="0.3" >0.04</text>
<text x="954.8" y="972.5" text-anchor="middle" dominant-baseline="central" font-size="12" font-weight="normal" fill="#000" letter-spacing="0.3" >0.06</text>
<text x="1054.8" y="972.5" text-anchor="middle" dominant-baseline="central" font-size="12" font-weight="normal" fill="#000" letter-spacing="0.3" >0.08</text>
<text x="1154.8" y="972.5" text-anchor="middle" dominant-baseline="central" font-size="12" font-weight="normal" fill="#000" letter-spacing="0.3" >0.1</text>
<text x="1254.8" y="972.5" text-anchor="middle" dominant-baseline="central" font-size="12" font-weight="normal" fill="#000" letter-spacing="0.3" >0.12</text>
<text x="654.5" y="825" text-anchor="middle" dominant-baseline="central" font-size="14" font-weight="bold" fill="#000" letter-spacing="0.1" transform="rotate(-90 654.5 825)">normalized Chi^2</text>
<text x="991" y="990" text-anchor="middle" dominant-baseline="central" font-size="14" font-weight="bold" fill="#000" letter-spacing="0.1" >q (1/Angstrom)</text>
<text x="1354.5" y="825" text-anchor="middle" dominant-baseline="central" font-size="14" font-weight="bold" fill="#000" letter-spacing="0.3" transform="rotate(90 1354.5 825)">P value (log scale)</text></svg>
<div class="cb" style="left:637px;top:671px"></div>
<div class="t" style="left:654px;top:668px;width:80px;height:18px;line-height:18px;text-align:left;color:#000;font-size:12px;font-weight:normal;letter-spacing:0.3px;">Reverse</div>
<div class="cb" style="left:821px;top:671px"><svg width="10" height="10" style="position:absolute;left:0;top:0"><path d="M1.5 4.5 L4 7.5 L8.5 1.5" stroke="#000" stroke-width="2" fill="none"/></svg></div>
<div class="t" style="left:838px;top:668px;width:200px;height:18px;line-height:18px;text-align:left;color:#000;font-size:12px;font-weight:normal;letter-spacing:0.3px;">Use standard deviations</div>
<div class="cb" style="left:1005px;top:671px"></div>
<div class="t" style="left:1022px;top:668px;width:100px;height:18px;line-height:18px;text-align:left;color:#000;font-size:12px;font-weight:normal;letter-spacing:0.3px;">By percent</div>
<div class="cb" style="left:1189px;top:671px"><svg width="10" height="10" style="position:absolute;left:0;top:0"><path d="M1.5 4.5 L4 7.5 L8.5 1.5" stroke="#000" stroke-width="2" fill="none"/></svg></div>
<div class="t" style="left:1206px;top:668px;width:80px;height:18px;line-height:18px;text-align:left;color:#000;font-size:12px;font-weight:normal;letter-spacing:0.3px;">Group</div>
<div class="cb" style="left:637px;top:1011px"><svg width="10" height="10" style="position:absolute;left:0;top:0"><path d="M1.5 4.5 L4 7.5 L8.5 1.5" stroke="#000" stroke-width="2" fill="none"/></svg></div>
<div class="t" style="left:654px;top:1008px;width:150px;height:18px;line-height:18px;text-align:left;color:#000;font-size:12px;font-weight:normal;letter-spacing:0.3px;">Plot Chi^2/RMSD</div>
<div class="cb" style="left:1005px;top:1011px"><svg width="10" height="10" style="position:absolute;left:0;top:0"><path d="M1.5 4.5 L4 7.5 L8.5 1.5" stroke="#000" stroke-width="2" fill="none"/></svg></div>
<div class="t" style="left:1022px;top:1008px;width:150px;height:18px;line-height:18px;text-align:left;color:#000;font-size:12px;font-weight:normal;letter-spacing:0.3px;">Plot CorMap P values</div>
<div class="b" style="left:700px;top:1027px;width:80px;height:23px;line-height:22px;font-size:10px">&lt;</div>
<div style="left:780px;top:1027px;width:447px;height:23px;border-top:2px solid #808080;border-left:1px solid #808080;border-bottom:1px solid #fff;border-right:1px solid #fff;background:linear-gradient(90deg,#c0c0c0 0%,#cfcfcf 15%,#d6d6d6 28%,#c8c8c8 50%,#b0b0b0 70%,#9a9a9a 88%,#888 100%)"></div>
<div style="left:815px;top:1029px;width:2px;height:20px;background:#a8a8a8;border-right:1px solid #e8e8e8"></div>
<div style="left:920px;top:1029px;width:2px;height:20px;background:#a8a8a8;border-right:1px solid #e8e8e8"></div>
<div style="left:1057px;top:1029px;width:2px;height:20px;background:#a8a8a8;border-right:1px solid #e8e8e8"></div>
<div style="left:1174px;top:1029px;width:2px;height:20px;background:#a8a8a8;border-right:1px solid #e8e8e8"></div>
<div class="b" style="left:1228px;top:1027px;width:79px;height:23px;line-height:22px;font-size:10px">&gt;</div>
<div class="t" style="left:1320px;top:1027px;width:40px;height:23px;line-height:23px;text-align:center;color:#000;font-size:12px;font-weight:normal;letter-spacing:0.3px;">50</div>
<div class="t" style="left:636px;top:1050px;width:736px;height:15px;line-height:15px;text-align:center;color:#000;font-size:12px;font-weight:bold;letter-spacing:0.3px;">Global Gaussians</div>
<div class="b r" style="left:636px;top:1065px;width:39px;height:24px;line-height:23px;">3D</div>
<div class="b r" style="left:675px;top:1065px;width:146px;height:24px;line-height:23px;">Concentration reference</div>
<div class="b" style="left:821px;top:1065px;width:92px;height:24px;line-height:23px;">Residuals</div>
<div class="b" style="left:913px;top:1065px;width:91px;height:24px;line-height:23px;">Show CorMap</div>
<div class="b r" style="left:1004px;top:1065px;width:91px;height:24px;line-height:23px;">Save Plots</div>
<div class="b" style="left:1095px;top:1065px;width:92px;height:24px;line-height:23px;">Global fit by q</div>
<div class="b" style="left:1187px;top:1065px;width:92px;height:24px;line-height:23px;">Cancel</div>
<div class="b" style="left:1279px;top:1065px;width:93px;height:24px;line-height:23px;">Keep</div>
<div class="b r" style="left:636px;top:1089px;width:110px;height:24px;line-height:23px;">EMG+GMG</div>
<div class="b r" style="left:746px;top:1089px;width:157px;height:24px;line-height:23px;">Global Gaussians</div>
<div class="b r" style="left:903px;top:1089px;width:156px;height:24px;line-height:23px;">Scale Analysis</div>
<div class="b r" style="left:1059px;top:1089px;width:156px;height:24px;line-height:23px;">Trial make I(q)</div>
<div class="b r" style="left:1215px;top:1089px;width:157px;height:24px;line-height:23px;">Guinier</div>
<div class="cb" style="left:637px;top:1118px"></div>
<div class="t" style="left:654px;top:1114px;width:80px;height:20px;line-height:20px;text-align:left;color:#000;font-size:12px;font-weight:normal;letter-spacing:0.3px;">Scroll</div>
<div class="cb" style="left:759px;top:1118px"><svg width="10" height="10" style="position:absolute;left:0;top:0"><path d="M1.5 4.5 L4 7.5 L8.5 1.5" stroke="#000" stroke-width="2" fill="none"/></svg></div>
<div class="t" style="left:777px;top:1114px;width:100px;height:20px;line-height:20px;text-align:left;color:#000;font-size:12px;font-weight:normal;letter-spacing:0.3px;">P &gt;= 0.05</div>
<div class="cb" style="left:882px;top:1118px"><svg width="10" height="10" style="position:absolute;left:0;top:0"><path d="M1.5 4.5 L4 7.5 L8.5 1.5" stroke="#000" stroke-width="2" fill="none"/></svg></div>
<div class="t" style="left:899px;top:1114px;width:120px;height:20px;line-height:20px;text-align:left;color:#000;font-size:12px;font-weight:normal;letter-spacing:0.3px;">0.05 &gt; P &gt;= 0.01</div>
<div class="cb" style="left:1005px;top:1118px"><svg width="10" height="10" style="position:absolute;left:0;top:0"><path d="M1.5 4.5 L4 7.5 L8.5 1.5" stroke="#000" stroke-width="2" fill="none"/></svg></div>
<div class="t" style="left:1022px;top:1114px;width:100px;height:20px;line-height:20px;text-align:left;color:#000;font-size:12px;font-weight:normal;letter-spacing:0.3px;">P &lt; 0.01</div>
<div class="b" style="left:1127px;top:1113px;width:121px;height:22px;line-height:21px;">Make result curves</div>
<div class="b" style="left:1248px;top:1113px;width:124px;height:22px;line-height:21px;">To produced data</div>
<div style="left:636px;top:1133px;width:491px;height:3px;background:#007878;"></div>
<div class="b" style="left:636px;top:1136px;width:30px;height:23px;line-height:22px;font-size:10px">&lt;</div>
<div class="t" style="left:666px;top:1136px;width:40px;height:23px;line-height:23px;text-align:center;color:#000;font-size:12px;font-weight:normal;letter-spacing:0.3px;">4 of 4</div>
<div class="b r" style="left:706px;top:1136px;width:30px;height:23px;line-height:22px;font-size:10px">&gt;</div>
<div style="left:737px;top:1136px;width:142px;height:22px;background:#fff;border-top:2px solid #000;border-left:2px solid #000;border-right:1px solid #d0d0d0;border-bottom:1px solid #d0d0d0"></div>
<div class="t" style="left:737px;top:1136px;width:142px;height:22px;line-height:22px;text-align:center;color:#000;font-size:12px;font-weight:normal;letter-spacing:0.3px;">136.169</div>
<div style="left:880px;top:1136px;width:143px;height:22px;background:#fff;border-top:2px solid #000;border-left:2px solid #000;border-right:1px solid #d0d0d0;border-bottom:1px solid #d0d0d0"></div>
<div class="t" style="left:880px;top:1136px;width:143px;height:22px;line-height:22px;text-align:center;color:#000;font-size:12px;font-weight:normal;letter-spacing:0.3px;">6.22092</div>
<div style="left:1024px;top:1136px;width:143px;height:22px;background:#fff;border-top:2px solid #000;border-left:2px solid #000;border-right:1px solid #d0d0d0;border-bottom:1px solid #d0d0d0"></div>
<div class="t" style="left:1024px;top:1136px;width:143px;height:22px;line-height:22px;text-align:center;color:#000;font-size:12px;font-weight:normal;letter-spacing:0.3px;">8.29402</div>
<div style="left:1168px;top:1136px;width:144px;height:22px;background:#fff;border-top:2px solid #000;border-left:2px solid #000;border-right:1px solid #d0d0d0;border-bottom:1px solid #d0d0d0"></div>
<div class="t" style="left:1168px;top:1136px;width:144px;height:22px;line-height:22px;text-align:center;color:#000;font-size:12px;font-weight:normal;letter-spacing:0.3px;">-1.55032</div>
<div class="b" style="left:1312px;top:1136px;width:60px;height:23px;line-height:22px;">Save</div>
<div style="left:636px;top:1157px;width:736px;height:2px;background:#007878;"></div>
<div class="cb" style="left:637px;top:1165px"><svg width="10" height="10" style="position:absolute;left:0;top:0"><path d="M1.5 4.5 L4 7.5 L8.5 1.5" stroke="#000" stroke-width="2" fill="none"/></svg></div>
<div class="t" style="left:654px;top:1160px;width:40px;height:21px;line-height:21px;text-align:left;color:#000;font-size:12px;font-weight:normal;letter-spacing:0.3px;">SD</div>
<div class="cb" style="left:684px;top:1165px"><svg width="10" height="10" style="position:absolute;left:0;top:0"><path d="M1.5 4.5 L4 7.5 L8.5 1.5" stroke="#000" stroke-width="2" fill="none"/></svg></div>
<div class="t" style="left:701px;top:1160px;width:70px;height:21px;line-height:21px;text-align:left;color:#000;font-size:12px;font-weight:normal;letter-spacing:0.3px;">Eq width</div>
<div class="cb" style="left:763px;top:1165px"><svg width="10" height="10" style="position:absolute;left:0;top:0"><path d="M1.5 4.5 L4 7.5 L8.5 1.5" stroke="#000" stroke-width="2" fill="none"/></svg></div>
<div class="t" style="left:781px;top:1160px;width:70px;height:21px;line-height:21px;text-align:left;color:#000;font-size:12px;font-weight:normal;letter-spacing:0.3px;">Eq dist1</div>
<div class="cb" style="left:840px;top:1165px"><svg width="10" height="10" style="position:absolute;left:0;top:0"><path d="M1.5 4.5 L4 7.5 L8.5 1.5" stroke="#000" stroke-width="2" fill="none"/></svg></div>
<div class="t" style="left:857px;top:1160px;width:70px;height:21px;line-height:21px;text-align:left;color:#000;font-size:12px;font-weight:normal;letter-spacing:0.3px;">Eq dist2</div>
<div class="b" style="left:915px;top:1159px;width:79px;height:23px;line-height:22px;">Global Fit</div>
<div class="b r" style="left:994px;top:1159px;width:116px;height:23px;line-height:22px;">Recompute nChi^2</div>
<div class="t" style="left:1110px;top:1159px;width:39px;height:23px;line-height:23px;text-align:center;color:#000;font-size:12px;font-weight:normal;letter-spacing:0px;">1.5193</div>
<div style="left:1149px;top:1159px;width:110px;height:23px;background:#ff0000;border-top:2px solid #000;border-left:2px solid #000;border-right:1px solid #fff;border-bottom:2px solid #fff;box-shadow:-1px -1px 0 #909090"></div>
<div class="t" style="left:1149px;top:1160px;width:110px;height:21px;line-height:21px;text-align:center;color:#000;font-size:12px;font-weight:normal;letter-spacing:0.3px;">50</div>
<div style="left:1259px;top:1159px;width:113px;height:23px;background:#ff0000;border-top:2px solid #000;border-left:2px solid #000;border-right:1px solid #fff;border-bottom:2px solid #fff;box-shadow:-1px -1px 0 #909090"></div>
<div class="t" style="left:1259px;top:1160px;width:113px;height:21px;line-height:21px;text-align:center;color:#000;font-size:12px;font-weight:normal;letter-spacing:0.3px;">160</div>
<div style="left:636px;top:1182px;width:736px;height:2px;background:#007878;"></div>
<div style="left:3px;top:1183px;width:1369px;height:1px;background:#007878;"></div>
<div class="b" style="left:3px;top:1184px;width:166px;height:24px;line-height:23px;">Help</div>
<div class="b r" style="left:169px;top:1184px;width:166px;height:24px;line-height:23px;">Options</div>
<div style="left:335px;top:1184px;width:665px;height:24px;background:#c4c4c4;border-top:1px solid #808080;border-left:1px solid #808080;border-right:1px solid #fff;border-bottom:1px solid #fff"></div>
<div style="left:1000px;top:1184px;width:40px;height:24px;background:#c4c4c4;border-top:1px solid #808080;border-left:1px solid #808080;border-right:1px solid #fff;border-bottom:1px solid #fff"></div>
<div class="b" style="left:1040px;top:1184px;width:332px;height:24px;line-height:23px;">Close</div>
<div style="left:3px;top:1208px;width:1369px;height:1px;background:#007878;"></div>
</body></html>
